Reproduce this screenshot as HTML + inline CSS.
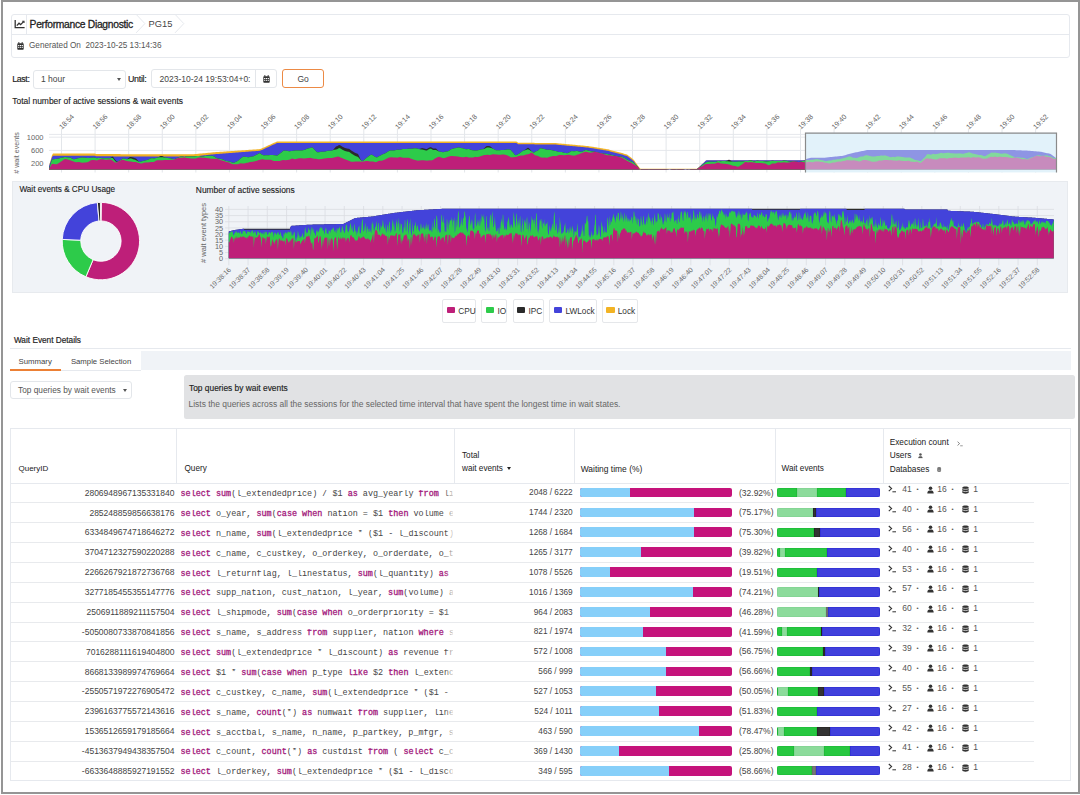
<!DOCTYPE html>
<html><head><meta charset="utf-8"><style>
*{box-sizing:border-box;margin:0;padding:0}
html,body{width:1080px;height:795px;overflow:hidden;background:#fff;font-family:"Liberation Sans", sans-serif;color:#222}
.abs{position:absolute}
.frame{position:absolute;left:1px;top:0;width:1079px;height:794px;border:2px solid #959595;pointer-events:none;z-index:50}
.t{position:absolute;white-space:pre;line-height:1}
.hdr{position:absolute;left:11px;top:14px;width:1059px;height:43.8px;border:1px solid #E6E9EE;border-radius:3px}
.sel{position:absolute;border:1px solid #E3E6EA;border-radius:3px;background:#fff}
.caret{position:absolute;width:0;height:0;border-left:2.5px solid transparent;border-right:2.5px solid transparent;border-top:3px solid #555}
.panel{position:absolute;left:12px;top:181px;width:1055.5px;height:112.2px;background:#F0F3F7;border:1px solid #E7EAEE}
.leg{position:absolute;top:298.5px;height:24px;border:1px solid #E5E7EA;border-radius:2px;background:#fff}
.leg i{position:absolute;left:3.4px;top:7.6px;width:8.5px;height:6px;border-radius:1px}
.leg span{position:absolute;left:15px;top:7px;font-size:8.3px;color:#333;white-space:pre;line-height:1}
.tbl{position:absolute;left:10px;top:428px;width:1060.8px;height:352.5px;border:1px solid #E6E9EE}
.row{position:absolute;left:0;height:19.87px;width:1058px}
.rb{position:absolute;height:1px;background:#E8EAED}
.q{position:absolute;left:169.5px;font-family:"Liberation Mono", monospace;font-size:8.45px;color:#444;white-space:pre;line-height:1;width:272px;overflow:hidden}
.q b{color:#A3197C;font-weight:normal;-webkit-text-stroke:0.3px #A3197C}
.fade{position:absolute;left:434px;width:10px;height:14px;background:linear-gradient(to right,rgba(255,255,255,0),#fff)}
.wt{position:absolute;left:569px;top:4.2px;width:151.5px;height:9.8px;border-radius:2px;overflow:hidden;background:#C5137B}
.wt i{position:absolute;left:0;top:0;bottom:0;background:#86CFF9}
.we{position:absolute;left:765.5px;top:4.6px;width:103.6px;height:9.2px;border-radius:2px;overflow:hidden;display:flex}
.we i{display:block;height:100%;box-sizing:border-box}
.num{position:absolute;font-size:8.5px;color:#444;white-space:pre;line-height:1}
</style></head><body>
<div class="frame"></div>

<div class="hdr"></div>
<div class="abs" style="left:12px;top:33.5px;width:1057px;height:1px;background:#E6E9EE"></div>
<div class="abs" style="left:26px;top:15px;width:1px;height:18.5px;background:#E6E9EE"></div>
<svg class="abs" style="left:14px;top:19px" width="12" height="10" viewBox="0 0 12 10"><path d="M1.2,1 V8.6 H10.6" stroke="#333" stroke-width="1.3" fill="none"/><path d="M2.8,6.6 L5,4.2 L6.6,5.6 L9.6,2.6" stroke="#333" stroke-width="1.3" fill="none"/><path d="M8.2,2.2 H10 V4" stroke="#333" stroke-width="1.1" fill="none"/></svg>
<div class="t" style="left:29.6px;top:20.1px;font-size:10.3px;letter-spacing:-0.3px;color:#222;-webkit-text-stroke:0.28px #222">Performance Diagnostic</div>
<svg class="abs" style="left:135px;top:14px" width="52" height="20"><path d="M1.1,0.3 L9.9,9.6 L1.1,18.9" stroke="#E6E9EE" stroke-width="1" fill="none"/><path d="M40,0.3 L48.8,9.6 L40,18.9" stroke="#E6E9EE" stroke-width="1" fill="none"/></svg>
<div class="t" style="left:148.6px;top:19.8px;font-size:9.3px;color:#444">PG15</div>
<svg class="abs" style="left:17px;top:41.5px" width="7.0" height="8.0" viewBox="0 0 7 8"><rect x="0.3" y="1.2" width="6.4" height="6.5" rx="0.8" fill="#333"/><rect x="1.4" y="0" width="0.9" height="1.8" fill="#333"/><rect x="4.7" y="0" width="0.9" height="1.8" fill="#333"/><g fill="#fff"><rect x="1.1" y="3" width="1.2" height="1"/><rect x="2.9" y="3" width="1.2" height="1"/><rect x="4.7" y="3" width="1.2" height="1"/><rect x="1.1" y="4.8" width="1.2" height="1"/><rect x="2.9" y="4.8" width="1.2" height="1"/><rect x="4.7" y="4.8" width="1.2" height="1"/></g></svg>
<div class="t" style="left:29px;top:42px;font-size:8.2px;color:#555">Generated On  2023-10-25 13:14:36</div>
<div class="t" style="left:12.2px;top:74.6px;font-size:8.9px;letter-spacing:-0.38px;color:#222;-webkit-text-stroke:0.16px #222">Last:</div>
<div class="sel" style="left:33px;top:70px;width:92.5px;height:18.5px"></div>
<div class="t" style="left:41px;top:75px;font-size:8.5px;color:#444">1 hour</div>
<div class="caret" style="left:116.5px;top:78px"></div>
<div class="t" style="left:128px;top:74.6px;font-size:8.9px;letter-spacing:-0.3px;color:#222;-webkit-text-stroke:0.16px #222">Until:</div>
<div class="sel" style="left:151px;top:69px;width:126px;height:18.5px"></div>
<div class="abs" style="left:254.5px;top:69.5px;width:1px;height:17.5px;background:#E3E6EA"></div>
<div class="t" style="left:159.5px;top:74.5px;font-size:8.5px;color:#444">2023-10-24 19:53:04+0:</div>
<svg class="abs" style="left:262.5px;top:74.5px" width="7.0" height="8.0" viewBox="0 0 7 8"><rect x="0.3" y="1.2" width="6.4" height="6.5" rx="0.8" fill="#333"/><rect x="1.4" y="0" width="0.9" height="1.8" fill="#333"/><rect x="4.7" y="0" width="0.9" height="1.8" fill="#333"/><g fill="#fff"><rect x="1.1" y="3" width="1.2" height="1"/><rect x="2.9" y="3" width="1.2" height="1"/><rect x="4.7" y="3" width="1.2" height="1"/><rect x="1.1" y="4.8" width="1.2" height="1"/><rect x="2.9" y="4.8" width="1.2" height="1"/><rect x="4.7" y="4.8" width="1.2" height="1"/></g></svg>
<div class="abs" style="left:282px;top:69px;width:42px;height:18.5px;border:1.3px solid #EC8A45;border-radius:3px;background:#fff"></div>
<div class="t" style="left:297.5px;top:74.5px;font-size:8.5px;color:#444">Go</div>
<div class="t" style="left:12.2px;top:96.6px;font-size:8.47px;color:#222;-webkit-text-stroke:0.12px #222">Total number of active sessions &amp; wait events</div>
<svg class="abs" style="left:0;top:0;font-family:"Liberation Sans", sans-serif" width="1080" height="180">
<line x1="49" y1="134.4" x2="1057" y2="134.4" stroke="#E6E8EC" stroke-width="1"/>
<line x1="49" y1="137.2" x2="1057" y2="137.2" stroke="#E6E8EC" stroke-width="1"/>
<line x1="49" y1="150.4" x2="1057" y2="150.4" stroke="#E6E8EC" stroke-width="1"/>
<line x1="49" y1="163.6" x2="1057" y2="163.6" stroke="#E6E8EC" stroke-width="1"/>
<line x1="61.50" y1="128.5" x2="61.50" y2="172.5" stroke="#E3E6EA" stroke-width="1"/>
<text x="62.00" y="129.8" transform="rotate(-45 62.00 129.8)" font-size="7.1" fill="#5f5f5f">18:54</text>
<line x1="95.09" y1="128.5" x2="95.09" y2="172.5" stroke="#E3E6EA" stroke-width="1"/>
<text x="95.59" y="129.8" transform="rotate(-45 95.59 129.8)" font-size="7.1" fill="#5f5f5f">18:56</text>
<line x1="128.68" y1="128.5" x2="128.68" y2="172.5" stroke="#E3E6EA" stroke-width="1"/>
<text x="129.18" y="129.8" transform="rotate(-45 129.18 129.8)" font-size="7.1" fill="#5f5f5f">18:58</text>
<line x1="162.27" y1="128.5" x2="162.27" y2="172.5" stroke="#E3E6EA" stroke-width="1"/>
<text x="162.77" y="129.8" transform="rotate(-45 162.77 129.8)" font-size="7.1" fill="#5f5f5f">19:00</text>
<line x1="195.86" y1="128.5" x2="195.86" y2="172.5" stroke="#E3E6EA" stroke-width="1"/>
<text x="196.36" y="129.8" transform="rotate(-45 196.36 129.8)" font-size="7.1" fill="#5f5f5f">19:02</text>
<line x1="229.45" y1="128.5" x2="229.45" y2="172.5" stroke="#E3E6EA" stroke-width="1"/>
<text x="229.95" y="129.8" transform="rotate(-45 229.95 129.8)" font-size="7.1" fill="#5f5f5f">19:04</text>
<line x1="263.04" y1="128.5" x2="263.04" y2="172.5" stroke="#E3E6EA" stroke-width="1"/>
<text x="263.54" y="129.8" transform="rotate(-45 263.54 129.8)" font-size="7.1" fill="#5f5f5f">19:06</text>
<line x1="296.63" y1="128.5" x2="296.63" y2="172.5" stroke="#E3E6EA" stroke-width="1"/>
<text x="297.13" y="129.8" transform="rotate(-45 297.13 129.8)" font-size="7.1" fill="#5f5f5f">19:08</text>
<line x1="330.22" y1="128.5" x2="330.22" y2="172.5" stroke="#E3E6EA" stroke-width="1"/>
<text x="330.72" y="129.8" transform="rotate(-45 330.72 129.8)" font-size="7.1" fill="#5f5f5f">19:10</text>
<line x1="363.81" y1="128.5" x2="363.81" y2="172.5" stroke="#E3E6EA" stroke-width="1"/>
<text x="364.31" y="129.8" transform="rotate(-45 364.31 129.8)" font-size="7.1" fill="#5f5f5f">19:12</text>
<line x1="397.40" y1="128.5" x2="397.40" y2="172.5" stroke="#E3E6EA" stroke-width="1"/>
<text x="397.90" y="129.8" transform="rotate(-45 397.90 129.8)" font-size="7.1" fill="#5f5f5f">19:14</text>
<line x1="430.99" y1="128.5" x2="430.99" y2="172.5" stroke="#E3E6EA" stroke-width="1"/>
<text x="431.49" y="129.8" transform="rotate(-45 431.49 129.8)" font-size="7.1" fill="#5f5f5f">19:16</text>
<line x1="464.58" y1="128.5" x2="464.58" y2="172.5" stroke="#E3E6EA" stroke-width="1"/>
<text x="465.08" y="129.8" transform="rotate(-45 465.08 129.8)" font-size="7.1" fill="#5f5f5f">19:18</text>
<line x1="498.17" y1="128.5" x2="498.17" y2="172.5" stroke="#E3E6EA" stroke-width="1"/>
<text x="498.67" y="129.8" transform="rotate(-45 498.67 129.8)" font-size="7.1" fill="#5f5f5f">19:20</text>
<line x1="531.76" y1="128.5" x2="531.76" y2="172.5" stroke="#E3E6EA" stroke-width="1"/>
<text x="532.26" y="129.8" transform="rotate(-45 532.26 129.8)" font-size="7.1" fill="#5f5f5f">19:22</text>
<line x1="565.35" y1="128.5" x2="565.35" y2="172.5" stroke="#E3E6EA" stroke-width="1"/>
<text x="565.85" y="129.8" transform="rotate(-45 565.85 129.8)" font-size="7.1" fill="#5f5f5f">19:24</text>
<line x1="598.94" y1="128.5" x2="598.94" y2="172.5" stroke="#E3E6EA" stroke-width="1"/>
<text x="599.44" y="129.8" transform="rotate(-45 599.44 129.8)" font-size="7.1" fill="#5f5f5f">19:26</text>
<line x1="632.53" y1="128.5" x2="632.53" y2="172.5" stroke="#E3E6EA" stroke-width="1"/>
<text x="633.03" y="129.8" transform="rotate(-45 633.03 129.8)" font-size="7.1" fill="#5f5f5f">19:28</text>
<line x1="666.12" y1="128.5" x2="666.12" y2="172.5" stroke="#E3E6EA" stroke-width="1"/>
<text x="666.62" y="129.8" transform="rotate(-45 666.62 129.8)" font-size="7.1" fill="#5f5f5f">19:30</text>
<line x1="699.71" y1="128.5" x2="699.71" y2="172.5" stroke="#E3E6EA" stroke-width="1"/>
<text x="700.21" y="129.8" transform="rotate(-45 700.21 129.8)" font-size="7.1" fill="#5f5f5f">19:32</text>
<line x1="733.30" y1="128.5" x2="733.30" y2="172.5" stroke="#E3E6EA" stroke-width="1"/>
<text x="733.80" y="129.8" transform="rotate(-45 733.80 129.8)" font-size="7.1" fill="#5f5f5f">19:34</text>
<line x1="766.89" y1="128.5" x2="766.89" y2="172.5" stroke="#E3E6EA" stroke-width="1"/>
<text x="767.39" y="129.8" transform="rotate(-45 767.39 129.8)" font-size="7.1" fill="#5f5f5f">19:36</text>
<line x1="800.48" y1="128.5" x2="800.48" y2="172.5" stroke="#E3E6EA" stroke-width="1"/>
<text x="800.98" y="129.8" transform="rotate(-45 800.98 129.8)" font-size="7.1" fill="#5f5f5f">19:38</text>
<line x1="834.07" y1="128.5" x2="834.07" y2="172.5" stroke="#E3E6EA" stroke-width="1"/>
<text x="834.57" y="129.8" transform="rotate(-45 834.57 129.8)" font-size="7.1" fill="#5f5f5f">19:40</text>
<line x1="867.66" y1="128.5" x2="867.66" y2="172.5" stroke="#E3E6EA" stroke-width="1"/>
<text x="868.16" y="129.8" transform="rotate(-45 868.16 129.8)" font-size="7.1" fill="#5f5f5f">19:42</text>
<line x1="901.25" y1="128.5" x2="901.25" y2="172.5" stroke="#E3E6EA" stroke-width="1"/>
<text x="901.75" y="129.8" transform="rotate(-45 901.75 129.8)" font-size="7.1" fill="#5f5f5f">19:44</text>
<line x1="934.84" y1="128.5" x2="934.84" y2="172.5" stroke="#E3E6EA" stroke-width="1"/>
<text x="935.34" y="129.8" transform="rotate(-45 935.34 129.8)" font-size="7.1" fill="#5f5f5f">19:46</text>
<line x1="968.43" y1="128.5" x2="968.43" y2="172.5" stroke="#E3E6EA" stroke-width="1"/>
<text x="968.93" y="129.8" transform="rotate(-45 968.93 129.8)" font-size="7.1" fill="#5f5f5f">19:48</text>
<line x1="1002.02" y1="128.5" x2="1002.02" y2="172.5" stroke="#E3E6EA" stroke-width="1"/>
<text x="1002.52" y="129.8" transform="rotate(-45 1002.52 129.8)" font-size="7.1" fill="#5f5f5f">19:50</text>
<line x1="1035.61" y1="128.5" x2="1035.61" y2="172.5" stroke="#E3E6EA" stroke-width="1"/>
<text x="1036.11" y="129.8" transform="rotate(-45 1036.11 129.8)" font-size="7.1" fill="#5f5f5f">19:52</text>
<text x="43.5" y="139.89999999999998" text-anchor="end" font-size="7.5" fill="#666">1000</text>
<text x="43.5" y="153.1" text-anchor="end" font-size="7.5" fill="#666">600</text>
<text x="43.5" y="166.29999999999998" text-anchor="end" font-size="7.5" fill="#666">200</text>
<text x="19" y="153" transform="rotate(-90 19 153)" text-anchor="middle" font-size="7.1" fill="#666"># wait events</text>
<rect x="805" y="132.7" width="252" height="39.7" fill="#E2F2FA"/>
<polygon points="49.0,169.4 49.0,166.20 50.0,162.54 51.0,158.89 52.0,155.23 53.0,153.40 54.0,153.40 55.0,153.40 56.0,153.40 57.0,153.40 58.0,153.40 59.0,153.40 60.0,153.40 61.0,153.40 62.0,153.40 63.0,153.40 64.0,153.40 65.0,153.40 66.0,153.40 67.0,153.40 68.0,153.40 69.0,153.40 70.0,153.40 71.0,153.40 72.0,153.40 73.0,153.40 74.0,153.40 75.0,153.40 76.0,153.40 77.0,153.40 78.0,153.40 79.0,153.40 80.0,153.40 81.0,153.40 82.0,153.40 83.0,153.40 84.0,153.40 85.0,153.40 86.0,153.40 87.0,153.40 88.0,153.40 89.0,153.40 90.0,153.40 91.0,153.40 92.0,153.40 93.0,153.40 94.0,153.40 95.0,153.56 96.0,154.10 97.0,154.10 98.0,154.10 99.0,154.10 100.0,154.10 101.0,154.11 102.0,154.11 103.0,154.11 104.0,154.11 105.0,154.11 106.0,154.11 107.0,154.11 108.0,154.11 109.0,154.11 110.0,154.11 111.0,154.12 112.0,154.12 113.0,154.12 114.0,154.12 115.0,154.12 116.0,154.12 117.0,154.12 118.0,154.12 119.0,154.12 120.0,154.12 121.0,154.13 122.0,154.13 123.0,154.13 124.0,154.13 125.0,154.13 126.0,154.13 127.0,154.13 128.0,154.13 129.0,154.13 130.0,154.13 131.0,154.14 132.0,154.14 133.0,154.14 134.0,154.14 135.0,154.14 136.0,154.14 137.0,154.14 138.0,154.14 139.0,154.14 140.0,154.14 141.0,154.15 142.0,154.15 143.0,154.15 144.0,154.15 145.0,154.15 146.0,154.15 147.0,154.15 148.0,154.15 149.0,154.15 150.0,154.16 151.0,154.16 152.0,154.16 153.0,154.16 154.0,154.16 155.0,154.16 156.0,154.16 157.0,154.16 158.0,154.16 159.0,154.16 160.0,154.17 161.0,154.17 162.0,154.17 163.0,154.17 164.0,154.17 165.0,154.17 166.0,154.17 167.0,154.17 168.0,154.17 169.0,154.17 170.0,154.18 171.0,154.18 172.0,154.18 173.0,154.18 174.0,154.18 175.0,154.18 176.0,154.18 177.0,154.18 178.0,154.18 179.0,154.18 180.0,154.19 181.0,154.19 182.0,154.19 183.0,154.19 184.0,154.19 185.0,154.19 186.0,154.19 187.0,154.19 188.0,154.19 189.0,154.19 190.0,154.20 191.0,154.20 192.0,154.20 193.0,154.20 194.0,154.20 195.0,154.10 196.0,154.01 197.0,153.91 198.0,153.82 199.0,153.72 200.0,153.62 201.0,153.53 202.0,153.43 203.0,153.33 204.0,153.24 205.0,153.14 206.0,153.05 207.0,152.95 208.0,152.85 209.0,152.76 210.0,152.66 211.0,152.57 212.0,152.47 213.0,152.37 214.0,152.28 215.0,152.19 216.0,152.12 217.0,152.05 218.0,151.98 219.0,151.91 220.0,151.84 221.0,151.78 222.0,151.71 223.0,151.64 224.0,151.57 225.0,151.50 226.0,151.44 227.0,151.37 228.0,151.30 229.0,151.23 230.0,151.16 231.0,151.09 232.0,151.03 233.0,150.96 234.0,150.89 235.0,150.82 236.0,150.75 237.0,150.68 238.0,150.62 239.0,150.55 240.0,150.48 241.0,150.41 242.0,150.34 243.0,150.27 244.0,150.21 245.0,150.14 246.0,150.07 247.0,150.00 248.0,149.93 249.0,149.86 250.0,149.80 251.0,149.73 252.0,149.66 253.0,149.59 254.0,149.52 255.0,149.46 256.0,149.39 257.0,149.32 258.0,149.25 259.0,149.18 260.0,149.11 261.0,148.74 262.0,148.29 263.0,147.83 264.0,147.38 265.0,146.93 266.0,146.48 267.0,146.02 268.0,145.57 269.0,145.12 270.0,144.67 271.0,144.21 272.0,143.76 273.0,143.31 274.0,142.86 275.0,142.40 276.0,141.95 277.0,141.50 278.0,141.50 279.0,141.50 280.0,141.50 281.0,141.50 282.0,141.50 283.0,141.50 284.0,141.50 285.0,141.50 286.0,141.50 287.0,141.50 288.0,141.50 289.0,141.50 290.0,141.50 291.0,141.50 292.0,141.50 293.0,141.50 294.0,141.50 295.0,141.50 296.0,141.50 297.0,141.50 298.0,141.50 299.0,141.50 300.0,141.50 301.0,141.50 302.0,141.50 303.0,141.50 304.0,141.50 305.0,141.50 306.0,141.50 307.0,141.50 308.0,141.50 309.0,141.50 310.0,141.50 311.0,141.50 312.0,141.50 313.0,141.50 314.0,141.50 315.0,141.50 316.0,141.50 317.0,141.50 318.0,141.50 319.0,141.50 320.0,141.50 321.0,141.50 322.0,141.50 323.0,141.50 324.0,141.50 325.0,141.50 326.0,141.50 327.0,141.50 328.0,141.50 329.0,141.50 330.0,141.50 331.0,141.50 332.0,141.50 333.0,141.50 334.0,141.50 335.0,141.50 336.0,141.50 337.0,141.50 338.0,141.50 339.0,141.50 340.0,141.50 341.0,141.50 342.0,141.50 343.0,141.50 344.0,141.50 345.0,141.50 346.0,141.50 347.0,141.50 348.0,141.50 349.0,141.50 350.0,141.50 351.0,141.50 352.0,141.50 353.0,141.50 354.0,141.50 355.0,141.50 356.0,141.50 357.0,141.50 358.0,141.50 359.0,141.50 360.0,141.50 361.0,141.50 362.0,141.50 363.0,141.50 364.0,141.50 365.0,141.50 366.0,141.50 367.0,141.50 368.0,141.50 369.0,141.50 370.0,141.50 371.0,141.50 372.0,141.50 373.0,141.50 374.0,141.50 375.0,141.50 376.0,141.50 377.0,141.50 378.0,141.50 379.0,141.50 380.0,141.50 381.0,141.50 382.0,141.50 383.0,141.50 384.0,141.50 385.0,141.50 386.0,141.50 387.0,141.50 388.0,141.50 389.0,141.50 390.0,141.50 391.0,141.50 392.0,141.50 393.0,141.50 394.0,141.50 395.0,141.50 396.0,141.50 397.0,141.50 398.0,141.50 399.0,141.50 400.0,141.50 401.0,141.50 402.0,141.50 403.0,141.50 404.0,141.50 405.0,141.50 406.0,141.50 407.0,141.50 408.0,141.50 409.0,141.50 410.0,141.50 411.0,141.50 412.0,141.50 413.0,141.50 414.0,141.50 415.0,141.50 416.0,141.50 417.0,141.50 418.0,141.50 419.0,141.50 420.0,141.50 421.0,141.50 422.0,141.50 423.0,141.50 424.0,141.50 425.0,141.50 426.0,141.50 427.0,141.50 428.0,141.50 429.0,141.50 430.0,141.50 431.0,141.50 432.0,141.50 433.0,141.50 434.0,141.50 435.0,141.50 436.0,141.50 437.0,141.50 438.0,141.50 439.0,141.50 440.0,141.50 441.0,141.50 442.0,141.50 443.0,141.50 444.0,141.50 445.0,141.50 446.0,141.50 447.0,141.50 448.0,141.50 449.0,141.50 450.0,141.50 451.0,141.50 452.0,141.50 453.0,141.50 454.0,141.50 455.0,141.50 456.0,141.50 457.0,141.50 458.0,141.50 459.0,141.50 460.0,141.50 461.0,141.50 462.0,141.50 463.0,141.50 464.0,141.50 465.0,141.50 466.0,141.50 467.0,141.50 468.0,141.50 469.0,141.50 470.0,141.50 471.0,141.50 472.0,141.50 473.0,141.50 474.0,141.50 475.0,141.50 476.0,141.50 477.0,141.50 478.0,141.50 479.0,141.50 480.0,141.50 481.0,141.50 482.0,141.50 483.0,141.50 484.0,141.50 485.0,141.50 486.0,141.50 487.0,141.50 488.0,141.50 489.0,141.50 490.0,141.50 491.0,141.50 492.0,141.50 493.0,141.50 494.0,141.50 495.0,141.50 496.0,141.50 497.0,141.50 498.0,141.50 499.0,141.50 500.0,141.50 501.0,141.50 502.0,141.50 503.0,141.50 504.0,141.50 505.0,141.50 506.0,141.50 507.0,141.50 508.0,141.50 509.0,141.50 510.0,141.50 511.0,141.50 512.0,141.50 513.0,141.50 514.0,141.50 515.0,141.50 516.0,141.50 517.0,141.78 518.0,142.70 519.0,142.71 520.0,142.72 521.0,142.73 522.0,142.74 523.0,142.75 524.0,142.76 525.0,142.77 526.0,142.78 527.0,142.79 528.0,142.81 529.0,142.82 530.0,142.83 531.0,142.84 532.0,142.85 533.0,142.86 534.0,142.87 535.0,142.88 536.0,142.89 537.0,142.90 538.0,142.91 539.0,142.92 540.0,142.93 541.0,142.94 542.0,142.95 543.0,142.96 544.0,142.97 545.0,142.98 546.0,143.00 547.0,143.01 548.0,143.02 549.0,143.03 550.0,143.04 551.0,143.05 552.0,143.06 553.0,143.07 554.0,143.08 555.0,143.09 556.0,143.11 557.0,143.20 558.0,143.29 559.0,143.39 560.0,143.48 561.0,143.57 562.0,143.66 563.0,143.76 564.0,143.85 565.0,143.94 566.0,144.04 567.0,144.13 568.0,144.22 569.0,144.31 570.0,144.41 571.0,144.50 572.0,144.59 573.0,144.68 574.0,144.78 575.0,144.87 576.0,144.96 577.0,145.05 578.0,145.15 579.0,145.24 580.0,145.33 581.0,145.42 582.0,145.52 583.0,145.61 584.0,145.70 585.0,145.79 586.0,145.89 587.0,145.98 588.0,146.07 589.0,146.21 590.0,146.38 591.0,146.54 592.0,146.71 593.0,146.87 594.0,147.04 595.0,147.20 596.0,147.36 597.0,147.53 598.0,147.69 599.0,147.86 600.0,148.02 601.0,148.18 602.0,148.35 603.0,148.51 604.0,148.68 605.0,148.84 606.0,149.00 607.0,149.17 608.0,149.35 609.0,149.62 610.0,149.89 611.0,150.16 612.0,150.43 613.0,150.69 614.0,150.96 615.0,151.23 616.0,151.50 617.0,151.77 618.0,152.03 619.0,152.30 620.0,152.57 621.0,152.84 622.0,153.11 623.0,153.37 624.0,153.64 625.0,153.91 626.0,154.18 627.0,154.45 628.0,155.14 629.0,155.94 630.0,156.74 631.0,157.54 632.0,158.34 633.0,159.14 634.0,160.12 635.0,161.52 636.0,162.92 637.0,164.32 638.0,165.72 639.0,167.12 640.0,168.52 641.0,168.80 642.0,168.80 643.0,168.80 644.0,168.80 645.0,168.80 646.0,168.80 647.0,168.80 648.0,168.80 649.0,168.80 650.0,168.80 651.0,168.80 652.0,168.80 653.0,168.80 654.0,168.80 655.0,168.80 656.0,168.80 657.0,168.80 658.0,168.80 659.0,168.80 660.0,168.80 661.0,168.80 662.0,168.80 663.0,168.80 664.0,168.80 665.0,168.80 666.0,168.80 667.0,168.80 668.0,168.80 669.0,168.80 670.0,168.80 671.0,168.80 672.0,168.80 673.0,168.80 674.0,168.80 675.0,168.80 676.0,168.80 677.0,168.80 678.0,168.80 679.0,168.80 680.0,168.80 681.0,168.80 682.0,168.80 683.0,168.80 684.0,168.80 685.0,168.80 686.0,168.80 687.0,168.80 688.0,168.80 689.0,168.80 690.0,168.80 691.0,168.80 692.0,168.80 693.0,168.80 694.0,168.80 695.0,168.80 696.0,168.80 697.0,168.80 698.0,168.05 699.0,167.12 700.0,166.18 701.0,165.25 702.0,164.32 703.0,163.38 704.0,162.45 705.0,161.51 706.0,160.58 707.0,160.30 708.0,160.30 709.0,160.30 710.0,160.30 711.0,160.30 712.0,160.30 713.0,160.30 714.0,160.30 715.0,160.30 716.0,160.30 717.0,160.30 718.0,160.30 719.0,160.30 720.0,160.30 721.0,160.30 722.0,160.30 723.0,160.30 724.0,160.30 725.0,160.30 726.0,160.30 727.0,160.30 728.0,160.14 729.0,159.78 730.0,160.23 731.0,160.30 732.0,160.30 733.0,160.30 734.0,160.30 735.0,160.30 736.0,160.30 737.0,160.30 738.0,160.30 739.0,160.30 740.0,160.30 741.0,160.30 742.0,160.30 743.0,160.30 744.0,160.30 745.0,160.30 746.0,160.30 747.0,160.30 748.0,160.30 749.0,160.30 750.0,160.30 751.0,160.30 752.0,160.30 753.0,160.30 754.0,160.30 755.0,160.30 756.0,160.30 757.0,160.30 758.0,160.30 759.0,160.30 760.0,160.30 761.0,160.30 762.0,160.30 763.0,160.30 764.0,160.30 765.0,160.30 766.0,160.30 767.0,160.30 768.0,160.30 769.0,160.30 770.0,160.30 771.0,160.30 772.0,160.30 773.0,160.30 774.0,160.30 775.0,160.30 776.0,160.30 777.0,160.30 778.0,160.30 779.0,160.30 780.0,160.30 781.0,160.30 782.0,160.30 783.0,160.30 784.0,160.30 785.0,160.30 786.0,160.30 787.0,160.30 788.0,160.30 789.0,160.30 790.0,160.30 791.0,160.30 792.0,160.30 793.0,160.30 794.0,160.30 795.0,160.30 796.0,160.30 797.0,160.30 798.0,160.30 799.0,160.30 800.0,160.30 801.0,160.30 802.0,160.30 803.0,160.30 804.0,160.30 805.0,160.30 805.0,169.4" fill="#F2B324" />
<polygon points="49.0,169.4 49.0,166.20 50.0,163.20 51.0,160.20 52.0,157.20 53.0,155.70 54.0,155.70 55.0,155.70 56.0,155.70 57.0,155.70 58.0,155.70 59.0,155.70 60.0,155.69 61.0,155.69 62.0,155.69 63.0,155.69 64.0,155.69 65.0,155.69 66.0,155.69 67.0,155.69 68.0,155.69 69.0,155.69 70.0,155.69 71.0,155.69 72.0,155.69 73.0,155.69 74.0,155.68 75.0,155.68 76.0,155.68 77.0,155.68 78.0,155.68 79.0,155.68 80.0,155.68 81.0,155.68 82.0,155.68 83.0,155.68 84.0,155.68 85.0,155.68 86.0,155.68 87.0,155.68 88.0,155.68 89.0,155.67 90.0,155.67 91.0,155.67 92.0,155.67 93.0,155.67 94.0,155.67 95.0,155.83 96.0,156.37 97.0,156.37 98.0,156.37 99.0,156.37 100.0,156.37 101.0,156.37 102.0,156.37 103.0,156.37 104.0,156.37 105.0,156.37 106.0,156.37 107.0,156.37 108.0,156.37 109.0,156.37 110.0,156.37 111.0,156.37 112.0,156.37 113.0,156.37 114.0,156.38 115.0,156.38 116.0,156.38 117.0,156.38 118.0,156.38 119.0,156.38 120.0,156.38 121.0,156.38 122.0,156.38 123.0,156.38 124.0,156.38 125.0,156.38 126.0,156.38 127.0,156.38 128.0,156.38 129.0,156.38 130.0,156.38 131.0,156.38 132.0,156.38 133.0,156.38 134.0,156.38 135.0,156.38 136.0,156.38 137.0,156.38 138.0,156.38 139.0,156.38 140.0,156.38 141.0,156.38 142.0,156.38 143.0,156.38 144.0,156.38 145.0,156.39 146.0,156.39 147.0,156.39 148.0,156.39 149.0,156.39 150.0,156.39 151.0,156.39 152.0,156.39 153.0,156.39 154.0,156.39 155.0,156.39 156.0,156.39 157.0,156.39 158.0,156.39 159.0,156.39 160.0,156.34 161.0,155.99 162.0,156.05 163.0,156.39 164.0,156.39 165.0,156.39 166.0,156.39 167.0,156.39 168.0,156.39 169.0,156.39 170.0,156.39 171.0,156.39 172.0,156.39 173.0,156.39 174.0,156.39 175.0,156.39 176.0,156.39 177.0,156.40 178.0,156.40 179.0,156.40 180.0,156.40 181.0,156.40 182.0,156.40 183.0,156.40 184.0,156.40 185.0,156.40 186.0,156.40 187.0,156.40 188.0,156.40 189.0,156.40 190.0,156.40 191.0,156.40 192.0,156.40 193.0,156.40 194.0,156.40 195.0,156.30 196.0,156.20 197.0,156.09 198.0,155.99 199.0,155.88 200.0,155.77 201.0,155.67 202.0,155.56 203.0,155.45 204.0,155.35 205.0,155.24 206.0,155.14 207.0,155.03 208.0,154.92 209.0,154.82 210.0,154.71 211.0,154.61 212.0,154.50 213.0,154.39 214.0,154.29 215.0,154.19 216.0,154.11 217.0,154.03 218.0,153.96 219.0,153.88 220.0,153.80 221.0,153.73 222.0,153.65 223.0,153.58 224.0,153.50 225.0,153.42 226.0,153.35 227.0,153.27 228.0,153.19 229.0,153.12 230.0,153.04 231.0,152.96 232.0,152.89 233.0,152.81 234.0,152.74 235.0,152.66 236.0,152.58 237.0,152.51 238.0,152.43 239.0,152.35 240.0,152.28 241.0,152.20 242.0,152.12 243.0,152.05 244.0,151.97 245.0,151.90 246.0,151.82 247.0,151.74 248.0,151.67 249.0,151.59 250.0,151.51 251.0,151.44 252.0,151.36 253.0,151.29 254.0,151.21 255.0,151.13 256.0,151.06 257.0,150.98 258.0,150.90 259.0,150.83 260.0,150.75 261.0,150.37 262.0,149.91 263.0,149.45 264.0,148.99 265.0,148.53 266.0,148.06 267.0,147.60 268.0,147.14 269.0,146.68 270.0,146.22 271.0,145.76 272.0,145.30 273.0,144.84 274.0,144.38 275.0,143.92 276.0,143.46 277.0,143.00 278.0,143.00 279.0,143.00 280.0,143.00 281.0,143.00 282.0,143.00 283.0,143.00 284.0,143.00 285.0,143.00 286.0,143.00 287.0,143.00 288.0,143.00 289.0,143.00 290.0,143.00 291.0,143.00 292.0,143.00 293.0,143.00 294.0,143.00 295.0,143.00 296.0,143.00 297.0,143.00 298.0,143.00 299.0,143.00 300.0,143.00 301.0,143.00 302.0,143.00 303.0,143.00 304.0,143.00 305.0,143.00 306.0,143.00 307.0,143.00 308.0,143.00 309.0,143.00 310.0,143.00 311.0,143.00 312.0,143.00 313.0,143.00 314.0,143.00 315.0,143.00 316.0,143.00 317.0,143.00 318.0,143.00 319.0,143.00 320.0,143.00 321.0,143.00 322.0,143.00 323.0,143.00 324.0,143.00 325.0,143.00 326.0,143.00 327.0,143.00 328.0,143.00 329.0,143.00 330.0,143.00 331.0,143.00 332.0,143.00 333.0,143.00 334.0,143.00 335.0,143.00 336.0,143.00 337.0,143.00 338.0,143.00 339.0,143.00 340.0,143.00 341.0,143.00 342.0,143.00 343.0,143.00 344.0,143.00 345.0,143.00 346.0,143.00 347.0,143.00 348.0,143.00 349.0,143.00 350.0,143.00 351.0,143.00 352.0,143.00 353.0,143.00 354.0,143.00 355.0,143.00 356.0,143.00 357.0,143.00 358.0,143.00 359.0,143.00 360.0,143.00 361.0,143.00 362.0,143.00 363.0,143.00 364.0,143.00 365.0,143.00 366.0,143.00 367.0,143.00 368.0,143.00 369.0,143.00 370.0,143.00 371.0,143.00 372.0,143.00 373.0,143.00 374.0,143.00 375.0,143.00 376.0,143.00 377.0,143.00 378.0,143.00 379.0,143.00 380.0,143.00 381.0,143.00 382.0,143.00 383.0,143.00 384.0,143.00 385.0,143.00 386.0,143.00 387.0,143.00 388.0,143.00 389.0,143.00 390.0,143.00 391.0,143.00 392.0,143.00 393.0,143.00 394.0,143.00 395.0,143.00 396.0,143.00 397.0,143.00 398.0,143.00 399.0,143.00 400.0,143.00 401.0,143.00 402.0,143.00 403.0,143.00 404.0,143.00 405.0,143.00 406.0,143.00 407.0,143.00 408.0,143.00 409.0,143.00 410.0,143.00 411.0,143.00 412.0,143.00 413.0,143.00 414.0,143.00 415.0,143.00 416.0,143.00 417.0,143.00 418.0,143.00 419.0,143.00 420.0,143.00 421.0,143.00 422.0,143.00 423.0,143.00 424.0,143.00 425.0,143.00 426.0,143.00 427.0,143.00 428.0,143.00 429.0,143.00 430.0,143.00 431.0,143.00 432.0,143.00 433.0,143.00 434.0,143.00 435.0,143.00 436.0,143.00 437.0,143.00 438.0,143.00 439.0,143.00 440.0,143.00 441.0,143.00 442.0,143.00 443.0,143.00 444.0,143.00 445.0,143.00 446.0,143.00 447.0,143.00 448.0,143.00 449.0,143.00 450.0,143.00 451.0,143.00 452.0,143.00 453.0,143.00 454.0,143.00 455.0,143.00 456.0,143.00 457.0,143.00 458.0,143.00 459.0,143.00 460.0,143.00 461.0,143.00 462.0,143.00 463.0,143.00 464.0,143.00 465.0,143.00 466.0,143.00 467.0,143.00 468.0,143.00 469.0,143.00 470.0,143.00 471.0,143.00 472.0,143.00 473.0,143.00 474.0,143.00 475.0,143.00 476.0,143.00 477.0,143.00 478.0,143.00 479.0,143.00 480.0,143.00 481.0,143.00 482.0,143.00 483.0,143.00 484.0,143.00 485.0,143.00 486.0,143.00 487.0,143.00 488.0,143.00 489.0,143.00 490.0,143.00 491.0,143.00 492.0,143.00 493.0,143.00 494.0,143.00 495.0,143.00 496.0,143.00 497.0,143.00 498.0,143.00 499.0,143.00 500.0,143.00 501.0,143.00 502.0,143.00 503.0,143.00 504.0,143.00 505.0,143.00 506.0,143.00 507.0,143.00 508.0,143.00 509.0,143.00 510.0,143.00 511.0,143.00 512.0,143.00 513.0,143.00 514.0,143.00 515.0,143.00 516.0,143.00 517.0,143.28 518.0,144.20 519.0,144.21 520.0,144.22 521.0,144.23 522.0,144.24 523.0,144.25 524.0,144.26 525.0,144.27 526.0,144.28 527.0,144.29 528.0,144.31 529.0,144.32 530.0,144.33 531.0,144.34 532.0,144.35 533.0,144.36 534.0,144.37 535.0,144.38 536.0,144.39 537.0,144.40 538.0,144.41 539.0,144.42 540.0,144.43 541.0,144.44 542.0,144.45 543.0,144.46 544.0,144.47 545.0,144.48 546.0,144.50 547.0,144.51 548.0,144.52 549.0,144.53 550.0,144.54 551.0,144.55 552.0,144.56 553.0,144.57 554.0,144.58 555.0,144.59 556.0,144.61 557.0,144.70 558.0,144.79 559.0,144.89 560.0,144.98 561.0,145.07 562.0,145.16 563.0,145.26 564.0,145.35 565.0,145.44 566.0,145.54 567.0,145.63 568.0,145.72 569.0,145.81 570.0,145.91 571.0,146.00 572.0,146.09 573.0,146.18 574.0,146.28 575.0,146.37 576.0,146.46 577.0,146.55 578.0,146.65 579.0,146.74 580.0,146.83 581.0,146.92 582.0,147.02 583.0,147.11 584.0,147.20 585.0,147.29 586.0,147.39 587.0,147.48 588.0,147.57 589.0,147.71 590.0,147.88 591.0,148.04 592.0,148.21 593.0,148.37 594.0,148.54 595.0,148.70 596.0,148.86 597.0,149.03 598.0,149.19 599.0,149.36 600.0,149.52 601.0,149.68 602.0,149.85 603.0,150.01 604.0,150.18 605.0,150.34 606.0,150.50 607.0,150.67 608.0,150.85 609.0,151.12 610.0,151.39 611.0,151.66 612.0,151.93 613.0,152.19 614.0,152.46 615.0,152.73 616.0,153.00 617.0,153.27 618.0,153.53 619.0,153.80 620.0,154.07 621.0,154.34 622.0,154.61 623.0,154.87 624.0,155.14 625.0,155.41 626.0,155.68 627.0,155.95 628.0,156.64 629.0,157.44 630.0,158.24 631.0,159.04 632.0,159.84 633.0,160.64 634.0,161.62 635.0,163.02 636.0,164.42 637.0,165.82 638.0,167.22 639.0,168.62 640.0,170.02 641.0,169.10 642.0,169.10 643.0,169.10 644.0,169.10 645.0,169.10 646.0,169.10 647.0,169.10 648.0,169.10 649.0,169.10 650.0,169.10 651.0,169.10 652.0,169.10 653.0,169.10 654.0,169.10 655.0,169.10 656.0,169.10 657.0,169.10 658.0,169.10 659.0,169.10 660.0,169.10 661.0,169.10 662.0,169.10 663.0,169.10 664.0,169.10 665.0,169.10 666.0,169.10 667.0,169.10 668.0,169.10 669.0,169.10 670.0,169.10 671.0,169.10 672.0,169.10 673.0,169.10 674.0,169.10 675.0,169.10 676.0,169.10 677.0,169.10 678.0,169.10 679.0,169.10 680.0,169.10 681.0,169.10 682.0,169.10 683.0,169.10 684.0,169.10 685.0,169.10 686.0,169.10 687.0,169.10 688.0,169.10 689.0,169.10 690.0,169.10 691.0,169.10 692.0,169.10 693.0,169.10 694.0,169.10 695.0,169.10 696.0,169.10 697.0,169.10 698.0,168.25 699.0,167.22 700.0,166.18 701.0,165.25 702.0,164.32 703.0,163.38 704.0,162.45 705.0,161.51 706.0,160.58 707.0,160.30 708.0,160.30 709.0,160.30 710.0,160.30 711.0,160.30 712.0,160.30 713.0,160.30 714.0,160.30 715.0,160.30 716.0,160.30 717.0,160.30 718.0,160.30 719.0,160.30 720.0,160.30 721.0,160.30 722.0,160.30 723.0,160.30 724.0,160.30 725.0,160.30 726.0,160.30 727.0,160.30 728.0,160.14 729.0,159.78 730.0,160.23 731.0,160.30 732.0,160.30 733.0,160.30 734.0,160.30 735.0,160.30 736.0,160.30 737.0,160.30 738.0,160.30 739.0,160.30 740.0,160.30 741.0,160.30 742.0,160.30 743.0,160.30 744.0,160.30 745.0,160.30 746.0,160.30 747.0,160.30 748.0,160.30 749.0,160.30 750.0,160.30 751.0,160.30 752.0,160.30 753.0,160.30 754.0,160.30 755.0,160.30 756.0,160.30 757.0,160.30 758.0,160.30 759.0,160.30 760.0,160.30 761.0,160.30 762.0,160.30 763.0,160.30 764.0,160.30 765.0,160.30 766.0,160.30 767.0,160.30 768.0,160.30 769.0,160.30 770.0,160.30 771.0,160.30 772.0,160.30 773.0,160.30 774.0,160.30 775.0,160.30 776.0,160.30 777.0,160.30 778.0,160.30 779.0,160.30 780.0,160.30 781.0,160.30 782.0,160.30 783.0,160.30 784.0,160.30 785.0,160.30 786.0,160.30 787.0,160.30 788.0,160.30 789.0,160.30 790.0,160.30 791.0,160.30 792.0,160.30 793.0,160.30 794.0,160.30 795.0,160.30 796.0,160.30 797.0,160.30 798.0,160.30 799.0,160.30 800.0,160.30 801.0,160.30 802.0,160.30 803.0,160.30 804.0,160.30 805.0,160.30 805.0,169.4" fill="#4343DA" />
<polygon points="49.0,169.4 49.0,168.90 50.0,165.69 51.0,162.49 52.0,159.57 53.0,159.42 54.0,159.26 55.0,159.10 56.0,158.95 57.0,158.80 58.0,158.65 59.0,158.38 60.0,158.10 61.0,157.83 62.0,157.67 63.0,157.51 64.0,157.35 65.0,157.05 66.0,157.17 67.0,157.29 68.0,157.39 69.0,157.48 70.0,157.58 71.0,158.04 72.0,158.49 73.0,158.95 74.0,159.17 75.0,159.02 76.0,158.87 77.0,158.57 78.0,158.27 79.0,157.98 80.0,157.83 81.0,157.68 82.0,157.58 83.0,157.60 84.0,157.63 85.0,157.66 86.0,157.78 87.0,157.90 88.0,158.03 89.0,157.92 90.0,157.82 91.0,157.71 92.0,157.63 93.0,157.54 94.0,157.46 95.0,157.69 96.0,157.93 97.0,158.17 98.0,158.07 99.0,157.96 100.0,157.86 101.0,158.03 102.0,158.20 103.0,158.37 104.0,158.29 105.0,158.22 106.0,158.15 107.0,158.22 108.0,158.28 109.0,158.34 110.0,158.16 111.0,157.54 112.0,156.92 113.0,156.84 114.0,158.14 115.0,159.44 116.0,160.87 117.0,161.77 118.0,161.43 119.0,160.84 120.0,160.25 121.0,159.67 122.0,159.11 123.0,158.55 124.0,158.47 125.0,158.74 126.0,159.01 127.0,159.28 128.0,158.52 129.0,157.75 130.0,156.99 131.0,156.93 132.0,157.23 133.0,157.53 134.0,157.86 135.0,158.20 136.0,158.54 137.0,159.62 138.0,160.70 139.0,161.78 140.0,162.01 141.0,161.62 142.0,161.22 143.0,161.01 144.0,160.79 145.0,160.57 146.0,160.28 147.0,159.99 148.0,159.70 149.0,159.20 150.0,158.71 151.0,158.22 152.0,158.21 153.0,158.32 154.0,158.42 155.0,158.21 156.0,158.01 157.0,157.80 158.0,157.58 159.0,156.96 160.0,156.34 161.0,155.99 162.0,156.05 163.0,156.50 164.0,157.03 165.0,157.56 166.0,157.69 167.0,157.85 168.0,158.01 169.0,158.17 170.0,158.36 171.0,158.55 172.0,158.74 173.0,159.07 174.0,159.08 175.0,158.94 176.0,158.51 177.0,158.07 178.0,157.63 179.0,157.20 180.0,156.76 181.0,156.40 182.0,156.40 183.0,156.60 184.0,156.94 185.0,156.66 186.0,156.40 187.0,156.40 188.0,156.40 189.0,156.40 190.0,156.40 191.0,156.45 192.0,156.54 193.0,156.62 194.0,156.40 195.0,156.30 196.0,156.20 197.0,156.09 198.0,155.99 199.0,156.00 200.0,156.20 201.0,156.39 202.0,156.58 203.0,156.40 204.0,156.22 205.0,156.03 206.0,155.94 207.0,155.84 208.0,155.75 209.0,155.80 210.0,155.86 211.0,155.91 212.0,155.77 213.0,156.06 214.0,156.46 215.0,157.05 216.0,157.64 217.0,158.22 218.0,158.50 219.0,158.68 220.0,158.86 221.0,159.04 222.0,159.21 223.0,159.39 224.0,159.90 225.0,160.41 226.0,160.93 227.0,161.09 228.0,161.25 229.0,161.42 230.0,161.76 231.0,162.11 232.0,162.45 233.0,162.65 234.0,162.84 235.0,162.35 236.0,161.78 237.0,161.21 238.0,160.64 239.0,159.85 240.0,159.06 241.0,158.26 242.0,157.50 243.0,156.73 244.0,156.64 245.0,156.77 246.0,156.89 247.0,157.01 248.0,157.23 249.0,157.14 250.0,156.72 251.0,156.63 252.0,156.53 253.0,156.43 254.0,155.99 255.0,155.54 256.0,155.09 257.0,154.54 258.0,153.96 259.0,153.33 260.0,153.18 261.0,153.99 262.0,154.80 263.0,155.12 264.0,155.44 265.0,155.30 266.0,155.29 267.0,155.28 268.0,155.27 269.0,155.15 270.0,155.02 271.0,154.90 272.0,155.00 273.0,155.10 274.0,155.20 275.0,155.35 276.0,155.54 277.0,155.81 278.0,155.03 279.0,154.25 280.0,153.48 281.0,152.68 282.0,151.88 283.0,151.08 284.0,150.60 285.0,150.63 286.0,150.67 287.0,150.84 288.0,151.02 289.0,151.19 290.0,151.13 291.0,151.06 292.0,151.00 293.0,150.87 294.0,150.74 295.0,150.61 296.0,150.62 297.0,150.62 298.0,150.62 299.0,150.58 300.0,150.54 301.0,150.49 302.0,150.43 303.0,150.25 304.0,150.07 305.0,149.65 306.0,149.23 307.0,148.82 308.0,148.58 309.0,148.34 310.0,148.10 311.0,147.63 312.0,147.28 313.0,148.09 314.0,149.15 315.0,150.21 316.0,151.27 317.0,152.35 318.0,152.31 319.0,152.26 320.0,152.06 321.0,151.86 322.0,151.66 323.0,151.65 324.0,151.65 325.0,151.64 326.0,151.36 327.0,151.08 328.0,150.79 329.0,150.79 330.0,150.80 331.0,150.80 332.0,150.61 333.0,150.30 334.0,148.83 335.0,147.64 336.0,146.45 337.0,146.26 338.0,145.67 339.0,145.07 340.0,145.25 341.0,145.87 342.0,146.48 343.0,147.09 344.0,147.51 345.0,147.92 346.0,148.34 347.0,148.51 348.0,148.68 349.0,148.86 350.0,149.49 351.0,150.25 352.0,151.01 353.0,151.58 354.0,152.15 355.0,152.72 356.0,153.17 357.0,153.62 358.0,154.07 359.0,156.12 360.0,158.17 361.0,160.22 362.0,160.89 363.0,160.71 364.0,159.98 365.0,159.16 366.0,158.35 367.0,157.54 368.0,156.79 369.0,156.05 370.0,155.30 371.0,154.66 372.0,154.70 373.0,155.41 374.0,156.05 375.0,156.69 376.0,157.33 377.0,157.50 378.0,156.84 379.0,156.19 380.0,155.66 381.0,155.13 382.0,154.60 383.0,154.23 384.0,153.86 385.0,153.49 386.0,152.83 387.0,152.17 388.0,151.51 389.0,150.94 390.0,150.56 391.0,150.45 392.0,150.48 393.0,150.52 394.0,150.55 395.0,150.30 396.0,150.05 397.0,149.80 398.0,149.83 399.0,149.87 400.0,149.90 401.0,149.60 402.0,149.30 403.0,148.99 404.0,149.00 405.0,149.00 406.0,149.00 407.0,148.93 408.0,148.85 409.0,148.77 410.0,148.76 411.0,148.76 412.0,148.75 413.0,148.60 414.0,148.46 415.0,148.32 416.0,148.45 417.0,148.58 418.0,148.71 419.0,148.92 420.0,148.67 421.0,148.42 422.0,148.10 423.0,148.28 424.0,148.46 425.0,148.87 426.0,148.91 427.0,148.95 428.0,148.36 429.0,147.77 430.0,147.17 431.0,147.23 432.0,147.80 433.0,148.43 434.0,148.46 435.0,148.49 436.0,148.53 437.0,149.54 438.0,150.55 439.0,151.56 440.0,151.70 441.0,151.83 442.0,151.97 443.0,152.24 444.0,151.98 445.0,151.73 446.0,151.60 447.0,151.46 448.0,151.33 449.0,150.67 450.0,150.02 451.0,149.36 452.0,149.01 453.0,148.66 454.0,148.31 455.0,148.16 456.0,148.00 457.0,147.85 458.0,147.55 459.0,147.60 460.0,147.82 461.0,147.99 462.0,148.17 463.0,148.35 464.0,148.63 465.0,148.91 466.0,149.20 467.0,149.15 468.0,149.09 469.0,149.04 470.0,149.42 471.0,149.80 472.0,150.18 473.0,150.32 474.0,150.45 475.0,150.58 476.0,150.52 477.0,150.39 478.0,150.25 479.0,150.00 480.0,149.76 481.0,149.51 482.0,149.36 483.0,149.21 484.0,148.56 485.0,147.54 486.0,146.52 487.0,146.00 488.0,145.94 489.0,145.88 490.0,146.22 491.0,147.04 492.0,147.85 493.0,148.67 494.0,149.23 495.0,149.78 496.0,150.29 497.0,150.30 498.0,150.31 499.0,150.33 500.0,150.21 501.0,150.10 502.0,149.99 503.0,149.95 504.0,149.90 505.0,149.86 506.0,149.72 507.0,149.59 508.0,149.45 509.0,149.43 510.0,149.40 511.0,150.32 512.0,151.43 513.0,152.54 514.0,153.64 515.0,154.88 516.0,155.16 517.0,154.79 518.0,154.23 519.0,153.66 520.0,153.10 521.0,152.32 522.0,151.53 523.0,150.75 524.0,150.53 525.0,149.87 526.0,149.21 527.0,148.32 528.0,147.87 529.0,148.33 530.0,149.41 531.0,150.48 532.0,151.56 533.0,152.23 534.0,152.75 535.0,151.83 536.0,151.36 537.0,150.90 538.0,150.43 539.0,149.48 540.0,148.54 541.0,148.19 542.0,148.44 543.0,148.69 544.0,148.94 545.0,149.28 546.0,149.61 547.0,149.94 548.0,149.85 549.0,149.76 550.0,149.67 551.0,149.96 552.0,150.25 553.0,150.54 554.0,150.73 555.0,150.92 556.0,151.11 557.0,151.41 558.0,151.71 559.0,152.00 560.0,152.06 561.0,152.08 562.0,152.11 563.0,152.39 564.0,152.67 565.0,152.96 566.0,153.08 567.0,153.20 568.0,152.98 569.0,152.43 570.0,151.88 571.0,151.32 572.0,151.06 573.0,151.20 574.0,151.34 575.0,151.17 576.0,150.99 577.0,150.82 578.0,151.16 579.0,151.50 580.0,151.84 581.0,151.87 582.0,151.84 583.0,151.25 584.0,150.79 585.0,150.32 586.0,150.07 587.0,150.32 588.0,150.58 589.0,150.83 590.0,151.04 591.0,151.25 592.0,151.46 593.0,151.53 594.0,151.60 595.0,151.67 596.0,151.99 597.0,152.30 598.0,152.61 599.0,152.80 600.0,152.98 601.0,153.17 602.0,153.35 603.0,153.54 604.0,153.72 605.0,153.79 606.0,153.86 607.0,153.93 608.0,154.18 609.0,154.38 610.0,154.59 611.0,154.77 612.0,154.95 613.0,155.13 614.0,155.39 615.0,155.65 616.0,155.91 617.0,156.15 618.0,156.39 619.0,156.63 620.0,156.51 621.0,156.49 622.0,156.72 623.0,157.22 624.0,157.71 625.0,158.21 626.0,158.84 627.0,159.47 628.0,160.10 629.0,160.52 630.0,160.94 631.0,161.36 632.0,161.83 633.0,162.30 634.0,162.91 635.0,163.84 636.0,164.77 637.0,165.82 638.0,167.22 639.0,168.62 640.0,170.02 641.0,169.10 642.0,169.10 643.0,169.10 644.0,169.10 645.0,169.10 646.0,169.10 647.0,169.10 648.0,169.10 649.0,169.27 650.0,169.10 651.0,169.10 652.0,169.10 653.0,169.10 654.0,169.10 655.0,169.10 656.0,169.10 657.0,169.10 658.0,169.10 659.0,169.10 660.0,169.10 661.0,169.10 662.0,169.10 663.0,169.10 664.0,169.10 665.0,169.10 666.0,169.10 667.0,169.30 668.0,169.36 669.0,169.43 670.0,169.50 671.0,169.21 672.0,169.10 673.0,169.10 674.0,169.10 675.0,169.10 676.0,169.28 677.0,169.17 678.0,169.10 679.0,169.10 680.0,169.10 681.0,169.10 682.0,169.10 683.0,169.10 684.0,169.24 685.0,169.53 686.0,169.59 687.0,169.65 688.0,169.71 689.0,169.43 690.0,169.16 691.0,169.10 692.0,169.10 693.0,169.10 694.0,169.10 695.0,169.10 696.0,169.10 697.0,169.10 698.0,168.40 699.0,167.56 700.0,166.71 701.0,166.00 702.0,165.29 703.0,164.58 704.0,163.85 705.0,163.11 706.0,162.37 707.0,161.95 708.0,161.77 709.0,161.58 710.0,161.65 711.0,161.71 712.0,161.77 713.0,161.82 714.0,161.87 715.0,161.92 716.0,161.64 717.0,161.36 718.0,161.08 719.0,161.12 720.0,161.16 721.0,161.20 722.0,161.11 723.0,161.03 724.0,160.94 725.0,161.08 726.0,161.05 727.0,160.65 728.0,160.14 729.0,159.78 730.0,160.23 731.0,160.86 732.0,161.49 733.0,161.70 734.0,161.74 735.0,161.78 736.0,161.83 737.0,161.76 738.0,161.62 739.0,161.44 740.0,161.50 741.0,161.55 742.0,161.61 743.0,161.42 744.0,161.23 745.0,161.04 746.0,160.98 747.0,160.93 748.0,160.88 749.0,160.68 750.0,160.49 751.0,160.30 752.0,160.69 753.0,161.09 754.0,161.49 755.0,161.22 756.0,160.96 757.0,160.69 758.0,160.80 759.0,160.92 760.0,161.03 761.0,161.02 762.0,161.01 763.0,161.00 764.0,161.17 765.0,161.34 766.0,161.51 767.0,161.39 768.0,161.28 769.0,161.16 770.0,161.02 771.0,160.88 772.0,160.74 773.0,160.84 774.0,160.93 775.0,161.03 776.0,161.01 777.0,160.99 778.0,160.97 779.0,161.02 780.0,161.06 781.0,161.10 782.0,160.93 783.0,160.76 784.0,160.60 785.0,160.73 786.0,160.87 787.0,161.01 788.0,161.26 789.0,161.52 790.0,161.77 791.0,161.59 792.0,161.42 793.0,161.24 794.0,161.39 795.0,161.54 796.0,161.69 797.0,161.84 798.0,161.99 799.0,162.14 800.0,161.82 801.0,161.50 802.0,161.19 803.0,160.97 804.0,160.75 805.0,160.53 805.0,169.4" fill="#2A2A2A" />
<polygon points="49.0,169.4 49.0,168.90 50.0,165.69 51.0,162.49 52.0,159.57 53.0,159.42 54.0,159.26 55.0,159.10 56.0,158.95 57.0,158.80 58.0,158.65 59.0,158.38 60.0,158.10 61.0,157.83 62.0,157.67 63.0,157.51 64.0,157.35 65.0,157.05 66.0,157.17 67.0,157.29 68.0,157.39 69.0,157.48 70.0,157.58 71.0,158.04 72.0,158.49 73.0,158.95 74.0,159.17 75.0,159.02 76.0,158.87 77.0,158.57 78.0,158.27 79.0,157.98 80.0,157.83 81.0,157.68 82.0,157.58 83.0,157.60 84.0,157.63 85.0,157.66 86.0,157.78 87.0,157.90 88.0,158.03 89.0,157.92 90.0,157.82 91.0,157.71 92.0,157.63 93.0,157.54 94.0,157.46 95.0,157.69 96.0,157.93 97.0,158.17 98.0,158.07 99.0,157.96 100.0,157.86 101.0,158.03 102.0,158.20 103.0,158.37 104.0,158.29 105.0,158.22 106.0,158.15 107.0,158.22 108.0,158.28 109.0,158.34 110.0,158.16 111.0,157.97 112.0,157.78 113.0,158.14 114.0,159.44 115.0,160.74 116.0,161.74 117.0,162.20 118.0,161.43 119.0,160.84 120.0,160.25 121.0,159.67 122.0,159.11 123.0,158.55 124.0,158.47 125.0,158.74 126.0,159.01 127.0,159.28 128.0,159.05 129.0,158.82 130.0,158.59 131.0,158.53 132.0,158.83 133.0,159.13 134.0,159.46 135.0,159.80 136.0,160.14 137.0,160.69 138.0,161.23 139.0,161.78 140.0,162.01 141.0,161.62 142.0,161.22 143.0,161.01 144.0,160.79 145.0,160.57 146.0,160.28 147.0,159.99 148.0,159.70 149.0,159.20 150.0,158.71 151.0,158.22 152.0,158.21 153.0,158.32 154.0,158.42 155.0,158.21 156.0,158.01 157.0,157.80 158.0,157.58 159.0,157.36 160.0,157.14 161.0,157.19 162.0,157.25 163.0,157.30 164.0,157.43 165.0,157.56 166.0,157.69 167.0,157.85 168.0,158.01 169.0,158.17 170.0,158.36 171.0,158.55 172.0,158.74 173.0,159.07 174.0,159.08 175.0,158.94 176.0,158.51 177.0,158.07 178.0,157.63 179.0,157.20 180.0,156.76 181.0,156.40 182.0,156.40 183.0,156.60 184.0,156.94 185.0,156.66 186.0,156.40 187.0,156.40 188.0,156.40 189.0,156.40 190.0,156.40 191.0,156.45 192.0,156.54 193.0,156.62 194.0,156.40 195.0,156.30 196.0,156.20 197.0,156.09 198.0,155.99 199.0,156.00 200.0,156.20 201.0,156.39 202.0,156.58 203.0,156.40 204.0,156.22 205.0,156.03 206.0,155.94 207.0,155.84 208.0,155.75 209.0,155.80 210.0,155.86 211.0,155.91 212.0,155.77 213.0,156.06 214.0,156.46 215.0,157.05 216.0,157.64 217.0,158.22 218.0,158.50 219.0,158.68 220.0,158.86 221.0,159.04 222.0,159.21 223.0,159.39 224.0,159.90 225.0,160.41 226.0,160.93 227.0,161.09 228.0,161.25 229.0,161.42 230.0,161.76 231.0,162.11 232.0,162.45 233.0,162.65 234.0,162.84 235.0,162.35 236.0,161.78 237.0,161.21 238.0,160.64 239.0,159.85 240.0,159.06 241.0,158.26 242.0,157.50 243.0,156.73 244.0,156.64 245.0,156.77 246.0,156.89 247.0,157.01 248.0,157.23 249.0,157.14 250.0,156.72 251.0,156.63 252.0,156.53 253.0,156.43 254.0,155.99 255.0,155.54 256.0,155.09 257.0,154.54 258.0,153.96 259.0,153.33 260.0,153.18 261.0,153.99 262.0,154.80 263.0,155.12 264.0,155.44 265.0,155.30 266.0,155.29 267.0,155.28 268.0,155.27 269.0,155.15 270.0,155.02 271.0,154.90 272.0,155.00 273.0,155.10 274.0,155.20 275.0,155.35 276.0,155.54 277.0,155.81 278.0,155.03 279.0,154.25 280.0,153.48 281.0,152.68 282.0,151.88 283.0,151.08 284.0,150.60 285.0,150.63 286.0,150.67 287.0,150.84 288.0,151.02 289.0,151.19 290.0,151.13 291.0,151.06 292.0,151.00 293.0,150.87 294.0,150.74 295.0,150.61 296.0,150.62 297.0,150.62 298.0,150.62 299.0,150.58 300.0,150.54 301.0,150.49 302.0,150.43 303.0,150.25 304.0,150.07 305.0,149.65 306.0,149.23 307.0,148.82 308.0,148.58 309.0,148.34 310.0,148.10 311.0,147.63 312.0,147.28 313.0,148.09 314.0,149.15 315.0,150.21 316.0,151.27 317.0,152.35 318.0,152.31 319.0,152.26 320.0,152.06 321.0,151.86 322.0,151.66 323.0,151.65 324.0,151.65 325.0,151.64 326.0,151.36 327.0,151.08 328.0,150.79 329.0,150.79 330.0,150.80 331.0,150.80 332.0,150.61 333.0,150.30 334.0,149.83 335.0,149.64 336.0,149.45 337.0,149.26 338.0,148.67 339.0,148.07 340.0,148.25 341.0,148.87 342.0,149.48 343.0,150.09 344.0,150.51 345.0,150.92 346.0,151.34 347.0,151.51 348.0,151.68 349.0,151.86 350.0,152.49 351.0,153.25 352.0,154.01 353.0,154.58 354.0,155.15 355.0,155.72 356.0,156.17 357.0,156.62 358.0,157.07 359.0,158.12 360.0,159.17 361.0,160.22 362.0,160.89 363.0,160.71 364.0,159.98 365.0,159.16 366.0,158.35 367.0,157.54 368.0,156.79 369.0,156.05 370.0,155.30 371.0,154.66 372.0,154.70 373.0,155.41 374.0,156.05 375.0,156.69 376.0,157.33 377.0,157.50 378.0,156.84 379.0,156.19 380.0,155.66 381.0,155.13 382.0,154.60 383.0,154.23 384.0,153.86 385.0,153.49 386.0,152.83 387.0,152.17 388.0,151.51 389.0,150.94 390.0,150.56 391.0,150.45 392.0,150.48 393.0,150.52 394.0,150.55 395.0,150.30 396.0,150.05 397.0,149.80 398.0,149.83 399.0,149.87 400.0,149.90 401.0,149.60 402.0,149.30 403.0,148.99 404.0,149.00 405.0,149.00 406.0,149.00 407.0,148.93 408.0,148.85 409.0,148.77 410.0,148.76 411.0,148.76 412.0,148.75 413.0,148.60 414.0,148.46 415.0,148.32 416.0,148.45 417.0,148.58 418.0,148.71 419.0,148.92 420.0,149.17 421.0,149.42 422.0,149.60 423.0,149.78 424.0,149.96 425.0,150.37 426.0,150.41 427.0,150.45 428.0,149.86 429.0,149.27 430.0,148.67 431.0,148.73 432.0,149.30 433.0,149.93 434.0,149.96 435.0,149.99 436.0,150.03 437.0,150.54 438.0,151.05 439.0,151.56 440.0,151.70 441.0,151.83 442.0,151.97 443.0,152.24 444.0,151.98 445.0,151.73 446.0,151.60 447.0,151.46 448.0,151.33 449.0,150.67 450.0,150.02 451.0,149.36 452.0,149.01 453.0,148.66 454.0,148.31 455.0,148.16 456.0,148.00 457.0,147.85 458.0,147.55 459.0,147.60 460.0,147.82 461.0,147.99 462.0,148.17 463.0,148.35 464.0,148.63 465.0,148.91 466.0,149.20 467.0,149.15 468.0,149.09 469.0,149.04 470.0,149.42 471.0,149.80 472.0,150.18 473.0,150.32 474.0,150.45 475.0,150.58 476.0,150.52 477.0,150.39 478.0,150.25 479.0,150.00 480.0,149.76 481.0,149.51 482.0,149.36 483.0,149.21 484.0,149.06 485.0,148.54 486.0,148.02 487.0,147.50 488.0,147.44 489.0,147.38 490.0,147.72 491.0,148.04 492.0,148.35 493.0,148.67 494.0,149.23 495.0,149.78 496.0,150.29 497.0,150.30 498.0,150.31 499.0,150.33 500.0,150.21 501.0,150.10 502.0,149.99 503.0,149.95 504.0,149.90 505.0,149.86 506.0,149.72 507.0,149.59 508.0,149.45 509.0,149.43 510.0,149.40 511.0,150.32 512.0,151.43 513.0,152.54 514.0,153.64 515.0,154.88 516.0,155.16 517.0,154.79 518.0,154.23 519.0,153.66 520.0,153.10 521.0,152.32 522.0,151.53 523.0,150.75 524.0,150.53 525.0,150.30 526.0,150.08 527.0,149.62 528.0,149.17 529.0,149.63 530.0,150.27 531.0,150.91 532.0,151.56 533.0,152.23 534.0,152.75 535.0,151.83 536.0,151.36 537.0,150.90 538.0,150.43 539.0,149.48 540.0,148.54 541.0,148.19 542.0,148.44 543.0,148.69 544.0,148.94 545.0,149.28 546.0,149.61 547.0,149.94 548.0,149.85 549.0,149.76 550.0,149.67 551.0,149.96 552.0,150.25 553.0,150.54 554.0,150.73 555.0,150.92 556.0,151.11 557.0,151.41 558.0,151.71 559.0,152.00 560.0,152.06 561.0,152.08 562.0,152.11 563.0,152.39 564.0,152.67 565.0,152.96 566.0,153.08 567.0,153.20 568.0,152.98 569.0,152.43 570.0,151.88 571.0,151.32 572.0,151.06 573.0,151.20 574.0,151.34 575.0,151.17 576.0,150.99 577.0,150.82 578.0,151.16 579.0,151.50 580.0,151.84 581.0,151.87 582.0,151.84 583.0,151.25 584.0,150.79 585.0,150.32 586.0,150.07 587.0,150.32 588.0,150.58 589.0,150.83 590.0,151.04 591.0,151.25 592.0,151.46 593.0,151.53 594.0,151.60 595.0,151.67 596.0,151.99 597.0,152.30 598.0,152.61 599.0,152.80 600.0,152.98 601.0,153.17 602.0,153.35 603.0,153.54 604.0,153.72 605.0,153.79 606.0,153.86 607.0,153.93 608.0,154.18 609.0,154.38 610.0,154.59 611.0,154.77 612.0,154.95 613.0,155.13 614.0,155.39 615.0,155.65 616.0,155.91 617.0,156.15 618.0,156.39 619.0,156.63 620.0,156.51 621.0,156.49 622.0,156.72 623.0,157.22 624.0,157.71 625.0,158.21 626.0,158.84 627.0,159.47 628.0,160.10 629.0,160.52 630.0,160.94 631.0,161.36 632.0,161.83 633.0,162.30 634.0,162.91 635.0,163.84 636.0,164.77 637.0,165.82 638.0,167.22 639.0,168.62 640.0,170.02 641.0,169.10 642.0,169.10 643.0,169.10 644.0,169.10 645.0,169.10 646.0,169.10 647.0,169.10 648.0,169.10 649.0,169.27 650.0,169.10 651.0,169.10 652.0,169.10 653.0,169.10 654.0,169.10 655.0,169.10 656.0,169.10 657.0,169.10 658.0,169.10 659.0,169.10 660.0,169.10 661.0,169.10 662.0,169.10 663.0,169.10 664.0,169.10 665.0,169.10 666.0,169.10 667.0,169.30 668.0,169.36 669.0,169.43 670.0,169.50 671.0,169.21 672.0,169.10 673.0,169.10 674.0,169.10 675.0,169.10 676.0,169.28 677.0,169.17 678.0,169.10 679.0,169.10 680.0,169.10 681.0,169.10 682.0,169.10 683.0,169.10 684.0,169.24 685.0,169.53 686.0,169.59 687.0,169.65 688.0,169.71 689.0,169.43 690.0,169.16 691.0,169.10 692.0,169.10 693.0,169.10 694.0,169.10 695.0,169.10 696.0,169.10 697.0,169.10 698.0,168.40 699.0,167.56 700.0,166.71 701.0,166.00 702.0,165.29 703.0,164.58 704.0,163.85 705.0,163.11 706.0,162.37 707.0,161.95 708.0,161.77 709.0,161.58 710.0,161.65 711.0,161.71 712.0,161.77 713.0,161.82 714.0,161.87 715.0,161.92 716.0,161.64 717.0,161.36 718.0,161.08 719.0,161.12 720.0,161.16 721.0,161.20 722.0,161.11 723.0,161.03 724.0,160.94 725.0,161.08 726.0,161.21 727.0,161.35 728.0,161.37 729.0,161.38 730.0,161.40 731.0,161.50 732.0,161.60 733.0,161.70 734.0,161.74 735.0,161.78 736.0,161.83 737.0,161.76 738.0,161.62 739.0,161.44 740.0,161.50 741.0,161.55 742.0,161.61 743.0,161.42 744.0,161.23 745.0,161.04 746.0,160.98 747.0,160.93 748.0,160.88 749.0,160.68 750.0,160.49 751.0,160.30 752.0,160.69 753.0,161.09 754.0,161.49 755.0,161.22 756.0,160.96 757.0,160.69 758.0,160.80 759.0,160.92 760.0,161.03 761.0,161.02 762.0,161.01 763.0,161.00 764.0,161.17 765.0,161.34 766.0,161.51 767.0,161.39 768.0,161.28 769.0,161.16 770.0,161.02 771.0,160.88 772.0,160.74 773.0,160.84 774.0,160.93 775.0,161.03 776.0,161.01 777.0,160.99 778.0,160.97 779.0,161.02 780.0,161.06 781.0,161.10 782.0,160.93 783.0,160.76 784.0,160.60 785.0,160.73 786.0,160.87 787.0,161.01 788.0,161.26 789.0,161.52 790.0,161.77 791.0,161.59 792.0,161.42 793.0,161.24 794.0,161.39 795.0,161.54 796.0,161.69 797.0,161.84 798.0,161.99 799.0,162.14 800.0,161.82 801.0,161.50 802.0,161.19 803.0,160.97 804.0,160.75 805.0,160.53 805.0,169.4" fill="#2DCB4A" />
<polygon points="49.0,169.4 49.0,169.10 50.0,167.30 51.0,165.47 52.0,163.80 53.0,163.92 54.0,164.03 55.0,164.14 56.0,164.16 57.0,164.17 58.0,163.52 59.0,162.88 60.0,162.23 61.0,161.59 62.0,160.92 63.0,160.25 64.0,159.58 65.0,158.93 66.0,159.13 67.0,159.32 68.0,159.64 69.0,159.96 70.0,160.28 71.0,160.61 72.0,160.94 73.0,161.26 74.0,161.68 75.0,161.94 76.0,162.20 77.0,162.13 78.0,162.06 79.0,161.99 80.0,162.24 81.0,162.49 82.0,162.74 83.0,162.64 84.0,162.55 85.0,162.45 86.0,162.58 87.0,162.32 88.0,162.05 89.0,161.38 90.0,160.71 91.0,160.14 92.0,160.11 93.0,160.07 94.0,160.04 95.0,160.17 96.0,160.30 97.0,160.44 98.0,160.06 99.0,159.68 100.0,159.31 101.0,159.32 102.0,159.33 103.0,159.34 104.0,159.54 105.0,159.75 106.0,159.95 107.0,159.78 108.0,159.62 109.0,159.45 110.0,159.48 111.0,159.84 112.0,160.29 113.0,161.04 114.0,161.79 115.0,162.53 116.0,162.60 117.0,162.40 118.0,161.56 119.0,161.10 120.0,160.64 121.0,160.17 122.0,159.72 123.0,159.91 124.0,160.09 125.0,160.43 126.0,160.77 127.0,161.10 128.0,161.21 129.0,161.32 130.0,161.42 131.0,161.61 132.0,161.80 133.0,161.99 134.0,162.04 135.0,162.08 136.0,162.12 137.0,162.42 138.0,162.72 139.0,163.02 140.0,163.26 141.0,163.50 142.0,163.47 143.0,163.11 144.0,162.75 145.0,162.39 146.0,162.45 147.0,162.51 148.0,162.58 149.0,162.37 150.0,162.17 151.0,161.97 152.0,161.96 153.0,161.94 154.0,161.93 155.0,161.35 156.0,160.82 157.0,160.35 158.0,160.35 159.0,160.35 160.0,160.35 161.0,160.28 162.0,160.21 163.0,160.15 164.0,160.10 165.0,160.06 166.0,160.02 167.0,160.01 168.0,160.01 169.0,160.00 170.0,159.91 171.0,159.83 172.0,159.75 173.0,159.73 174.0,159.61 175.0,159.25 176.0,158.82 177.0,158.40 178.0,157.98 179.0,157.77 180.0,157.78 181.0,157.80 182.0,157.68 183.0,157.56 184.0,157.44 185.0,157.60 186.0,157.76 187.0,157.92 188.0,158.04 189.0,158.16 190.0,158.28 191.0,158.39 192.0,158.50 193.0,158.59 194.0,158.54 195.0,158.48 196.0,158.43 197.0,158.11 198.0,157.79 199.0,157.46 200.0,157.53 201.0,157.60 202.0,157.67 203.0,157.66 204.0,157.65 205.0,157.74 206.0,157.88 207.0,158.03 208.0,158.18 209.0,158.37 210.0,158.56 211.0,158.75 212.0,158.73 213.0,158.70 214.0,158.68 215.0,158.67 216.0,158.66 217.0,158.65 218.0,159.03 219.0,159.48 220.0,159.94 221.0,160.23 222.0,160.51 223.0,160.80 224.0,161.11 225.0,161.42 226.0,161.72 227.0,161.99 228.0,162.26 229.0,162.53 230.0,163.04 231.0,163.54 232.0,164.05 233.0,164.20 234.0,164.35 235.0,164.22 236.0,164.20 237.0,164.18 238.0,164.16 239.0,163.87 240.0,163.57 241.0,163.28 242.0,163.38 243.0,163.48 244.0,163.58 245.0,163.33 246.0,163.08 247.0,162.84 248.0,162.63 249.0,162.34 250.0,161.96 251.0,161.90 252.0,161.84 253.0,161.78 254.0,161.54 255.0,161.30 256.0,161.07 257.0,160.70 258.0,160.33 259.0,159.97 260.0,159.72 261.0,159.47 262.0,159.22 263.0,159.15 264.0,159.46 265.0,159.77 266.0,159.79 267.0,159.82 268.0,159.84 269.0,159.85 270.0,159.86 271.0,159.87 272.0,160.33 273.0,160.79 274.0,161.07 275.0,161.04 276.0,161.00 277.0,160.97 278.0,160.95 279.0,160.92 280.0,160.90 281.0,160.61 282.0,160.33 283.0,160.05 284.0,160.11 285.0,160.17 286.0,160.23 287.0,160.09 288.0,159.95 289.0,159.81 290.0,159.41 291.0,159.00 292.0,158.60 293.0,158.79 294.0,159.00 295.0,159.22 296.0,158.95 297.0,158.69 298.0,158.42 299.0,158.33 300.0,158.24 301.0,158.16 302.0,158.27 303.0,158.38 304.0,158.49 305.0,158.42 306.0,158.35 307.0,158.28 308.0,158.08 309.0,157.88 310.0,157.75 311.0,158.04 312.0,158.33 313.0,158.62 314.0,158.70 315.0,158.79 316.0,158.87 317.0,159.00 318.0,159.13 319.0,159.25 320.0,159.13 321.0,159.00 322.0,158.88 323.0,158.75 324.0,158.62 325.0,158.44 326.0,158.30 327.0,158.16 328.0,158.02 329.0,158.05 330.0,158.07 331.0,158.09 332.0,157.88 333.0,157.67 334.0,157.46 335.0,157.22 336.0,156.98 337.0,156.74 338.0,156.56 339.0,156.87 340.0,157.18 341.0,157.65 342.0,158.11 343.0,158.57 344.0,158.92 345.0,159.28 346.0,159.63 347.0,160.02 348.0,160.42 349.0,160.81 350.0,161.28 351.0,161.64 352.0,161.70 353.0,161.67 354.0,161.64 355.0,161.61 356.0,161.59 357.0,161.56 358.0,161.53 359.0,161.56 360.0,161.60 361.0,161.63 362.0,161.56 363.0,161.49 364.0,161.42 365.0,161.26 366.0,161.10 367.0,160.95 368.0,161.09 369.0,161.24 370.0,161.39 371.0,161.46 372.0,161.52 373.0,161.58 374.0,161.78 375.0,161.99 376.0,162.19 377.0,161.86 378.0,161.31 379.0,160.77 380.0,160.74 381.0,160.71 382.0,160.68 383.0,160.31 384.0,159.95 385.0,159.58 386.0,159.02 387.0,158.45 388.0,157.88 389.0,157.60 390.0,157.40 391.0,157.35 392.0,157.37 393.0,157.39 394.0,157.41 395.0,157.52 396.0,157.62 397.0,157.73 398.0,157.50 399.0,157.26 400.0,157.03 401.0,157.25 402.0,157.48 403.0,157.70 404.0,157.74 405.0,157.78 406.0,157.81 407.0,157.81 408.0,157.81 409.0,157.81 410.0,158.24 411.0,158.66 412.0,159.09 413.0,159.40 414.0,159.70 415.0,160.01 416.0,160.24 417.0,160.48 418.0,160.71 419.0,160.58 420.0,160.45 421.0,160.32 422.0,160.33 423.0,160.35 424.0,160.36 425.0,160.48 426.0,160.59 427.0,160.70 428.0,160.56 429.0,160.41 430.0,160.26 431.0,160.41 432.0,160.15 433.0,159.89 434.0,159.22 435.0,158.55 436.0,157.89 437.0,157.49 438.0,157.09 439.0,156.76 440.0,157.09 441.0,157.42 442.0,157.75 443.0,158.15 444.0,158.04 445.0,157.94 446.0,157.54 447.0,157.14 448.0,156.73 449.0,156.52 450.0,156.31 451.0,156.10 452.0,155.89 453.0,156.01 454.0,156.13 455.0,156.21 456.0,156.30 457.0,156.39 458.0,156.59 459.0,156.79 460.0,157.00 461.0,157.11 462.0,157.22 463.0,157.32 464.0,157.15 465.0,156.99 466.0,156.82 467.0,157.02 468.0,157.23 469.0,157.44 470.0,157.48 471.0,157.52 472.0,157.57 473.0,157.44 474.0,157.13 475.0,156.82 476.0,156.91 477.0,157.01 478.0,157.11 479.0,156.77 480.0,156.44 481.0,156.11 482.0,155.77 483.0,155.44 484.0,155.11 485.0,154.98 486.0,154.90 487.0,154.83 488.0,154.87 489.0,154.91 490.0,154.95 491.0,154.73 492.0,154.52 493.0,154.31 494.0,154.35 495.0,154.40 496.0,154.44 497.0,154.56 498.0,154.68 499.0,154.79 500.0,154.71 501.0,154.63 502.0,154.55 503.0,154.50 504.0,154.60 505.0,154.70 506.0,155.03 507.0,155.37 508.0,155.71 509.0,156.29 510.0,156.86 511.0,157.44 512.0,157.36 513.0,157.28 514.0,157.20 515.0,157.07 516.0,156.89 517.0,156.71 518.0,156.36 519.0,156.00 520.0,155.65 521.0,155.58 522.0,155.52 523.0,155.45 524.0,155.17 525.0,154.89 526.0,154.62 527.0,154.45 528.0,154.27 529.0,154.10 530.0,153.41 531.0,152.79 532.0,152.82 533.0,153.60 534.0,154.38 535.0,155.16 536.0,155.42 537.0,155.68 538.0,155.89 539.0,156.41 540.0,156.92 541.0,157.43 542.0,157.58 543.0,157.74 544.0,157.50 545.0,157.56 546.0,157.63 547.0,157.70 548.0,157.40 549.0,157.10 550.0,156.80 551.0,156.50 552.0,156.19 553.0,155.88 554.0,156.00 555.0,156.11 556.0,156.23 557.0,155.86 558.0,155.49 559.0,155.11 560.0,155.10 561.0,155.09 562.0,155.07 563.0,155.13 564.0,155.19 565.0,155.26 566.0,155.09 567.0,154.93 568.0,154.77 569.0,154.70 570.0,154.95 571.0,155.20 572.0,155.40 573.0,155.61 574.0,155.82 575.0,155.49 576.0,155.16 577.0,154.83 578.0,154.48 579.0,154.13 580.0,153.78 581.0,153.34 582.0,152.89 583.0,152.45 584.0,152.14 585.0,151.84 586.0,151.73 587.0,151.99 588.0,152.25 589.0,152.51 590.0,152.60 591.0,152.65 592.0,152.42 593.0,152.21 594.0,152.01 595.0,151.81 596.0,152.00 597.0,152.30 598.0,152.62 599.0,152.80 600.0,152.98 601.0,153.17 602.0,153.39 603.0,153.77 604.0,154.16 605.0,154.50 606.0,154.85 607.0,155.20 608.0,155.26 609.0,155.20 610.0,155.14 611.0,155.46 612.0,155.77 613.0,156.09 614.0,156.01 615.0,155.93 616.0,155.91 617.0,156.27 618.0,156.69 619.0,157.11 620.0,157.13 621.0,157.26 622.0,157.67 623.0,158.29 624.0,158.91 625.0,159.53 626.0,160.14 627.0,160.74 628.0,161.35 629.0,161.74 630.0,162.13 631.0,162.52 632.0,163.15 633.0,163.79 634.0,164.47 635.0,165.09 636.0,165.71 637.0,166.32 638.0,167.22 639.0,168.62 640.0,170.02 641.0,169.10 642.0,169.10 643.0,169.10 644.0,169.10 645.0,169.10 646.0,169.10 647.0,169.10 648.0,169.10 649.0,169.27 650.0,169.10 651.0,169.10 652.0,169.10 653.0,169.10 654.0,169.10 655.0,169.10 656.0,169.10 657.0,169.10 658.0,169.10 659.0,169.10 660.0,169.10 661.0,169.10 662.0,169.10 663.0,169.10 664.0,169.10 665.0,169.10 666.0,169.10 667.0,169.30 668.0,169.36 669.0,169.43 670.0,169.50 671.0,169.21 672.0,169.10 673.0,169.10 674.0,169.10 675.0,169.10 676.0,169.28 677.0,169.17 678.0,169.10 679.0,169.10 680.0,169.10 681.0,169.10 682.0,169.10 683.0,169.10 684.0,169.24 685.0,169.53 686.0,169.59 687.0,169.65 688.0,169.71 689.0,169.43 690.0,169.16 691.0,169.10 692.0,169.10 693.0,169.10 694.0,169.10 695.0,169.10 696.0,169.10 697.0,169.10 698.0,168.61 699.0,167.84 700.0,167.07 701.0,166.61 702.0,166.15 703.0,165.70 704.0,164.94 705.0,164.19 706.0,163.92 707.0,163.96 708.0,164.00 709.0,164.04 710.0,163.94 711.0,163.85 712.0,163.75 713.0,163.70 714.0,163.64 715.0,163.59 716.0,163.17 717.0,162.84 718.0,162.51 719.0,162.87 720.0,163.22 721.0,163.58 722.0,163.61 723.0,163.65 724.0,163.68 725.0,163.81 726.0,163.95 727.0,164.08 728.0,164.16 729.0,164.40 730.0,164.70 731.0,165.05 732.0,165.39 733.0,165.73 734.0,165.84 735.0,165.96 736.0,166.07 737.0,166.74 738.0,166.79 739.0,166.41 740.0,165.76 741.0,165.10 742.0,164.44 743.0,163.66 744.0,162.88 745.0,162.10 746.0,162.11 747.0,162.29 748.0,162.47 749.0,162.37 750.0,162.27 751.0,162.17 752.0,162.30 753.0,162.44 754.0,162.57 755.0,162.78 756.0,162.92 757.0,163.07 758.0,163.06 759.0,163.04 760.0,163.03 761.0,162.96 762.0,163.17 763.0,163.37 764.0,163.49 765.0,163.61 766.0,163.73 767.0,164.54 768.0,164.95 769.0,165.27 770.0,164.70 771.0,164.13 772.0,163.57 773.0,163.58 774.0,163.59 775.0,163.60 776.0,163.17 777.0,162.75 778.0,162.33 779.0,162.40 780.0,162.47 781.0,162.65 782.0,162.53 783.0,162.41 784.0,162.29 785.0,162.41 786.0,162.52 787.0,162.64 788.0,162.55 789.0,162.46 790.0,162.37 791.0,162.06 792.0,161.76 793.0,161.45 794.0,161.49 795.0,161.54 796.0,161.69 797.0,161.84 798.0,161.99 799.0,162.14 800.0,161.94 801.0,161.96 802.0,161.99 803.0,162.08 804.0,162.17 805.0,162.26 805.0,169.4" fill="#BE1F79" />
<polygon points="805.0,169.4 805.0,159.50 806.0,159.19 807.0,158.87 808.0,158.56 809.0,158.24 810.0,157.93 811.0,157.80 812.0,157.80 813.0,157.80 814.0,157.80 815.0,157.80 816.0,157.80 817.0,157.80 818.0,157.80 819.0,157.80 820.0,157.80 821.0,157.80 822.0,157.80 823.0,157.80 824.0,157.73 825.0,157.63 826.0,157.52 827.0,157.42 828.0,157.32 829.0,157.22 830.0,157.11 831.0,157.01 832.0,156.91 833.0,156.81 834.0,156.70 835.0,156.60 836.0,156.50 837.0,156.39 838.0,156.29 839.0,156.19 840.0,156.09 841.0,155.98 842.0,155.88 843.0,155.74 844.0,155.46 845.0,155.17 846.0,154.89 847.0,154.60 848.0,154.31 849.0,154.03 850.0,153.74 851.0,153.46 852.0,153.18 853.0,152.97 854.0,152.77 855.0,152.56 856.0,152.35 857.0,152.15 858.0,151.94 859.0,151.73 860.0,151.53 861.0,151.32 862.0,151.11 863.0,150.91 864.0,150.70 865.0,150.50 866.0,150.29 867.0,150.08 868.0,150.00 869.0,150.00 870.0,150.00 871.0,150.00 872.0,150.00 873.0,150.00 874.0,150.00 875.0,150.00 876.0,150.00 877.0,150.00 878.0,150.00 879.0,150.00 880.0,150.00 881.0,150.00 882.0,150.00 883.0,150.00 884.0,150.00 885.0,150.00 886.0,150.00 887.0,150.00 888.0,150.00 889.0,150.00 890.0,150.00 891.0,150.00 892.0,150.00 893.0,150.00 894.0,150.00 895.0,150.00 896.0,150.00 897.0,150.00 898.0,150.00 899.0,150.00 900.0,150.00 901.0,150.00 902.0,150.00 903.0,150.00 904.0,150.00 905.0,150.00 906.0,150.00 907.0,150.00 908.0,150.00 909.0,150.00 910.0,150.00 911.0,150.00 912.0,150.00 913.0,150.00 914.0,150.00 915.0,150.00 916.0,150.00 917.0,150.00 918.0,150.00 919.0,150.00 920.0,150.00 921.0,150.00 922.0,150.00 923.0,150.00 924.0,150.00 925.0,150.00 926.0,150.00 927.0,150.00 928.0,150.00 929.0,150.00 930.0,150.00 931.0,150.00 932.0,150.00 933.0,150.00 934.0,150.00 935.0,150.00 936.0,150.00 937.0,150.00 938.0,150.00 939.0,150.00 940.0,150.00 941.0,150.00 942.0,150.00 943.0,150.00 944.0,150.00 945.0,150.00 946.0,150.00 947.0,150.00 948.0,150.00 949.0,150.00 950.0,150.00 951.0,150.00 952.0,150.00 953.0,150.00 954.0,150.00 955.0,150.00 956.0,150.00 957.0,150.00 958.0,150.00 959.0,150.00 960.0,150.00 961.0,150.00 962.0,150.00 963.0,150.00 964.0,150.00 965.0,150.00 966.0,150.00 967.0,150.00 968.0,150.00 969.0,150.00 970.0,150.00 971.0,150.00 972.0,150.00 973.0,150.00 974.0,150.00 975.0,150.00 976.0,150.00 977.0,150.00 978.0,150.00 979.0,150.00 980.0,150.00 981.0,150.00 982.0,150.00 983.0,150.00 984.0,150.00 985.0,150.00 986.0,150.00 987.0,150.00 988.0,150.00 989.0,150.00 990.0,150.00 991.0,150.00 992.0,150.00 993.0,150.00 994.0,150.00 995.0,150.00 996.0,150.00 997.0,150.00 998.0,150.00 999.0,150.00 1000.0,150.00 1001.0,150.00 1002.0,150.00 1003.0,150.00 1004.0,150.00 1005.0,150.00 1006.0,150.00 1007.0,150.00 1008.0,150.00 1009.0,150.00 1010.0,150.00 1011.0,150.00 1012.0,150.00 1013.0,150.00 1014.0,150.04 1015.0,150.08 1016.0,150.13 1017.0,150.17 1018.0,150.21 1019.0,150.25 1020.0,150.30 1021.0,150.34 1022.0,150.38 1023.0,150.42 1024.0,150.46 1025.0,150.51 1026.0,150.55 1027.0,150.59 1028.0,150.67 1029.0,150.75 1030.0,150.84 1031.0,150.92 1032.0,151.01 1033.0,151.09 1034.0,151.18 1035.0,151.26 1036.0,151.34 1037.0,151.43 1038.0,151.51 1039.0,151.60 1040.0,151.68 1041.0,151.87 1042.0,152.08 1043.0,152.29 1044.0,152.50 1045.0,152.72 1046.0,152.93 1047.0,153.14 1048.0,153.35 1049.0,153.56 1050.0,153.77 1051.0,154.21 1052.0,154.97 1053.0,155.74 1054.0,156.50 1055.0,157.26 1056.0,157.94 1057.0,158.40 1057.0,169.4" fill="#8E95E4" />
<polygon points="805.0,169.4 805.0,160.03 806.0,159.99 807.0,159.96 808.0,160.08 809.0,160.20 810.0,160.00 811.0,159.81 812.0,159.77 813.0,159.73 814.0,159.50 815.0,159.27 816.0,159.14 817.0,159.02 818.0,159.29 819.0,159.55 820.0,159.77 821.0,160.09 822.0,160.22 823.0,160.34 824.0,160.65 825.0,160.96 826.0,161.20 827.0,161.08 828.0,160.83 829.0,160.58 830.0,160.58 831.0,160.58 832.0,160.18 833.0,159.79 834.0,159.75 835.0,159.71 836.0,159.51 837.0,159.30 838.0,159.22 839.0,159.13 840.0,158.96 841.0,158.79 842.0,158.58 843.0,158.36 844.0,158.00 845.0,157.65 846.0,157.44 847.0,157.24 848.0,156.87 849.0,156.50 850.0,156.61 851.0,156.85 852.0,157.25 853.0,157.66 854.0,157.65 855.0,157.64 856.0,157.92 857.0,157.88 858.0,157.52 859.0,157.16 860.0,156.86 861.0,156.56 862.0,156.58 863.0,156.60 864.0,156.02 865.0,155.45 866.0,155.19 867.0,155.33 868.0,155.58 869.0,155.83 870.0,156.07 871.0,156.31 872.0,156.50 873.0,156.57 874.0,156.55 875.0,156.53 876.0,156.31 877.0,156.09 878.0,156.02 879.0,155.95 880.0,155.75 881.0,155.54 882.0,155.62 883.0,155.71 884.0,155.38 885.0,155.34 886.0,155.65 887.0,155.96 888.0,156.30 889.0,156.64 890.0,156.98 891.0,157.20 892.0,156.96 893.0,156.72 894.0,156.96 895.0,157.20 896.0,156.79 897.0,156.38 898.0,156.47 899.0,156.61 900.0,156.70 901.0,156.79 902.0,156.88 903.0,156.97 904.0,157.22 905.0,157.48 906.0,157.52 907.0,157.56 908.0,157.52 909.0,157.49 910.0,157.62 911.0,157.97 912.0,158.38 913.0,158.79 914.0,159.42 915.0,160.05 916.0,160.12 917.0,160.19 918.0,160.47 919.0,160.75 920.0,161.15 921.0,160.95 922.0,159.94 923.0,158.93 924.0,158.07 925.0,157.22 926.0,155.72 927.0,154.22 928.0,154.28 929.0,154.35 930.0,154.61 931.0,154.87 932.0,154.34 933.0,153.80 934.0,153.99 935.0,154.17 936.0,154.05 937.0,153.92 938.0,153.72 939.0,153.53 940.0,153.14 941.0,152.82 942.0,153.06 943.0,153.31 944.0,153.21 945.0,153.12 946.0,152.90 947.0,152.68 948.0,152.70 949.0,152.72 950.0,152.98 951.0,153.23 952.0,153.25 953.0,153.27 954.0,153.43 955.0,153.58 956.0,153.50 957.0,153.51 958.0,153.43 959.0,153.35 960.0,153.44 961.0,153.54 962.0,153.67 963.0,153.80 964.0,153.64 965.0,153.18 966.0,153.11 967.0,153.05 968.0,152.62 969.0,152.26 970.0,152.58 971.0,152.90 972.0,153.35 973.0,153.75 974.0,153.83 975.0,153.90 976.0,154.15 977.0,154.40 978.0,154.65 979.0,154.91 980.0,154.95 981.0,155.00 982.0,155.35 983.0,155.70 984.0,155.95 985.0,156.19 986.0,155.79 987.0,154.91 988.0,154.45 989.0,153.99 990.0,153.38 991.0,152.77 992.0,152.52 993.0,152.80 994.0,152.71 995.0,152.61 996.0,152.76 997.0,152.90 998.0,153.05 999.0,153.20 1000.0,153.52 1001.0,153.84 1002.0,153.66 1003.0,153.48 1004.0,153.40 1005.0,153.33 1006.0,153.51 1007.0,153.70 1008.0,154.03 1009.0,154.68 1010.0,155.09 1011.0,155.50 1012.0,155.89 1013.0,156.27 1014.0,156.98 1015.0,157.69 1016.0,157.48 1017.0,157.27 1018.0,157.35 1019.0,157.44 1020.0,157.60 1021.0,157.76 1022.0,157.79 1023.0,157.82 1024.0,158.09 1025.0,158.36 1026.0,158.66 1027.0,158.97 1028.0,158.72 1029.0,158.36 1030.0,157.92 1031.0,157.49 1032.0,157.32 1033.0,157.16 1034.0,156.72 1035.0,156.28 1036.0,155.78 1037.0,155.51 1038.0,155.34 1039.0,155.16 1040.0,155.46 1041.0,155.76 1042.0,155.72 1043.0,155.69 1044.0,155.63 1045.0,155.57 1046.0,155.38 1047.0,155.28 1048.0,155.78 1049.0,156.27 1050.0,156.34 1051.0,156.40 1052.0,157.06 1053.0,157.71 1054.0,157.88 1055.0,158.05 1056.0,158.30 1057.0,158.46 1057.0,169.4" fill="#82D99B" />
<polygon points="805.0,169.4 805.0,162.45 806.0,162.34 807.0,162.23 808.0,162.02 809.0,161.82 810.0,161.94 811.0,162.07 812.0,162.18 813.0,162.29 814.0,161.89 815.0,161.48 816.0,161.54 817.0,161.60 818.0,161.58 819.0,161.56 820.0,161.80 821.0,162.12 822.0,162.07 823.0,162.02 824.0,162.39 825.0,162.76 826.0,162.73 827.0,162.71 828.0,163.18 829.0,163.50 830.0,163.33 831.0,163.17 832.0,162.86 833.0,162.55 834.0,162.53 835.0,162.51 836.0,162.15 837.0,161.79 838.0,161.70 839.0,161.61 840.0,161.62 841.0,161.63 842.0,161.32 843.0,161.01 844.0,160.91 845.0,160.81 846.0,160.45 847.0,160.10 848.0,160.17 849.0,160.24 850.0,160.29 851.0,160.45 852.0,160.39 853.0,160.34 854.0,160.37 855.0,160.41 856.0,160.63 857.0,160.85 858.0,161.33 859.0,161.50 860.0,161.22 861.0,160.94 862.0,160.49 863.0,160.03 864.0,160.03 865.0,160.02 866.0,159.89 867.0,160.34 868.0,160.56 869.0,160.78 870.0,161.11 871.0,161.45 872.0,161.67 873.0,161.73 874.0,161.72 875.0,161.71 876.0,161.55 877.0,161.39 878.0,160.94 879.0,160.49 880.0,160.58 881.0,160.66 882.0,160.44 883.0,160.21 884.0,160.03 885.0,159.96 886.0,159.94 887.0,159.92 888.0,160.10 889.0,160.28 890.0,160.20 891.0,160.11 892.0,160.36 893.0,160.60 894.0,160.56 895.0,160.52 896.0,160.66 897.0,160.80 898.0,160.51 899.0,160.23 900.0,160.44 901.0,160.65 902.0,160.80 903.0,160.94 904.0,160.92 905.0,160.90 906.0,160.92 907.0,160.94 908.0,160.84 909.0,160.74 910.0,161.13 911.0,161.63 912.0,161.74 913.0,161.85 914.0,161.94 915.0,162.04 916.0,161.79 917.0,161.55 918.0,161.98 919.0,162.41 920.0,162.76 921.0,162.73 922.0,161.86 923.0,160.99 924.0,160.03 925.0,159.08 926.0,158.68 927.0,158.27 928.0,158.48 929.0,158.69 930.0,158.65 931.0,158.61 932.0,158.91 933.0,159.21 934.0,159.37 935.0,159.47 936.0,159.49 937.0,159.50 938.0,158.98 939.0,158.46 940.0,158.33 941.0,158.20 942.0,158.22 943.0,158.23 944.0,158.16 945.0,158.09 946.0,158.45 947.0,158.81 948.0,158.36 949.0,157.91 950.0,157.98 951.0,158.06 952.0,157.91 953.0,157.77 954.0,157.68 955.0,157.59 956.0,157.70 957.0,157.80 958.0,157.95 959.0,158.10 960.0,157.75 961.0,157.39 962.0,157.50 963.0,157.62 964.0,157.51 965.0,157.39 966.0,157.39 967.0,157.38 968.0,157.29 969.0,157.21 970.0,157.58 971.0,157.96 972.0,157.50 973.0,157.05 974.0,157.27 975.0,157.50 976.0,157.44 977.0,157.39 978.0,157.34 979.0,157.29 980.0,157.66 981.0,158.03 982.0,158.38 983.0,158.73 984.0,158.67 985.0,158.61 986.0,158.63 987.0,158.38 988.0,157.98 989.0,157.59 990.0,157.21 991.0,156.83 992.0,156.85 993.0,157.13 994.0,156.82 995.0,156.50 996.0,156.82 997.0,157.14 998.0,156.91 999.0,156.67 1000.0,156.77 1001.0,156.87 1002.0,156.94 1003.0,157.01 1004.0,157.01 1005.0,157.01 1006.0,157.12 1007.0,157.23 1008.0,157.30 1009.0,157.44 1010.0,157.74 1011.0,158.03 1012.0,157.92 1013.0,157.81 1014.0,157.66 1015.0,157.69 1016.0,157.63 1017.0,157.74 1018.0,157.97 1019.0,158.20 1020.0,158.43 1021.0,158.66 1022.0,159.00 1023.0,159.34 1024.0,159.16 1025.0,158.97 1026.0,159.33 1027.0,159.69 1028.0,159.38 1029.0,158.95 1030.0,158.55 1031.0,158.16 1032.0,157.67 1033.0,157.19 1034.0,156.84 1035.0,156.49 1036.0,156.01 1037.0,155.87 1038.0,156.09 1039.0,156.31 1040.0,156.27 1041.0,156.23 1042.0,155.90 1043.0,155.69 1044.0,155.99 1045.0,156.41 1046.0,156.50 1047.0,156.66 1048.0,156.83 1049.0,157.00 1050.0,157.27 1051.0,157.53 1052.0,158.09 1053.0,158.65 1054.0,158.81 1055.0,158.96 1056.0,159.06 1057.0,159.12 1057.0,169.4" fill="#C78BBD" />
<path d="M805.5,172.4 V133.2 H1056.5 V172.4" stroke="#8A8A8A" stroke-width="1.2" fill="none"/>
</svg>
<div class="panel"></div>
<div class="t" style="left:19.4px;top:185.8px;font-size:8.2px;color:#222;-webkit-text-stroke:0.12px #222">Wait events &amp; CPU Usage</div>
<div class="t" style="left:195.8px;top:185.8px;font-size:8.45px;color:#222;-webkit-text-stroke:0.12px #222">Number of active sessions</div>
<svg class="abs" style="left:0;top:0;font-family:"Liberation Sans", sans-serif" width="1080" height="295">
<path d="M101.44,202.40 A38.7,38.7 0 1 1 85.90,276.78 L93.07,259.72 A20.2,20.2 0 1 0 101.18,220.90 Z" fill="#BE1F79" stroke="#fff" stroke-width="0.9"/>
<path d="M85.90,276.78 A38.7,38.7 0 0 1 62.24,239.41 L80.72,240.22 A20.2,20.2 0 0 0 93.07,259.72 Z" fill="#2DCB4A" stroke="#fff" stroke-width="0.9"/>
<path d="M62.24,239.41 A38.7,38.7 0 0 1 97.26,202.57 L99.00,220.99 A20.2,20.2 0 0 0 80.72,240.22 Z" fill="#4343DA" stroke="#fff" stroke-width="0.9"/>
<path d="M97.39,202.56 A38.7,38.7 0 0 1 100.36,202.40 L100.62,220.90 A20.2,20.2 0 0 0 99.07,220.98 Z" fill="#222" stroke="#fff" stroke-width="0.9"/>
<line x1="225" y1="258.70" x2="1054" y2="258.70" stroke="#DADDE2" stroke-width="0.8"/>
<text x="223" y="261.30" text-anchor="end" font-size="7.3" fill="#666">0</text>
<line x1="225" y1="252.54" x2="1054" y2="252.54" stroke="#DADDE2" stroke-width="0.8"/>
<text x="223" y="255.14" text-anchor="end" font-size="7.3" fill="#666">5</text>
<line x1="225" y1="246.38" x2="1054" y2="246.38" stroke="#DADDE2" stroke-width="0.8"/>
<text x="223" y="248.98" text-anchor="end" font-size="7.3" fill="#666">10</text>
<line x1="225" y1="240.22" x2="1054" y2="240.22" stroke="#DADDE2" stroke-width="0.8"/>
<text x="223" y="242.82" text-anchor="end" font-size="7.3" fill="#666">15</text>
<line x1="225" y1="234.06" x2="1054" y2="234.06" stroke="#DADDE2" stroke-width="0.8"/>
<text x="223" y="236.66" text-anchor="end" font-size="7.3" fill="#666">20</text>
<line x1="225" y1="227.90" x2="1054" y2="227.90" stroke="#DADDE2" stroke-width="0.8"/>
<text x="223" y="230.50" text-anchor="end" font-size="7.3" fill="#666">25</text>
<line x1="225" y1="221.74" x2="1054" y2="221.74" stroke="#DADDE2" stroke-width="0.8"/>
<text x="223" y="224.34" text-anchor="end" font-size="7.3" fill="#666">30</text>
<line x1="225" y1="215.58" x2="1054" y2="215.58" stroke="#DADDE2" stroke-width="0.8"/>
<text x="223" y="218.18" text-anchor="end" font-size="7.3" fill="#666">35</text>
<line x1="225" y1="209.42" x2="1054" y2="209.42" stroke="#DADDE2" stroke-width="0.8"/>
<text x="223" y="212.02" text-anchor="end" font-size="7.3" fill="#666">40</text>
<line x1="228.80" y1="206" x2="228.80" y2="265.3" stroke="#DADDE2" stroke-width="0.8"/>
<text x="231.40" y="270.2" transform="rotate(-45 231.40 270.2)" text-anchor="end" font-size="6.9" fill="#666">19:38:16</text>
<line x1="248.05" y1="206" x2="248.05" y2="265.3" stroke="#DADDE2" stroke-width="0.8"/>
<text x="250.65" y="270.2" transform="rotate(-45 250.65 270.2)" text-anchor="end" font-size="6.9" fill="#666">19:38:37</text>
<line x1="267.30" y1="206" x2="267.30" y2="265.3" stroke="#DADDE2" stroke-width="0.8"/>
<text x="269.90" y="270.2" transform="rotate(-45 269.90 270.2)" text-anchor="end" font-size="6.9" fill="#666">19:38:58</text>
<line x1="286.55" y1="206" x2="286.55" y2="265.3" stroke="#DADDE2" stroke-width="0.8"/>
<text x="289.15" y="270.2" transform="rotate(-45 289.15 270.2)" text-anchor="end" font-size="6.9" fill="#666">19:39:19</text>
<line x1="305.80" y1="206" x2="305.80" y2="265.3" stroke="#DADDE2" stroke-width="0.8"/>
<text x="308.40" y="270.2" transform="rotate(-45 308.40 270.2)" text-anchor="end" font-size="6.9" fill="#666">19:39:40</text>
<line x1="325.05" y1="206" x2="325.05" y2="265.3" stroke="#DADDE2" stroke-width="0.8"/>
<text x="327.65" y="270.2" transform="rotate(-45 327.65 270.2)" text-anchor="end" font-size="6.9" fill="#666">19:40:01</text>
<line x1="344.30" y1="206" x2="344.30" y2="265.3" stroke="#DADDE2" stroke-width="0.8"/>
<text x="346.90" y="270.2" transform="rotate(-45 346.90 270.2)" text-anchor="end" font-size="6.9" fill="#666">19:40:22</text>
<line x1="363.55" y1="206" x2="363.55" y2="265.3" stroke="#DADDE2" stroke-width="0.8"/>
<text x="366.15" y="270.2" transform="rotate(-45 366.15 270.2)" text-anchor="end" font-size="6.9" fill="#666">19:40:43</text>
<line x1="382.80" y1="206" x2="382.80" y2="265.3" stroke="#DADDE2" stroke-width="0.8"/>
<text x="385.40" y="270.2" transform="rotate(-45 385.40 270.2)" text-anchor="end" font-size="6.9" fill="#666">19:41:04</text>
<line x1="402.05" y1="206" x2="402.05" y2="265.3" stroke="#DADDE2" stroke-width="0.8"/>
<text x="404.65" y="270.2" transform="rotate(-45 404.65 270.2)" text-anchor="end" font-size="6.9" fill="#666">19:41:25</text>
<line x1="421.30" y1="206" x2="421.30" y2="265.3" stroke="#DADDE2" stroke-width="0.8"/>
<text x="423.90" y="270.2" transform="rotate(-45 423.90 270.2)" text-anchor="end" font-size="6.9" fill="#666">19:41:46</text>
<line x1="440.55" y1="206" x2="440.55" y2="265.3" stroke="#DADDE2" stroke-width="0.8"/>
<text x="443.15" y="270.2" transform="rotate(-45 443.15 270.2)" text-anchor="end" font-size="6.9" fill="#666">19:42:07</text>
<line x1="459.80" y1="206" x2="459.80" y2="265.3" stroke="#DADDE2" stroke-width="0.8"/>
<text x="462.40" y="270.2" transform="rotate(-45 462.40 270.2)" text-anchor="end" font-size="6.9" fill="#666">19:42:28</text>
<line x1="479.05" y1="206" x2="479.05" y2="265.3" stroke="#DADDE2" stroke-width="0.8"/>
<text x="481.65" y="270.2" transform="rotate(-45 481.65 270.2)" text-anchor="end" font-size="6.9" fill="#666">19:42:49</text>
<line x1="498.30" y1="206" x2="498.30" y2="265.3" stroke="#DADDE2" stroke-width="0.8"/>
<text x="500.90" y="270.2" transform="rotate(-45 500.90 270.2)" text-anchor="end" font-size="6.9" fill="#666">19:43:10</text>
<line x1="517.55" y1="206" x2="517.55" y2="265.3" stroke="#DADDE2" stroke-width="0.8"/>
<text x="520.15" y="270.2" transform="rotate(-45 520.15 270.2)" text-anchor="end" font-size="6.9" fill="#666">19:43:31</text>
<line x1="536.80" y1="206" x2="536.80" y2="265.3" stroke="#DADDE2" stroke-width="0.8"/>
<text x="539.40" y="270.2" transform="rotate(-45 539.40 270.2)" text-anchor="end" font-size="6.9" fill="#666">19:43:52</text>
<line x1="556.05" y1="206" x2="556.05" y2="265.3" stroke="#DADDE2" stroke-width="0.8"/>
<text x="558.65" y="270.2" transform="rotate(-45 558.65 270.2)" text-anchor="end" font-size="6.9" fill="#666">19:44:13</text>
<line x1="575.30" y1="206" x2="575.30" y2="265.3" stroke="#DADDE2" stroke-width="0.8"/>
<text x="577.90" y="270.2" transform="rotate(-45 577.90 270.2)" text-anchor="end" font-size="6.9" fill="#666">19:44:34</text>
<line x1="594.55" y1="206" x2="594.55" y2="265.3" stroke="#DADDE2" stroke-width="0.8"/>
<text x="597.15" y="270.2" transform="rotate(-45 597.15 270.2)" text-anchor="end" font-size="6.9" fill="#666">19:44:55</text>
<line x1="613.80" y1="206" x2="613.80" y2="265.3" stroke="#DADDE2" stroke-width="0.8"/>
<text x="616.40" y="270.2" transform="rotate(-45 616.40 270.2)" text-anchor="end" font-size="6.9" fill="#666">19:45:16</text>
<line x1="633.05" y1="206" x2="633.05" y2="265.3" stroke="#DADDE2" stroke-width="0.8"/>
<text x="635.65" y="270.2" transform="rotate(-45 635.65 270.2)" text-anchor="end" font-size="6.9" fill="#666">19:45:37</text>
<line x1="652.30" y1="206" x2="652.30" y2="265.3" stroke="#DADDE2" stroke-width="0.8"/>
<text x="654.90" y="270.2" transform="rotate(-45 654.90 270.2)" text-anchor="end" font-size="6.9" fill="#666">19:45:58</text>
<line x1="671.55" y1="206" x2="671.55" y2="265.3" stroke="#DADDE2" stroke-width="0.8"/>
<text x="674.15" y="270.2" transform="rotate(-45 674.15 270.2)" text-anchor="end" font-size="6.9" fill="#666">19:46:19</text>
<line x1="690.80" y1="206" x2="690.80" y2="265.3" stroke="#DADDE2" stroke-width="0.8"/>
<text x="693.40" y="270.2" transform="rotate(-45 693.40 270.2)" text-anchor="end" font-size="6.9" fill="#666">19:46:40</text>
<line x1="710.05" y1="206" x2="710.05" y2="265.3" stroke="#DADDE2" stroke-width="0.8"/>
<text x="712.65" y="270.2" transform="rotate(-45 712.65 270.2)" text-anchor="end" font-size="6.9" fill="#666">19:47:01</text>
<line x1="729.30" y1="206" x2="729.30" y2="265.3" stroke="#DADDE2" stroke-width="0.8"/>
<text x="731.90" y="270.2" transform="rotate(-45 731.90 270.2)" text-anchor="end" font-size="6.9" fill="#666">19:47:22</text>
<line x1="748.55" y1="206" x2="748.55" y2="265.3" stroke="#DADDE2" stroke-width="0.8"/>
<text x="751.15" y="270.2" transform="rotate(-45 751.15 270.2)" text-anchor="end" font-size="6.9" fill="#666">19:47:43</text>
<line x1="767.80" y1="206" x2="767.80" y2="265.3" stroke="#DADDE2" stroke-width="0.8"/>
<text x="770.40" y="270.2" transform="rotate(-45 770.40 270.2)" text-anchor="end" font-size="6.9" fill="#666">19:48:04</text>
<line x1="787.05" y1="206" x2="787.05" y2="265.3" stroke="#DADDE2" stroke-width="0.8"/>
<text x="789.65" y="270.2" transform="rotate(-45 789.65 270.2)" text-anchor="end" font-size="6.9" fill="#666">19:48:25</text>
<line x1="806.30" y1="206" x2="806.30" y2="265.3" stroke="#DADDE2" stroke-width="0.8"/>
<text x="808.90" y="270.2" transform="rotate(-45 808.90 270.2)" text-anchor="end" font-size="6.9" fill="#666">19:48:46</text>
<line x1="825.55" y1="206" x2="825.55" y2="265.3" stroke="#DADDE2" stroke-width="0.8"/>
<text x="828.15" y="270.2" transform="rotate(-45 828.15 270.2)" text-anchor="end" font-size="6.9" fill="#666">19:49:07</text>
<line x1="844.80" y1="206" x2="844.80" y2="265.3" stroke="#DADDE2" stroke-width="0.8"/>
<text x="847.40" y="270.2" transform="rotate(-45 847.40 270.2)" text-anchor="end" font-size="6.9" fill="#666">19:49:28</text>
<line x1="864.05" y1="206" x2="864.05" y2="265.3" stroke="#DADDE2" stroke-width="0.8"/>
<text x="866.65" y="270.2" transform="rotate(-45 866.65 270.2)" text-anchor="end" font-size="6.9" fill="#666">19:49:49</text>
<line x1="883.30" y1="206" x2="883.30" y2="265.3" stroke="#DADDE2" stroke-width="0.8"/>
<text x="885.90" y="270.2" transform="rotate(-45 885.90 270.2)" text-anchor="end" font-size="6.9" fill="#666">19:50:10</text>
<line x1="902.55" y1="206" x2="902.55" y2="265.3" stroke="#DADDE2" stroke-width="0.8"/>
<text x="905.15" y="270.2" transform="rotate(-45 905.15 270.2)" text-anchor="end" font-size="6.9" fill="#666">19:50:31</text>
<line x1="921.80" y1="206" x2="921.80" y2="265.3" stroke="#DADDE2" stroke-width="0.8"/>
<text x="924.40" y="270.2" transform="rotate(-45 924.40 270.2)" text-anchor="end" font-size="6.9" fill="#666">19:50:52</text>
<line x1="941.05" y1="206" x2="941.05" y2="265.3" stroke="#DADDE2" stroke-width="0.8"/>
<text x="943.65" y="270.2" transform="rotate(-45 943.65 270.2)" text-anchor="end" font-size="6.9" fill="#666">19:51:13</text>
<line x1="960.30" y1="206" x2="960.30" y2="265.3" stroke="#DADDE2" stroke-width="0.8"/>
<text x="962.90" y="270.2" transform="rotate(-45 962.90 270.2)" text-anchor="end" font-size="6.9" fill="#666">19:51:34</text>
<line x1="979.55" y1="206" x2="979.55" y2="265.3" stroke="#DADDE2" stroke-width="0.8"/>
<text x="982.15" y="270.2" transform="rotate(-45 982.15 270.2)" text-anchor="end" font-size="6.9" fill="#666">19:51:55</text>
<line x1="998.80" y1="206" x2="998.80" y2="265.3" stroke="#DADDE2" stroke-width="0.8"/>
<text x="1001.40" y="270.2" transform="rotate(-45 1001.40 270.2)" text-anchor="end" font-size="6.9" fill="#666">19:52:16</text>
<line x1="1018.05" y1="206" x2="1018.05" y2="265.3" stroke="#DADDE2" stroke-width="0.8"/>
<text x="1020.65" y="270.2" transform="rotate(-45 1020.65 270.2)" text-anchor="end" font-size="6.9" fill="#666">19:52:37</text>
<line x1="1037.30" y1="206" x2="1037.30" y2="265.3" stroke="#DADDE2" stroke-width="0.8"/>
<text x="1039.90" y="270.2" transform="rotate(-45 1039.90 270.2)" text-anchor="end" font-size="6.9" fill="#666">19:52:58</text>
<text x="206" y="233" transform="rotate(-90 206 233)" text-anchor="middle" font-size="7.5" fill="#666"># wait event types</text>
<polygon points="228.8,258.2 228.8,231.47 229.3,231.33 229.8,231.20 230.3,231.07 230.8,230.93 231.3,230.80 231.8,230.67 232.3,230.54 232.8,230.40 233.3,230.27 233.8,230.14 234.3,230.05 234.8,229.98 235.3,229.91 235.8,229.84 236.3,229.77 236.8,229.70 237.3,229.63 237.8,229.56 238.3,229.48 238.8,229.41 239.3,229.34 239.8,229.27 240.3,229.20 240.8,229.13 241.3,229.06 241.8,228.99 242.3,228.92 242.8,228.85 243.3,228.77 243.8,228.70 244.3,228.63 244.8,228.63 245.3,228.63 245.8,228.63 246.3,228.63 246.8,228.63 247.3,228.63 247.8,228.63 248.3,228.63 248.8,228.63 249.3,228.63 249.8,228.63 250.3,228.63 250.8,228.63 251.3,228.63 251.8,228.63 252.3,228.63 252.8,228.63 253.3,228.63 253.8,228.63 254.3,228.63 254.8,228.63 255.3,228.63 255.8,228.63 256.3,228.63 256.8,228.63 257.3,228.63 257.8,228.63 258.3,228.63 258.8,228.63 259.3,228.63 259.8,228.63 260.3,228.63 260.8,228.63 261.3,228.63 261.8,228.63 262.3,228.63 262.8,228.63 263.3,228.63 263.8,228.63 264.3,228.63 264.8,228.63 265.3,228.63 265.8,228.63 266.3,228.63 266.8,228.63 267.3,228.63 267.8,228.63 268.3,228.63 268.8,228.63 269.3,228.63 269.8,228.63 270.3,228.63 270.8,228.63 271.3,228.63 271.8,228.63 272.3,228.63 272.8,228.63 273.3,228.63 273.8,228.63 274.3,228.63 274.8,228.63 275.3,228.63 275.8,228.63 276.3,228.63 276.8,228.63 277.3,228.63 277.8,228.63 278.3,228.63 278.8,228.63 279.3,228.63 279.8,228.63 280.3,228.63 280.8,228.63 281.3,228.63 281.8,228.63 282.3,228.63 282.8,228.63 283.3,228.63 283.8,228.63 284.3,228.63 284.8,228.63 285.3,228.63 285.8,228.63 286.3,228.63 286.8,228.63 287.3,228.63 287.8,228.63 288.3,228.63 288.8,228.63 289.3,228.63 289.8,228.63 290.3,227.82 290.8,226.46 291.3,225.90 291.8,225.87 292.3,225.83 292.8,225.80 293.3,225.77 293.8,225.73 294.3,225.70 294.8,225.67 295.3,225.63 295.8,225.60 296.3,225.57 296.8,225.53 297.3,225.50 297.8,225.47 298.3,225.43 298.8,225.40 299.3,225.37 299.8,225.33 300.3,225.30 300.8,225.27 301.3,225.23 301.8,225.20 302.3,225.16 302.8,225.13 303.3,225.10 303.8,225.06 304.3,225.03 304.8,225.00 305.3,224.96 305.8,224.93 306.3,224.90 306.8,224.86 307.3,224.83 307.8,224.80 308.3,224.76 308.8,224.73 309.3,224.70 309.8,224.68 310.3,224.67 310.8,224.66 311.3,224.65 311.8,224.64 312.3,224.63 312.8,224.62 313.3,224.61 313.8,224.59 314.3,224.58 314.8,224.57 315.3,224.56 315.8,224.55 316.3,224.54 316.8,224.53 317.3,224.52 317.8,224.51 318.3,224.50 318.8,224.49 319.3,224.47 319.8,224.46 320.3,224.45 320.8,224.44 321.3,224.43 321.8,224.42 322.3,224.41 322.8,224.40 323.3,224.39 323.8,224.38 324.3,224.37 324.8,224.36 325.3,224.34 325.8,224.33 326.3,224.32 326.8,224.31 327.3,224.30 327.8,224.29 328.3,224.28 328.8,224.27 329.3,224.26 329.8,224.25 330.3,224.24 330.8,224.23 331.3,224.21 331.8,224.20 332.3,224.19 332.8,224.18 333.3,224.17 333.8,224.16 334.3,224.15 334.8,224.14 335.3,224.13 335.8,224.12 336.3,224.11 336.8,224.10 337.3,224.08 337.8,224.07 338.3,224.06 338.8,224.05 339.3,224.04 339.8,224.03 340.3,224.02 340.8,224.01 341.3,224.00 341.8,223.99 342.3,223.98 342.8,223.97 343.3,223.95 343.8,223.79 344.3,223.53 344.8,223.27 345.3,223.01 345.8,222.75 346.3,222.49 346.8,222.23 347.3,221.97 347.8,221.71 348.3,221.46 348.8,221.22 349.3,220.98 349.8,220.74 350.3,220.50 350.8,220.26 351.3,220.02 351.8,219.77 352.3,219.53 352.8,219.29 353.3,219.05 353.8,218.81 354.3,218.57 354.8,218.33 355.3,218.09 355.8,218.00 356.3,217.95 356.8,217.91 357.3,217.86 357.8,217.82 358.3,217.77 358.8,217.73 359.3,217.68 359.8,217.64 360.3,217.59 360.8,217.55 361.3,217.50 361.8,217.45 362.3,217.41 362.8,217.36 363.3,217.32 363.8,217.27 364.3,217.23 364.8,217.18 365.3,217.14 365.8,217.09 366.3,217.04 366.8,217.00 367.3,216.95 367.8,216.91 368.3,216.86 368.8,216.82 369.3,216.77 369.8,216.73 370.3,216.68 370.8,216.64 371.3,216.59 371.8,216.54 372.3,216.50 372.8,216.45 373.3,216.38 373.8,216.30 374.3,216.21 374.8,216.12 375.3,216.04 375.8,215.95 376.3,215.86 376.8,215.78 377.3,215.69 377.8,215.61 378.3,215.52 378.8,215.43 379.3,215.35 379.8,215.26 380.3,215.17 380.8,215.09 381.3,215.00 381.8,214.91 382.3,214.83 382.8,214.74 383.3,214.65 383.8,214.57 384.3,214.48 384.8,214.40 385.3,214.33 385.8,214.25 386.3,214.17 386.8,214.09 387.3,214.02 387.8,213.94 388.3,213.86 388.8,213.79 389.3,213.71 389.8,213.63 390.3,213.56 390.8,213.48 391.3,213.40 391.8,213.32 392.3,213.25 392.8,213.17 393.3,213.09 393.8,213.02 394.3,212.94 394.8,212.86 395.3,212.80 395.8,212.75 396.3,212.69 396.8,212.63 397.3,212.57 397.8,212.51 398.3,212.45 398.8,212.40 399.3,212.34 399.8,212.28 400.3,212.22 400.8,212.16 401.3,212.10 401.8,212.05 402.3,211.99 402.8,211.93 403.3,211.87 403.8,211.81 404.3,211.76 404.8,211.70 405.3,211.64 405.8,211.58 406.3,211.52 406.8,211.46 407.3,211.41 407.8,211.35 408.3,211.29 408.8,211.23 409.3,211.17 409.8,211.11 410.3,211.06 410.8,211.00 411.3,210.94 411.8,210.88 412.3,210.82 412.8,210.76 413.3,210.71 413.8,210.65 414.3,210.59 414.8,210.53 415.3,210.47 415.8,210.42 416.3,210.36 416.8,210.30 417.3,210.26 417.8,210.23 418.3,210.20 418.8,210.17 419.3,210.14 419.8,210.12 420.3,210.09 420.8,210.06 421.3,210.03 421.8,210.00 422.3,209.97 422.8,209.95 423.3,209.92 423.8,209.89 424.3,209.86 424.8,209.83 425.3,209.80 425.8,209.78 426.3,209.75 426.8,209.72 427.3,209.69 427.8,209.66 428.3,209.63 428.8,209.61 429.3,209.58 429.8,209.55 430.3,209.52 430.8,209.49 431.3,209.46 431.8,209.43 432.3,209.41 432.8,209.38 433.3,209.35 433.8,209.32 434.3,209.29 434.8,209.26 435.3,209.24 435.8,209.21 436.3,209.18 436.8,209.15 437.3,209.12 437.8,209.09 438.3,209.07 438.8,209.04 439.3,209.01 439.8,208.98 440.3,208.95 440.8,208.92 441.3,208.90 441.8,208.87 442.3,208.84 442.8,208.81 443.3,208.78 443.8,208.75 444.3,208.72 444.8,208.70 445.3,208.67 445.8,208.67 446.3,208.67 446.8,208.67 447.3,208.67 447.8,208.67 448.3,208.67 448.8,208.67 449.3,208.67 449.8,208.67 450.3,208.67 450.8,208.67 451.3,208.67 451.8,208.67 452.3,208.67 452.8,208.67 453.3,208.67 453.8,208.67 454.3,208.67 454.8,208.67 455.3,208.67 455.8,208.67 456.3,208.67 456.8,208.67 457.3,208.67 457.8,208.67 458.3,208.67 458.8,208.67 459.3,208.67 459.8,208.67 460.3,208.67 460.8,208.67 461.3,208.67 461.8,208.67 462.3,208.67 462.8,208.67 463.3,208.67 463.8,208.67 464.3,208.67 464.8,208.67 465.3,208.67 465.8,208.67 466.3,208.67 466.8,208.67 467.3,208.67 467.8,208.67 468.3,208.67 468.8,208.67 469.3,208.67 469.8,208.67 470.3,208.67 470.8,208.67 471.3,208.67 471.8,208.67 472.3,208.67 472.8,208.67 473.3,208.67 473.8,208.67 474.3,208.67 474.8,208.67 475.3,208.67 475.8,208.67 476.3,208.67 476.8,208.67 477.3,208.67 477.8,208.67 478.3,208.67 478.8,208.67 479.3,208.67 479.8,208.67 480.3,208.67 480.8,208.67 481.3,208.67 481.8,208.67 482.3,208.67 482.8,208.67 483.3,208.67 483.8,208.67 484.3,208.67 484.8,208.67 485.3,208.67 485.8,208.67 486.3,208.67 486.8,208.67 487.3,208.67 487.8,208.67 488.3,208.67 488.8,208.67 489.3,208.67 489.8,208.67 490.3,208.67 490.8,208.67 491.3,208.67 491.8,208.67 492.3,208.67 492.8,208.67 493.3,208.67 493.8,208.67 494.3,208.67 494.8,208.67 495.3,208.67 495.8,208.67 496.3,208.67 496.8,208.67 497.3,208.67 497.8,208.67 498.3,208.67 498.8,208.67 499.3,208.67 499.8,208.67 500.3,208.67 500.8,208.67 501.3,208.67 501.8,208.67 502.3,208.67 502.8,208.67 503.3,208.67 503.8,208.67 504.3,208.67 504.8,208.67 505.3,208.67 505.8,208.67 506.3,208.67 506.8,208.67 507.3,208.67 507.8,208.67 508.3,208.67 508.8,208.67 509.3,208.67 509.8,208.67 510.3,208.67 510.8,208.67 511.3,208.67 511.8,208.67 512.3,208.67 512.8,208.67 513.3,208.67 513.8,208.67 514.3,208.67 514.8,208.67 515.3,208.67 515.8,208.67 516.3,208.67 516.8,208.67 517.3,208.67 517.8,208.67 518.3,208.67 518.8,208.67 519.3,208.67 519.8,208.67 520.3,208.67 520.8,208.67 521.3,208.67 521.8,208.67 522.3,208.67 522.8,208.67 523.3,208.67 523.8,208.67 524.3,208.67 524.8,208.67 525.3,208.67 525.8,208.67 526.3,208.67 526.8,208.67 527.3,208.67 527.8,208.67 528.3,208.67 528.8,208.67 529.3,208.67 529.8,208.67 530.3,208.67 530.8,208.67 531.3,208.67 531.8,208.67 532.3,208.67 532.8,208.67 533.3,208.67 533.8,208.67 534.3,208.67 534.8,208.67 535.3,208.67 535.8,208.67 536.3,208.67 536.8,208.67 537.3,208.67 537.8,208.67 538.3,208.67 538.8,208.67 539.3,208.67 539.8,208.67 540.3,208.67 540.8,208.67 541.3,208.67 541.8,208.67 542.3,208.67 542.8,208.67 543.3,208.67 543.8,208.67 544.3,208.67 544.8,208.67 545.3,208.67 545.8,208.67 546.3,208.67 546.8,208.67 547.3,208.67 547.8,208.67 548.3,208.67 548.8,208.67 549.3,208.67 549.8,208.67 550.3,208.67 550.8,208.67 551.3,208.67 551.8,208.67 552.3,208.67 552.8,208.67 553.3,208.67 553.8,208.67 554.3,208.67 554.8,208.67 555.3,208.67 555.8,208.67 556.3,208.67 556.8,208.67 557.3,208.67 557.8,208.67 558.3,208.67 558.8,208.67 559.3,208.67 559.8,208.67 560.3,208.67 560.8,208.67 561.3,208.67 561.8,208.67 562.3,208.67 562.8,208.67 563.3,208.67 563.8,208.67 564.3,208.67 564.8,208.67 565.3,208.67 565.8,208.67 566.3,208.67 566.8,208.67 567.3,208.67 567.8,208.67 568.3,208.67 568.8,208.67 569.3,208.67 569.8,208.67 570.3,208.67 570.8,208.67 571.3,208.67 571.8,208.67 572.3,208.67 572.8,208.67 573.3,208.67 573.8,208.67 574.3,208.67 574.8,208.67 575.3,208.67 575.8,208.67 576.3,208.67 576.8,208.67 577.3,208.67 577.8,208.67 578.3,208.67 578.8,208.67 579.3,208.67 579.8,208.67 580.3,208.67 580.8,208.67 581.3,208.67 581.8,208.67 582.3,208.67 582.8,208.67 583.3,208.67 583.8,208.67 584.3,208.67 584.8,208.67 585.3,208.67 585.8,208.67 586.3,208.67 586.8,208.67 587.3,208.67 587.8,208.67 588.3,208.67 588.8,208.67 589.3,208.67 589.8,208.67 590.3,208.67 590.8,208.67 591.3,208.67 591.8,208.67 592.3,208.67 592.8,208.67 593.3,208.67 593.8,208.67 594.3,208.67 594.8,208.67 595.3,208.67 595.8,208.67 596.3,208.67 596.8,208.67 597.3,208.67 597.8,208.67 598.3,208.67 598.8,208.67 599.3,208.67 599.8,208.67 600.3,208.67 600.8,208.67 601.3,208.67 601.8,208.67 602.3,208.67 602.8,208.67 603.3,208.67 603.8,208.67 604.3,208.67 604.8,208.67 605.3,208.67 605.8,208.67 606.3,208.67 606.8,208.67 607.3,208.67 607.8,208.67 608.3,208.67 608.8,208.67 609.3,208.67 609.8,208.67 610.3,208.67 610.8,208.67 611.3,208.67 611.8,208.67 612.3,208.67 612.8,208.67 613.3,208.67 613.8,208.67 614.3,208.67 614.8,208.67 615.3,208.67 615.8,208.67 616.3,208.67 616.8,208.67 617.3,208.67 617.8,208.67 618.3,208.67 618.8,208.67 619.3,208.67 619.8,208.67 620.3,208.67 620.8,208.67 621.3,208.67 621.8,208.67 622.3,208.67 622.8,208.67 623.3,208.67 623.8,208.67 624.3,208.67 624.8,208.67 625.3,208.67 625.8,208.67 626.3,208.67 626.8,208.67 627.3,208.67 627.8,208.67 628.3,208.67 628.8,208.67 629.3,208.67 629.8,208.67 630.3,208.67 630.8,208.67 631.3,208.67 631.8,208.67 632.3,208.67 632.8,208.67 633.3,208.67 633.8,208.67 634.3,208.67 634.8,208.67 635.3,208.67 635.8,208.67 636.3,208.67 636.8,208.67 637.3,208.67 637.8,208.67 638.3,208.67 638.8,208.67 639.3,208.67 639.8,208.67 640.3,208.67 640.8,208.67 641.3,208.67 641.8,208.67 642.3,208.67 642.8,208.67 643.3,208.67 643.8,208.67 644.3,208.67 644.8,208.67 645.3,208.67 645.8,208.67 646.3,208.67 646.8,208.67 647.3,208.67 647.8,208.67 648.3,208.67 648.8,208.67 649.3,208.67 649.8,208.67 650.3,208.67 650.8,208.67 651.3,208.67 651.8,208.67 652.3,208.67 652.8,208.67 653.3,208.67 653.8,208.67 654.3,208.67 654.8,208.67 655.3,208.67 655.8,208.67 656.3,208.67 656.8,208.67 657.3,208.67 657.8,208.67 658.3,208.67 658.8,208.67 659.3,208.67 659.8,208.67 660.3,208.67 660.8,208.67 661.3,208.67 661.8,208.67 662.3,208.67 662.8,208.67 663.3,208.67 663.8,208.67 664.3,208.67 664.8,208.67 665.3,208.67 665.8,208.67 666.3,208.67 666.8,208.67 667.3,208.67 667.8,208.67 668.3,208.67 668.8,208.67 669.3,208.67 669.8,208.67 670.3,208.67 670.8,208.67 671.3,208.67 671.8,208.67 672.3,208.67 672.8,208.67 673.3,208.67 673.8,208.67 674.3,208.67 674.8,208.67 675.3,208.67 675.8,208.67 676.3,208.67 676.8,208.67 677.3,208.67 677.8,208.67 678.3,208.67 678.8,208.67 679.3,208.67 679.8,208.67 680.3,208.67 680.8,208.67 681.3,208.67 681.8,208.67 682.3,208.67 682.8,208.67 683.3,208.67 683.8,208.67 684.3,208.67 684.8,208.67 685.3,208.67 685.8,208.67 686.3,208.67 686.8,208.67 687.3,208.67 687.8,208.67 688.3,208.67 688.8,208.67 689.3,208.67 689.8,208.67 690.3,208.67 690.8,208.67 691.3,208.67 691.8,208.67 692.3,208.67 692.8,208.67 693.3,208.67 693.8,208.67 694.3,208.67 694.8,208.67 695.3,208.67 695.8,208.67 696.3,208.67 696.8,208.67 697.3,208.67 697.8,208.67 698.3,208.67 698.8,208.67 699.3,208.67 699.8,208.67 700.3,208.67 700.8,208.67 701.3,208.67 701.8,208.67 702.3,208.67 702.8,208.67 703.3,208.67 703.8,208.67 704.3,208.67 704.8,208.67 705.3,208.67 705.8,208.67 706.3,208.67 706.8,208.67 707.3,208.67 707.8,208.67 708.3,208.67 708.8,208.67 709.3,208.67 709.8,208.67 710.3,208.67 710.8,208.67 711.3,208.67 711.8,208.67 712.3,208.67 712.8,208.67 713.3,208.67 713.8,208.67 714.3,208.67 714.8,208.67 715.3,208.67 715.8,208.67 716.3,208.67 716.8,208.67 717.3,208.67 717.8,208.67 718.3,208.67 718.8,208.67 719.3,208.67 719.8,208.67 720.3,208.67 720.8,208.67 721.3,208.67 721.8,208.67 722.3,208.67 722.8,208.67 723.3,208.67 723.8,208.67 724.3,208.67 724.8,208.67 725.3,208.67 725.8,208.67 726.3,208.67 726.8,208.67 727.3,208.67 727.8,208.67 728.3,208.67 728.8,208.67 729.3,208.67 729.8,208.67 730.3,208.67 730.8,208.67 731.3,208.67 731.8,208.67 732.3,208.67 732.8,208.67 733.3,208.67 733.8,208.67 734.3,208.67 734.8,208.67 735.3,208.67 735.8,208.67 736.3,208.67 736.8,208.67 737.3,208.67 737.8,208.67 738.3,208.67 738.8,208.67 739.3,208.67 739.8,208.67 740.3,208.67 740.8,208.67 741.3,208.67 741.8,208.67 742.3,208.67 742.8,208.67 743.3,208.67 743.8,208.67 744.3,208.67 744.8,208.67 745.3,208.67 745.8,208.67 746.3,208.67 746.8,208.67 747.3,208.67 747.8,208.67 748.3,208.67 748.8,208.67 749.3,208.67 749.8,208.67 750.3,208.67 750.8,208.67 751.3,208.67 751.8,208.67 752.3,208.67 752.8,208.67 753.3,208.67 753.8,208.67 754.3,208.67 754.8,208.67 755.3,208.67 755.8,208.67 756.3,208.67 756.8,208.67 757.3,208.67 757.8,208.67 758.3,208.67 758.8,208.67 759.3,208.67 759.8,208.67 760.3,208.67 760.8,208.67 761.3,208.67 761.8,208.67 762.3,208.67 762.8,208.67 763.3,208.67 763.8,208.67 764.3,208.67 764.8,208.67 765.3,208.67 765.8,208.67 766.3,208.67 766.8,208.67 767.3,208.67 767.8,208.67 768.3,208.67 768.8,208.67 769.3,208.67 769.8,208.67 770.3,208.67 770.8,208.67 771.3,208.67 771.8,208.67 772.3,208.67 772.8,208.67 773.3,208.67 773.8,208.67 774.3,208.67 774.8,208.67 775.3,208.67 775.8,208.67 776.3,208.67 776.8,208.67 777.3,208.67 777.8,208.67 778.3,208.67 778.8,208.67 779.3,208.67 779.8,208.67 780.3,208.67 780.8,208.67 781.3,208.67 781.8,208.67 782.3,208.67 782.8,208.67 783.3,208.67 783.8,208.67 784.3,208.67 784.8,208.67 785.3,208.67 785.8,208.67 786.3,208.67 786.8,208.67 787.3,208.67 787.8,208.67 788.3,208.67 788.8,208.67 789.3,208.67 789.8,208.67 790.3,208.67 790.8,208.67 791.3,208.67 791.8,208.67 792.3,208.67 792.8,208.67 793.3,208.67 793.8,208.67 794.3,208.67 794.8,208.67 795.3,208.67 795.8,208.67 796.3,208.67 796.8,208.67 797.3,208.67 797.8,208.67 798.3,208.67 798.8,208.67 799.3,208.67 799.8,208.67 800.3,208.67 800.8,208.67 801.3,208.67 801.8,208.67 802.3,208.67 802.8,208.67 803.3,208.67 803.8,208.67 804.3,208.67 804.8,208.67 805.3,208.67 805.8,208.67 806.3,208.67 806.8,208.67 807.3,208.67 807.8,208.67 808.3,208.67 808.8,208.67 809.3,208.67 809.8,208.67 810.3,208.67 810.8,208.67 811.3,208.67 811.8,208.67 812.3,208.67 812.8,208.67 813.3,208.67 813.8,208.67 814.3,208.67 814.8,208.67 815.3,208.67 815.8,208.67 816.3,208.67 816.8,208.67 817.3,208.67 817.8,208.67 818.3,208.67 818.8,208.67 819.3,208.67 819.8,208.67 820.3,208.67 820.8,208.67 821.3,208.67 821.8,208.67 822.3,208.67 822.8,208.67 823.3,208.67 823.8,208.67 824.3,208.67 824.8,208.67 825.3,208.67 825.8,208.67 826.3,208.67 826.8,208.67 827.3,208.67 827.8,208.67 828.3,208.67 828.8,208.67 829.3,208.67 829.8,208.67 830.3,208.67 830.8,208.67 831.3,208.67 831.8,208.67 832.3,208.67 832.8,208.67 833.3,208.67 833.8,208.67 834.3,208.67 834.8,208.67 835.3,208.67 835.8,208.67 836.3,208.67 836.8,208.67 837.3,208.67 837.8,208.67 838.3,208.67 838.8,208.67 839.3,208.67 839.8,208.67 840.3,208.67 840.8,208.67 841.3,208.67 841.8,208.67 842.3,208.67 842.8,208.67 843.3,208.67 843.8,208.67 844.3,208.67 844.8,208.67 845.3,208.67 845.8,208.67 846.3,208.67 846.8,208.67 847.3,208.67 847.8,208.67 848.3,208.67 848.8,208.67 849.3,208.67 849.8,208.67 850.3,208.67 850.8,208.67 851.3,208.67 851.8,208.67 852.3,208.67 852.8,208.67 853.3,208.67 853.8,208.67 854.3,208.67 854.8,208.67 855.3,208.67 855.8,208.67 856.3,208.67 856.8,208.67 857.3,208.67 857.8,208.67 858.3,208.67 858.8,208.67 859.3,208.67 859.8,208.67 860.3,208.67 860.8,208.67 861.3,208.67 861.8,208.67 862.3,208.67 862.8,208.67 863.3,208.67 863.8,208.67 864.3,208.67 864.8,208.67 865.3,208.67 865.8,208.67 866.3,208.67 866.8,208.67 867.3,208.67 867.8,208.67 868.3,208.67 868.8,208.67 869.3,208.67 869.8,208.67 870.3,208.67 870.8,208.67 871.3,208.67 871.8,208.67 872.3,208.67 872.8,208.67 873.3,208.67 873.8,208.67 874.3,208.67 874.8,208.67 875.3,208.67 875.8,208.67 876.3,208.67 876.8,208.67 877.3,208.67 877.8,208.67 878.3,208.67 878.8,208.67 879.3,208.67 879.8,208.67 880.3,208.67 880.8,208.67 881.3,208.67 881.8,208.67 882.3,208.67 882.8,208.67 883.3,208.67 883.8,208.67 884.3,208.67 884.8,208.67 885.3,208.67 885.8,208.67 886.3,208.67 886.8,208.67 887.3,208.67 887.8,208.67 888.3,208.67 888.8,208.67 889.3,208.67 889.8,208.67 890.3,208.67 890.8,208.67 891.3,208.67 891.8,208.67 892.3,208.67 892.8,208.67 893.3,208.67 893.8,208.67 894.3,208.67 894.8,208.67 895.3,208.67 895.8,208.67 896.3,208.67 896.8,208.67 897.3,208.67 897.8,208.67 898.3,208.67 898.8,208.67 899.3,208.67 899.8,208.67 900.3,208.67 900.8,208.67 901.3,208.67 901.8,208.67 902.3,208.67 902.8,208.67 903.3,208.67 903.8,208.67 904.3,208.67 904.8,209.25 905.3,209.54 905.8,209.54 906.3,209.54 906.8,209.54 907.3,209.54 907.8,209.54 908.3,209.54 908.8,209.54 909.3,209.54 909.8,209.54 910.3,209.54 910.8,209.54 911.3,209.54 911.8,209.54 912.3,209.54 912.8,209.54 913.3,209.54 913.8,209.54 914.3,209.54 914.8,209.54 915.3,209.54 915.8,209.54 916.3,209.54 916.8,209.54 917.3,209.54 917.8,209.54 918.3,209.54 918.8,209.54 919.3,209.54 919.8,209.54 920.3,209.54 920.8,209.54 921.3,209.54 921.8,209.54 922.3,209.54 922.8,209.54 923.3,209.54 923.8,209.54 924.3,209.54 924.8,209.54 925.3,209.54 925.8,209.54 926.3,209.54 926.8,209.54 927.3,209.54 927.8,209.54 928.3,209.54 928.8,209.54 929.3,209.54 929.8,209.54 930.3,209.54 930.8,209.54 931.3,209.54 931.8,209.54 932.3,209.54 932.8,209.54 933.3,209.54 933.8,209.54 934.3,209.54 934.8,209.54 935.3,209.54 935.8,209.54 936.3,209.54 936.8,209.54 937.3,209.54 937.8,209.54 938.3,209.54 938.8,209.54 939.3,209.54 939.8,209.54 940.3,209.54 940.8,209.54 941.3,209.54 941.8,209.54 942.3,209.54 942.8,209.54 943.3,209.54 943.8,209.54 944.3,209.54 944.8,209.54 945.3,209.54 945.8,209.54 946.3,209.54 946.8,209.54 947.3,209.54 947.8,210.36 948.3,210.78 948.8,210.80 949.3,210.82 949.8,210.84 950.3,210.86 950.8,210.88 951.3,210.90 951.8,210.92 952.3,210.94 952.8,210.96 953.3,210.98 953.8,210.99 954.3,211.01 954.8,211.03 955.3,211.05 955.8,211.07 956.3,211.09 956.8,211.11 957.3,211.13 957.8,211.15 958.3,211.17 958.8,211.19 959.3,211.21 959.8,211.23 960.3,211.25 960.8,211.27 961.3,211.29 961.8,211.31 962.3,211.33 962.8,211.35 963.3,211.37 963.8,211.39 964.3,211.41 964.8,211.43 965.3,211.44 965.8,211.46 966.3,211.48 966.8,211.50 967.3,211.52 967.8,211.54 968.3,211.56 968.8,211.58 969.3,211.60 969.8,211.62 970.3,211.64 970.8,211.66 971.3,211.68 971.8,211.70 972.3,211.72 972.8,211.74 973.3,211.76 973.8,211.82 974.3,211.88 974.8,211.93 975.3,211.99 975.8,212.04 976.3,212.10 976.8,212.15 977.3,212.21 977.8,212.26 978.3,212.32 978.8,212.37 979.3,212.43 979.8,212.48 980.3,212.54 980.8,212.59 981.3,212.65 981.8,212.70 982.3,212.76 982.8,212.81 983.3,212.87 983.8,212.92 984.3,212.98 984.8,213.03 985.3,213.09 985.8,213.14 986.3,213.20 986.8,213.26 987.3,213.31 987.8,213.37 988.3,213.42 988.8,213.48 989.3,213.53 989.8,213.59 990.3,213.64 990.8,213.70 991.3,213.75 991.8,213.81 992.3,213.86 992.8,213.92 993.3,213.97 993.8,214.03 994.3,214.08 994.8,214.15 995.3,214.21 995.8,214.27 996.3,214.34 996.8,214.40 997.3,214.46 997.8,214.53 998.3,214.59 998.8,214.66 999.3,214.72 999.8,214.78 1000.3,214.85 1000.8,214.91 1001.3,214.98 1001.8,215.04 1002.3,215.10 1002.8,215.17 1003.3,215.23 1003.8,215.29 1004.3,215.36 1004.8,215.42 1005.3,215.49 1005.8,215.55 1006.3,215.61 1006.8,215.68 1007.3,215.74 1007.8,215.81 1008.3,215.87 1008.8,215.93 1009.3,216.00 1009.8,216.06 1010.3,216.12 1010.8,216.19 1011.3,216.25 1011.8,216.32 1012.3,216.38 1012.8,216.44 1013.3,216.51 1013.8,216.56 1014.3,216.59 1014.8,216.62 1015.3,216.65 1015.8,216.68 1016.3,216.71 1016.8,216.74 1017.3,216.77 1017.8,216.80 1018.3,216.83 1018.8,216.86 1019.3,216.89 1019.8,216.91 1020.3,216.94 1020.8,216.97 1021.3,217.00 1021.8,217.03 1022.3,217.06 1022.8,217.09 1023.3,217.12 1023.8,217.15 1024.3,217.18 1024.8,217.21 1025.3,217.24 1025.8,217.26 1026.3,217.29 1026.8,217.32 1027.3,217.35 1027.8,217.38 1028.3,217.41 1028.8,217.44 1029.3,217.47 1029.8,217.50 1030.3,217.53 1030.8,217.56 1031.3,217.59 1031.8,217.62 1032.3,217.64 1032.8,217.67 1033.3,217.70 1033.8,217.73 1034.3,217.76 1034.8,217.79 1035.3,217.84 1035.8,217.88 1036.3,217.93 1036.8,217.97 1037.3,218.01 1037.8,218.06 1038.3,218.10 1038.8,218.15 1039.3,218.19 1039.8,218.24 1040.3,218.28 1040.8,218.33 1041.3,218.37 1041.8,218.42 1042.3,218.46 1042.8,218.51 1043.3,218.55 1043.8,218.60 1044.3,218.64 1044.8,218.69 1045.3,218.73 1045.8,218.78 1046.3,218.82 1046.8,218.87 1047.3,218.91 1047.8,218.96 1048.3,219.00 1048.8,219.05 1049.3,219.09 1049.8,219.14 1050.3,219.18 1050.8,219.23 1051.3,219.27 1051.8,219.32 1052.3,219.36 1052.8,219.41 1053.3,219.45 1053.8,219.50 1053.8,258.2" fill="#2A2A2A" />
<polygon points="228.8,258.2 228.8,231.47 229.3,231.33 229.8,231.20 230.3,231.07 230.8,230.93 231.3,230.80 231.8,230.67 232.3,230.54 232.8,230.40 233.3,230.27 233.8,230.14 234.3,230.05 234.8,229.98 235.3,229.91 235.8,229.84 236.3,229.77 236.8,229.70 237.3,229.63 237.8,229.56 238.3,229.48 238.8,229.41 239.3,229.34 239.8,229.27 240.3,229.20 240.8,229.13 241.3,229.06 241.8,228.99 242.3,228.92 242.8,228.85 243.3,228.77 243.8,228.70 244.3,229.86 244.8,229.86 245.3,229.86 245.8,229.86 246.3,229.86 246.8,229.86 247.3,229.86 247.8,229.86 248.3,229.86 248.8,229.86 249.3,229.86 249.8,229.86 250.3,229.86 250.8,229.86 251.3,229.86 251.8,229.86 252.3,229.86 252.8,229.86 253.3,229.86 253.8,229.86 254.3,229.86 254.8,229.86 255.3,229.86 255.8,229.86 256.3,229.86 256.8,229.86 257.3,229.86 257.8,229.86 258.3,229.86 258.8,229.86 259.3,229.86 259.8,229.86 260.3,229.86 260.8,229.86 261.3,229.86 261.8,229.86 262.3,229.86 262.8,229.86 263.3,229.86 263.8,229.86 264.3,229.86 264.8,229.86 265.3,229.86 265.8,229.86 266.3,229.86 266.8,229.86 267.3,229.86 267.8,229.86 268.3,229.86 268.8,229.86 269.3,229.86 269.8,229.86 270.3,229.86 270.8,229.86 271.3,229.86 271.8,229.86 272.3,229.86 272.8,229.86 273.3,229.86 273.8,229.86 274.3,229.86 274.8,229.86 275.3,229.86 275.8,229.86 276.3,229.86 276.8,229.86 277.3,229.86 277.8,229.86 278.3,229.86 278.8,229.86 279.3,229.86 279.8,229.86 280.3,229.86 280.8,229.86 281.3,229.86 281.8,229.86 282.3,229.86 282.8,229.86 283.3,229.86 283.8,229.86 284.3,229.86 284.8,229.86 285.3,229.86 285.8,229.86 286.3,229.86 286.8,229.86 287.3,229.86 287.8,229.86 288.3,229.86 288.8,229.86 289.3,229.86 289.8,229.86 290.3,227.82 290.8,226.46 291.3,225.90 291.8,225.87 292.3,225.83 292.8,225.80 293.3,225.77 293.8,225.73 294.3,225.70 294.8,225.67 295.3,225.63 295.8,225.60 296.3,225.57 296.8,225.53 297.3,225.50 297.8,225.47 298.3,225.43 298.8,225.40 299.3,225.37 299.8,225.33 300.3,225.30 300.8,225.27 301.3,225.23 301.8,225.20 302.3,225.16 302.8,225.13 303.3,225.10 303.8,225.06 304.3,225.03 304.8,225.00 305.3,224.96 305.8,224.93 306.3,224.90 306.8,224.86 307.3,224.83 307.8,224.80 308.3,224.76 308.8,224.73 309.3,224.70 309.8,224.68 310.3,224.67 310.8,224.66 311.3,224.65 311.8,224.64 312.3,224.63 312.8,224.62 313.3,224.61 313.8,224.59 314.3,224.58 314.8,224.57 315.3,224.56 315.8,224.55 316.3,224.54 316.8,224.53 317.3,224.52 317.8,224.51 318.3,224.50 318.8,224.49 319.3,224.47 319.8,224.46 320.3,224.45 320.8,224.44 321.3,224.43 321.8,224.42 322.3,224.41 322.8,224.40 323.3,224.39 323.8,224.38 324.3,224.37 324.8,224.36 325.3,224.34 325.8,224.33 326.3,224.32 326.8,224.31 327.3,224.30 327.8,224.29 328.3,224.28 328.8,224.27 329.3,224.26 329.8,224.25 330.3,224.24 330.8,224.23 331.3,224.21 331.8,224.20 332.3,224.19 332.8,224.18 333.3,224.17 333.8,224.16 334.3,224.15 334.8,224.14 335.3,224.13 335.8,224.12 336.3,224.11 336.8,224.10 337.3,224.08 337.8,224.07 338.3,224.06 338.8,224.05 339.3,224.04 339.8,224.03 340.3,224.02 340.8,224.01 341.3,224.00 341.8,223.99 342.3,223.98 342.8,223.97 343.3,223.95 343.8,223.79 344.3,223.53 344.8,223.27 345.3,223.01 345.8,222.75 346.3,222.49 346.8,222.23 347.3,221.97 347.8,221.71 348.3,221.46 348.8,221.22 349.3,220.98 349.8,220.74 350.3,220.50 350.8,220.26 351.3,220.02 351.8,219.77 352.3,219.53 352.8,219.29 353.3,219.05 353.8,218.81 354.3,218.57 354.8,218.33 355.3,218.09 355.8,218.00 356.3,217.95 356.8,217.91 357.3,217.86 357.8,217.82 358.3,217.77 358.8,217.73 359.3,217.68 359.8,217.64 360.3,217.59 360.8,217.55 361.3,217.50 361.8,217.45 362.3,217.41 362.8,217.36 363.3,217.32 363.8,217.27 364.3,217.23 364.8,217.18 365.3,217.14 365.8,217.09 366.3,217.04 366.8,217.00 367.3,216.95 367.8,216.91 368.3,216.86 368.8,216.82 369.3,216.77 369.8,216.73 370.3,216.68 370.8,216.64 371.3,216.59 371.8,216.54 372.3,216.50 372.8,216.45 373.3,216.38 373.8,216.30 374.3,216.21 374.8,216.12 375.3,216.04 375.8,215.95 376.3,215.86 376.8,215.78 377.3,215.69 377.8,215.61 378.3,215.52 378.8,215.43 379.3,215.35 379.8,215.26 380.3,215.17 380.8,215.09 381.3,215.00 381.8,214.91 382.3,214.83 382.8,214.74 383.3,214.65 383.8,214.57 384.3,214.48 384.8,214.40 385.3,214.33 385.8,214.25 386.3,214.17 386.8,214.09 387.3,214.02 387.8,213.94 388.3,213.86 388.8,213.79 389.3,213.71 389.8,213.63 390.3,213.56 390.8,213.48 391.3,213.40 391.8,213.32 392.3,213.25 392.8,213.17 393.3,213.09 393.8,213.02 394.3,212.94 394.8,212.86 395.3,212.80 395.8,212.75 396.3,212.69 396.8,212.63 397.3,212.57 397.8,212.51 398.3,212.45 398.8,212.40 399.3,212.34 399.8,212.28 400.3,212.22 400.8,212.16 401.3,212.10 401.8,212.05 402.3,211.99 402.8,211.93 403.3,211.87 403.8,211.81 404.3,211.76 404.8,211.70 405.3,211.64 405.8,211.58 406.3,211.52 406.8,211.46 407.3,211.41 407.8,211.35 408.3,211.29 408.8,211.23 409.3,211.17 409.8,211.11 410.3,211.06 410.8,211.00 411.3,210.94 411.8,210.88 412.3,210.82 412.8,210.76 413.3,210.71 413.8,210.65 414.3,210.59 414.8,210.53 415.3,210.47 415.8,210.42 416.3,210.36 416.8,210.30 417.3,210.26 417.8,210.23 418.3,210.20 418.8,210.17 419.3,210.14 419.8,210.12 420.3,210.09 420.8,210.06 421.3,210.03 421.8,210.00 422.3,209.97 422.8,209.95 423.3,209.92 423.8,209.89 424.3,209.86 424.8,209.83 425.3,209.80 425.8,209.78 426.3,209.75 426.8,209.72 427.3,209.69 427.8,209.66 428.3,209.63 428.8,209.61 429.3,209.58 429.8,209.55 430.3,209.52 430.8,209.49 431.3,209.46 431.8,209.43 432.3,209.41 432.8,209.38 433.3,209.35 433.8,209.32 434.3,209.29 434.8,209.26 435.3,209.24 435.8,209.21 436.3,209.18 436.8,209.15 437.3,209.12 437.8,209.09 438.3,209.07 438.8,209.04 439.3,209.01 439.8,208.98 440.3,208.95 440.8,208.92 441.3,208.90 441.8,208.87 442.3,208.84 442.8,208.81 443.3,208.78 443.8,208.75 444.3,208.72 444.8,208.70 445.3,208.67 445.8,208.67 446.3,208.67 446.8,208.67 447.3,208.67 447.8,208.67 448.3,208.67 448.8,208.67 449.3,208.67 449.8,208.67 450.3,208.67 450.8,208.67 451.3,208.67 451.8,208.67 452.3,208.67 452.8,208.67 453.3,208.67 453.8,208.67 454.3,208.67 454.8,208.67 455.3,208.67 455.8,208.67 456.3,208.67 456.8,208.67 457.3,208.67 457.8,208.67 458.3,208.67 458.8,208.67 459.3,208.67 459.8,208.67 460.3,208.67 460.8,208.67 461.3,208.67 461.8,208.67 462.3,208.67 462.8,208.67 463.3,208.67 463.8,208.67 464.3,208.67 464.8,208.67 465.3,208.67 465.8,208.67 466.3,208.67 466.8,208.67 467.3,208.67 467.8,208.67 468.3,208.67 468.8,208.67 469.3,208.67 469.8,208.67 470.3,208.67 470.8,208.67 471.3,208.67 471.8,208.67 472.3,208.67 472.8,208.67 473.3,208.67 473.8,208.67 474.3,208.67 474.8,208.67 475.3,208.67 475.8,208.67 476.3,208.67 476.8,208.67 477.3,208.67 477.8,208.67 478.3,208.67 478.8,208.67 479.3,208.67 479.8,208.67 480.3,208.67 480.8,208.67 481.3,208.67 481.8,208.67 482.3,208.67 482.8,208.67 483.3,208.67 483.8,208.67 484.3,208.67 484.8,208.67 485.3,208.67 485.8,208.67 486.3,208.67 486.8,208.67 487.3,208.67 487.8,208.67 488.3,208.67 488.8,208.67 489.3,208.67 489.8,208.67 490.3,208.67 490.8,208.67 491.3,208.67 491.8,208.67 492.3,208.67 492.8,208.67 493.3,208.67 493.8,208.67 494.3,208.67 494.8,208.67 495.3,208.67 495.8,208.67 496.3,208.67 496.8,208.67 497.3,208.67 497.8,208.67 498.3,208.67 498.8,208.67 499.3,208.67 499.8,208.67 500.3,208.67 500.8,208.67 501.3,208.67 501.8,208.67 502.3,208.67 502.8,208.67 503.3,208.67 503.8,208.67 504.3,208.67 504.8,208.67 505.3,208.67 505.8,208.67 506.3,208.67 506.8,208.67 507.3,208.67 507.8,208.67 508.3,208.67 508.8,208.67 509.3,208.67 509.8,208.67 510.3,208.67 510.8,208.67 511.3,208.67 511.8,208.67 512.3,208.67 512.8,208.67 513.3,208.67 513.8,208.67 514.3,208.67 514.8,208.67 515.3,208.67 515.8,208.67 516.3,208.67 516.8,208.67 517.3,208.67 517.8,208.67 518.3,208.67 518.8,208.67 519.3,208.67 519.8,208.67 520.3,208.67 520.8,208.67 521.3,208.67 521.8,208.67 522.3,208.67 522.8,208.67 523.3,208.67 523.8,208.67 524.3,208.67 524.8,208.67 525.3,208.67 525.8,208.67 526.3,208.67 526.8,208.67 527.3,208.67 527.8,208.67 528.3,208.67 528.8,208.67 529.3,208.67 529.8,208.67 530.3,208.67 530.8,208.67 531.3,208.67 531.8,208.67 532.3,208.67 532.8,208.67 533.3,208.67 533.8,208.67 534.3,208.67 534.8,208.67 535.3,208.67 535.8,208.67 536.3,208.67 536.8,208.67 537.3,208.67 537.8,208.67 538.3,208.67 538.8,208.67 539.3,208.67 539.8,208.67 540.3,208.67 540.8,208.67 541.3,208.67 541.8,208.67 542.3,208.67 542.8,208.67 543.3,208.67 543.8,208.67 544.3,208.67 544.8,208.67 545.3,208.67 545.8,208.67 546.3,208.67 546.8,208.67 547.3,208.67 547.8,208.67 548.3,208.67 548.8,208.67 549.3,208.67 549.8,208.67 550.3,208.67 550.8,208.67 551.3,208.67 551.8,208.67 552.3,208.67 552.8,208.67 553.3,208.67 553.8,208.67 554.3,208.67 554.8,208.67 555.3,208.67 555.8,208.67 556.3,208.67 556.8,208.67 557.3,208.67 557.8,208.67 558.3,208.67 558.8,208.67 559.3,208.67 559.8,208.67 560.3,208.67 560.8,208.67 561.3,208.67 561.8,208.67 562.3,208.67 562.8,208.67 563.3,208.67 563.8,208.67 564.3,208.67 564.8,208.67 565.3,208.67 565.8,208.67 566.3,208.67 566.8,208.67 567.3,208.67 567.8,208.67 568.3,208.67 568.8,208.67 569.3,208.67 569.8,208.67 570.3,208.67 570.8,208.67 571.3,208.67 571.8,208.67 572.3,208.67 572.8,208.67 573.3,208.67 573.8,208.67 574.3,208.67 574.8,208.67 575.3,208.67 575.8,208.67 576.3,208.67 576.8,208.67 577.3,208.67 577.8,208.67 578.3,208.67 578.8,208.67 579.3,208.67 579.8,208.67 580.3,208.67 580.8,208.67 581.3,208.67 581.8,208.67 582.3,208.67 582.8,208.67 583.3,208.67 583.8,208.67 584.3,208.67 584.8,208.67 585.3,208.67 585.8,208.67 586.3,208.67 586.8,208.67 587.3,208.67 587.8,208.67 588.3,208.67 588.8,208.67 589.3,208.67 589.8,208.67 590.3,208.67 590.8,208.67 591.3,208.67 591.8,208.67 592.3,208.67 592.8,208.67 593.3,208.67 593.8,208.67 594.3,208.67 594.8,208.67 595.3,208.67 595.8,208.67 596.3,208.67 596.8,208.67 597.3,208.67 597.8,208.67 598.3,208.67 598.8,208.67 599.3,208.67 599.8,208.67 600.3,208.67 600.8,208.67 601.3,208.67 601.8,208.67 602.3,208.67 602.8,208.67 603.3,208.67 603.8,208.67 604.3,208.67 604.8,208.67 605.3,208.67 605.8,208.67 606.3,208.67 606.8,208.67 607.3,208.67 607.8,208.67 608.3,208.67 608.8,208.67 609.3,208.67 609.8,208.67 610.3,208.67 610.8,208.67 611.3,208.67 611.8,208.67 612.3,208.67 612.8,208.67 613.3,208.67 613.8,208.67 614.3,208.67 614.8,208.67 615.3,208.67 615.8,208.67 616.3,208.67 616.8,208.67 617.3,208.67 617.8,208.67 618.3,208.67 618.8,208.67 619.3,208.67 619.8,208.67 620.3,208.67 620.8,208.67 621.3,208.67 621.8,208.67 622.3,208.67 622.8,208.67 623.3,208.67 623.8,208.67 624.3,208.67 624.8,208.67 625.3,208.67 625.8,208.67 626.3,208.67 626.8,208.67 627.3,208.67 627.8,208.67 628.3,208.67 628.8,208.67 629.3,208.67 629.8,208.67 630.3,208.67 630.8,208.67 631.3,208.67 631.8,208.67 632.3,208.67 632.8,208.67 633.3,208.67 633.8,208.67 634.3,208.67 634.8,208.67 635.3,208.67 635.8,208.67 636.3,208.67 636.8,208.67 637.3,208.67 637.8,208.67 638.3,208.67 638.8,208.67 639.3,208.67 639.8,208.67 640.3,208.67 640.8,208.67 641.3,208.67 641.8,208.67 642.3,208.67 642.8,208.67 643.3,208.67 643.8,208.67 644.3,208.67 644.8,208.67 645.3,208.67 645.8,208.67 646.3,208.67 646.8,208.67 647.3,208.67 647.8,208.67 648.3,208.67 648.8,208.67 649.3,208.67 649.8,208.67 650.3,208.67 650.8,208.67 651.3,208.67 651.8,208.67 652.3,208.67 652.8,208.67 653.3,208.67 653.8,208.67 654.3,208.67 654.8,208.67 655.3,208.67 655.8,208.67 656.3,208.67 656.8,208.67 657.3,208.67 657.8,208.67 658.3,208.67 658.8,208.67 659.3,208.67 659.8,208.67 660.3,208.67 660.8,208.67 661.3,208.67 661.8,208.67 662.3,208.67 662.8,208.67 663.3,208.67 663.8,208.67 664.3,208.67 664.8,208.67 665.3,208.67 665.8,208.67 666.3,208.67 666.8,208.67 667.3,208.67 667.8,208.67 668.3,208.67 668.8,208.67 669.3,208.67 669.8,208.67 670.3,208.67 670.8,208.67 671.3,208.67 671.8,208.67 672.3,208.67 672.8,208.67 673.3,208.67 673.8,208.67 674.3,208.67 674.8,208.67 675.3,208.67 675.8,208.67 676.3,208.67 676.8,208.67 677.3,208.67 677.8,208.67 678.3,208.67 678.8,208.67 679.3,208.67 679.8,208.67 680.3,208.67 680.8,208.67 681.3,208.67 681.8,208.67 682.3,208.67 682.8,208.67 683.3,208.67 683.8,208.67 684.3,208.67 684.8,208.67 685.3,208.67 685.8,208.67 686.3,208.67 686.8,208.67 687.3,208.67 687.8,208.67 688.3,208.67 688.8,208.67 689.3,208.67 689.8,208.67 690.3,208.67 690.8,208.67 691.3,208.67 691.8,208.67 692.3,208.67 692.8,208.67 693.3,208.67 693.8,208.67 694.3,208.67 694.8,208.67 695.3,208.67 695.8,208.67 696.3,208.67 696.8,208.67 697.3,208.67 697.8,208.67 698.3,208.67 698.8,208.67 699.3,208.67 699.8,208.67 700.3,208.67 700.8,208.67 701.3,208.67 701.8,208.67 702.3,208.67 702.8,208.67 703.3,208.67 703.8,208.67 704.3,208.67 704.8,208.67 705.3,208.67 705.8,208.67 706.3,208.67 706.8,208.67 707.3,208.67 707.8,208.67 708.3,208.67 708.8,208.67 709.3,208.67 709.8,208.67 710.3,208.67 710.8,208.67 711.3,208.67 711.8,208.67 712.3,208.67 712.8,208.67 713.3,208.67 713.8,208.67 714.3,208.67 714.8,208.67 715.3,208.67 715.8,208.67 716.3,208.67 716.8,208.67 717.3,208.67 717.8,208.67 718.3,208.67 718.8,208.67 719.3,208.67 719.8,208.67 720.3,208.67 720.8,208.67 721.3,208.67 721.8,208.67 722.3,208.67 722.8,208.67 723.3,208.67 723.8,208.67 724.3,208.67 724.8,208.67 725.3,208.67 725.8,208.67 726.3,208.67 726.8,208.67 727.3,208.67 727.8,208.67 728.3,208.67 728.8,208.67 729.3,208.67 729.8,208.67 730.3,208.67 730.8,208.67 731.3,208.67 731.8,208.67 732.3,208.67 732.8,208.67 733.3,208.67 733.8,208.67 734.3,208.67 734.8,208.67 735.3,208.67 735.8,208.67 736.3,208.67 736.8,208.67 737.3,208.67 737.8,208.67 738.3,208.67 738.8,208.67 739.3,208.67 739.8,208.67 740.3,208.67 740.8,208.67 741.3,208.67 741.8,208.67 742.3,208.67 742.8,208.67 743.3,208.67 743.8,208.67 744.3,208.67 744.8,208.67 745.3,208.67 745.8,208.67 746.3,208.67 746.8,208.67 747.3,208.67 747.8,208.67 748.3,208.67 748.8,208.67 749.3,208.67 749.8,208.67 750.3,208.67 750.8,208.67 751.3,208.67 751.8,208.67 752.3,209.66 752.8,209.66 753.3,209.66 753.8,209.66 754.3,209.66 754.8,209.66 755.3,209.66 755.8,209.66 756.3,209.66 756.8,209.66 757.3,209.66 757.8,209.66 758.3,209.66 758.8,209.66 759.3,209.66 759.8,209.66 760.3,209.66 760.8,209.66 761.3,209.66 761.8,209.66 762.3,209.66 762.8,209.66 763.3,209.66 763.8,209.66 764.3,209.66 764.8,209.66 765.3,209.66 765.8,209.66 766.3,209.66 766.8,209.66 767.3,209.66 767.8,209.66 768.3,209.66 768.8,209.66 769.3,209.66 769.8,209.66 770.3,209.66 770.8,209.66 771.3,209.66 771.8,209.66 772.3,209.66 772.8,209.66 773.3,209.66 773.8,209.66 774.3,209.66 774.8,209.66 775.3,209.66 775.8,209.66 776.3,209.66 776.8,209.66 777.3,209.66 777.8,209.66 778.3,209.66 778.8,209.66 779.3,209.66 779.8,209.66 780.3,209.66 780.8,209.66 781.3,209.66 781.8,209.66 782.3,209.66 782.8,209.66 783.3,209.66 783.8,209.66 784.3,209.66 784.8,209.66 785.3,209.66 785.8,209.66 786.3,209.66 786.8,209.66 787.3,209.66 787.8,209.66 788.3,209.66 788.8,209.66 789.3,209.66 789.8,209.66 790.3,209.66 790.8,209.66 791.3,209.66 791.8,209.66 792.3,209.66 792.8,209.66 793.3,209.66 793.8,209.66 794.3,209.66 794.8,209.66 795.3,209.66 795.8,209.66 796.3,209.66 796.8,209.66 797.3,209.66 797.8,209.66 798.3,209.66 798.8,209.66 799.3,209.66 799.8,209.66 800.3,208.67 800.8,208.67 801.3,208.67 801.8,208.67 802.3,208.67 802.8,208.67 803.3,208.67 803.8,208.67 804.3,208.67 804.8,208.67 805.3,208.67 805.8,208.67 806.3,208.67 806.8,208.67 807.3,208.67 807.8,208.67 808.3,208.67 808.8,208.67 809.3,208.67 809.8,208.67 810.3,208.67 810.8,208.67 811.3,208.67 811.8,208.67 812.3,208.67 812.8,208.67 813.3,208.67 813.8,208.67 814.3,208.67 814.8,208.67 815.3,208.67 815.8,208.67 816.3,208.67 816.8,208.67 817.3,208.67 817.8,208.67 818.3,208.67 818.8,208.67 819.3,208.67 819.8,208.67 820.3,208.67 820.8,208.67 821.3,208.67 821.8,208.67 822.3,208.67 822.8,208.67 823.3,208.67 823.8,208.67 824.3,208.67 824.8,208.67 825.3,208.67 825.8,208.67 826.3,208.67 826.8,208.67 827.3,208.67 827.8,208.67 828.3,208.67 828.8,208.67 829.3,208.67 829.8,208.67 830.3,208.67 830.8,208.67 831.3,208.67 831.8,208.67 832.3,208.67 832.8,208.67 833.3,208.67 833.8,208.67 834.3,208.67 834.8,208.67 835.3,208.67 835.8,208.67 836.3,208.67 836.8,208.67 837.3,208.67 837.8,208.67 838.3,208.67 838.8,208.67 839.3,208.67 839.8,208.67 840.3,208.67 840.8,208.67 841.3,208.67 841.8,208.67 842.3,208.67 842.8,208.67 843.3,208.67 843.8,208.67 844.3,208.67 844.8,208.67 845.3,208.67 845.8,208.67 846.3,208.67 846.8,209.91 847.3,209.91 847.8,209.91 848.3,209.91 848.8,209.91 849.3,209.91 849.8,209.91 850.3,209.91 850.8,209.91 851.3,209.91 851.8,209.91 852.3,209.91 852.8,209.91 853.3,209.91 853.8,209.91 854.3,209.91 854.8,209.91 855.3,209.91 855.8,209.91 856.3,209.91 856.8,209.91 857.3,209.91 857.8,209.91 858.3,209.91 858.8,209.91 859.3,209.91 859.8,209.91 860.3,209.91 860.8,209.91 861.3,209.91 861.8,209.91 862.3,209.91 862.8,209.91 863.3,209.91 863.8,209.91 864.3,209.91 864.8,208.67 865.3,208.67 865.8,208.67 866.3,208.67 866.8,208.67 867.3,208.67 867.8,208.67 868.3,208.67 868.8,208.67 869.3,208.67 869.8,208.67 870.3,208.67 870.8,208.67 871.3,208.67 871.8,208.67 872.3,208.67 872.8,208.67 873.3,208.67 873.8,208.67 874.3,208.67 874.8,208.67 875.3,208.67 875.8,208.67 876.3,208.67 876.8,208.67 877.3,208.67 877.8,208.67 878.3,208.67 878.8,208.67 879.3,208.67 879.8,208.67 880.3,208.67 880.8,208.67 881.3,208.67 881.8,208.67 882.3,208.67 882.8,208.67 883.3,208.67 883.8,208.67 884.3,208.67 884.8,208.67 885.3,208.67 885.8,208.67 886.3,208.67 886.8,208.67 887.3,208.67 887.8,208.67 888.3,208.67 888.8,208.67 889.3,208.67 889.8,208.67 890.3,208.67 890.8,208.67 891.3,208.67 891.8,208.67 892.3,208.67 892.8,208.67 893.3,208.67 893.8,208.67 894.3,208.67 894.8,208.67 895.3,208.67 895.8,208.67 896.3,208.67 896.8,208.67 897.3,208.67 897.8,208.67 898.3,208.67 898.8,208.67 899.3,208.67 899.8,208.67 900.3,208.67 900.8,208.67 901.3,208.67 901.8,208.67 902.3,208.67 902.8,208.67 903.3,208.67 903.8,208.67 904.3,208.67 904.8,209.25 905.3,209.54 905.8,209.54 906.3,209.54 906.8,209.54 907.3,209.54 907.8,209.54 908.3,209.54 908.8,209.54 909.3,209.54 909.8,209.54 910.3,209.54 910.8,209.54 911.3,209.54 911.8,209.54 912.3,209.54 912.8,209.54 913.3,209.54 913.8,209.54 914.3,209.54 914.8,209.54 915.3,209.54 915.8,209.54 916.3,209.54 916.8,209.54 917.3,209.54 917.8,209.54 918.3,209.54 918.8,209.54 919.3,209.54 919.8,209.54 920.3,209.54 920.8,209.54 921.3,209.54 921.8,209.54 922.3,209.54 922.8,209.54 923.3,209.54 923.8,209.54 924.3,209.54 924.8,209.54 925.3,209.54 925.8,209.54 926.3,209.54 926.8,209.54 927.3,209.54 927.8,209.54 928.3,209.54 928.8,209.54 929.3,209.54 929.8,209.54 930.3,209.54 930.8,209.54 931.3,209.54 931.8,209.54 932.3,209.54 932.8,209.54 933.3,209.54 933.8,209.54 934.3,209.54 934.8,209.54 935.3,209.54 935.8,209.54 936.3,209.54 936.8,209.54 937.3,209.54 937.8,209.54 938.3,209.54 938.8,209.54 939.3,209.54 939.8,209.54 940.3,209.54 940.8,209.54 941.3,209.54 941.8,209.54 942.3,209.54 942.8,209.54 943.3,209.54 943.8,209.54 944.3,209.54 944.8,209.54 945.3,209.54 945.8,209.54 946.3,209.54 946.8,209.54 947.3,209.54 947.8,210.36 948.3,210.78 948.8,210.80 949.3,210.82 949.8,210.84 950.3,210.86 950.8,210.88 951.3,210.90 951.8,210.92 952.3,210.94 952.8,210.96 953.3,210.98 953.8,210.99 954.3,211.01 954.8,211.03 955.3,211.05 955.8,211.07 956.3,211.09 956.8,211.11 957.3,211.13 957.8,211.15 958.3,211.17 958.8,211.19 959.3,211.21 959.8,211.23 960.3,211.25 960.8,211.27 961.3,211.29 961.8,211.31 962.3,211.33 962.8,211.35 963.3,211.37 963.8,211.39 964.3,211.41 964.8,211.43 965.3,211.44 965.8,211.46 966.3,211.48 966.8,211.50 967.3,211.52 967.8,211.54 968.3,211.56 968.8,211.58 969.3,211.60 969.8,211.62 970.3,211.64 970.8,211.66 971.3,211.68 971.8,211.70 972.3,211.72 972.8,211.74 973.3,211.76 973.8,211.82 974.3,211.88 974.8,211.93 975.3,211.99 975.8,212.04 976.3,212.10 976.8,212.15 977.3,212.21 977.8,212.26 978.3,212.32 978.8,212.37 979.3,212.43 979.8,212.48 980.3,212.54 980.8,212.59 981.3,212.65 981.8,212.70 982.3,212.76 982.8,212.81 983.3,212.87 983.8,212.92 984.3,212.98 984.8,213.03 985.3,213.09 985.8,213.14 986.3,213.20 986.8,213.26 987.3,213.31 987.8,213.37 988.3,213.42 988.8,213.48 989.3,213.53 989.8,213.59 990.3,213.64 990.8,213.70 991.3,213.75 991.8,213.81 992.3,213.86 992.8,213.92 993.3,213.97 993.8,214.03 994.3,214.08 994.8,214.15 995.3,214.21 995.8,214.27 996.3,214.34 996.8,214.40 997.3,214.46 997.8,214.53 998.3,214.59 998.8,214.66 999.3,214.72 999.8,214.78 1000.3,214.85 1000.8,214.91 1001.3,214.98 1001.8,215.04 1002.3,215.10 1002.8,215.17 1003.3,215.23 1003.8,215.29 1004.3,215.36 1004.8,215.42 1005.3,215.49 1005.8,215.55 1006.3,215.61 1006.8,215.68 1007.3,215.74 1007.8,215.81 1008.3,215.87 1008.8,215.93 1009.3,216.00 1009.8,216.06 1010.3,216.12 1010.8,216.19 1011.3,216.25 1011.8,216.32 1012.3,216.38 1012.8,216.44 1013.3,216.51 1013.8,216.56 1014.3,216.59 1014.8,216.62 1015.3,216.65 1015.8,216.68 1016.3,216.71 1016.8,216.74 1017.3,216.77 1017.8,216.80 1018.3,216.83 1018.8,216.86 1019.3,216.89 1019.8,216.91 1020.3,216.94 1020.8,216.97 1021.3,217.00 1021.8,217.03 1022.3,217.06 1022.8,217.09 1023.3,217.12 1023.8,217.15 1024.3,217.18 1024.8,217.21 1025.3,217.24 1025.8,217.26 1026.3,217.29 1026.8,217.32 1027.3,217.35 1027.8,217.38 1028.3,217.41 1028.8,217.44 1029.3,217.47 1029.8,217.50 1030.3,217.53 1030.8,217.56 1031.3,217.59 1031.8,217.62 1032.3,217.64 1032.8,217.67 1033.3,217.70 1033.8,217.73 1034.3,217.76 1034.8,217.79 1035.3,217.84 1035.8,217.88 1036.3,217.93 1036.8,217.97 1037.3,218.01 1037.8,218.06 1038.3,218.10 1038.8,218.15 1039.3,218.19 1039.8,218.24 1040.3,218.28 1040.8,218.33 1041.3,218.37 1041.8,218.42 1042.3,218.46 1042.8,218.51 1043.3,218.55 1043.8,218.60 1044.3,218.64 1044.8,218.69 1045.3,218.73 1045.8,218.78 1046.3,218.82 1046.8,218.87 1047.3,218.91 1047.8,218.96 1048.3,219.00 1048.8,219.05 1049.3,219.09 1049.8,219.14 1050.3,219.18 1050.8,219.23 1051.3,219.27 1051.8,219.32 1052.3,219.36 1052.8,219.41 1053.3,219.45 1053.8,219.50 1053.8,258.2" fill="#4343DA" />
<polygon points="228.8,258.2 228.8,233.18 229.3,233.55 229.8,232.33 230.3,232.40 230.8,231.32 231.3,231.28 231.8,232.31 232.3,231.14 232.8,232.32 233.3,234.89 233.8,235.52 234.3,233.46 234.8,232.98 235.3,233.06 235.8,231.04 236.3,231.93 236.8,231.36 237.3,233.04 237.8,232.90 238.3,232.77 238.8,231.62 239.3,233.20 239.8,233.59 240.3,230.96 240.8,231.59 241.3,233.83 241.8,234.02 242.3,233.75 242.8,230.93 243.3,231.58 243.8,230.34 244.3,231.33 244.8,230.96 245.3,231.25 245.8,232.76 246.3,234.14 246.8,233.29 247.3,231.97 247.8,230.66 248.3,232.16 248.8,231.37 249.3,232.41 249.8,231.59 250.3,231.60 250.8,233.82 251.3,231.63 251.8,230.54 252.3,230.33 252.8,230.71 253.3,232.44 253.8,233.39 254.3,232.68 254.8,230.96 255.3,231.50 255.8,232.94 256.3,235.80 256.8,234.97 257.3,232.20 257.8,230.80 258.3,231.40 258.8,232.22 259.3,233.59 259.8,233.05 260.3,231.98 260.8,232.74 261.3,232.65 261.8,234.25 262.3,232.90 262.8,233.40 263.3,235.03 263.8,231.83 264.3,231.82 264.8,234.43 265.3,232.39 265.8,231.19 266.3,232.16 266.8,231.99 267.3,234.45 267.8,235.12 268.3,233.78 268.8,231.87 269.3,232.77 269.8,231.66 270.3,233.77 270.8,232.80 271.3,232.31 271.8,231.48 272.3,232.04 272.8,232.33 273.3,234.23 273.8,237.67 274.3,233.33 274.8,232.44 275.3,232.56 275.8,233.86 276.3,234.22 276.8,235.08 277.3,232.37 277.8,233.10 278.3,231.59 278.8,234.57 279.3,234.48 279.8,234.79 280.3,233.06 280.8,231.58 281.3,235.64 281.8,235.97 282.3,236.88 282.8,238.84 283.3,238.35 283.8,232.52 284.3,234.95 284.8,232.93 285.3,231.92 285.8,232.80 286.3,233.99 286.8,232.54 287.3,231.45 287.8,233.72 288.3,231.71 288.8,231.54 289.3,232.29 289.8,232.42 290.3,230.23 290.8,233.15 291.3,231.17 291.8,236.31 292.3,233.76 292.8,236.20 293.3,234.99 293.8,232.54 294.3,231.61 294.8,233.16 295.3,238.52 295.8,240.47 296.3,240.75 296.8,236.69 297.3,238.11 297.8,230.65 298.3,232.55 298.8,236.12 299.3,235.04 299.8,238.67 300.3,236.04 300.8,238.57 301.3,235.59 301.8,237.23 302.3,234.28 302.8,232.68 303.3,237.01 303.8,238.02 304.3,236.32 304.8,229.15 305.3,226.95 305.8,231.25 306.3,234.28 306.8,231.58 307.3,232.71 307.8,233.10 308.3,228.79 308.8,227.25 309.3,230.24 309.8,230.37 310.3,228.94 310.8,236.86 311.3,229.84 311.8,226.47 312.3,228.03 312.8,230.74 313.3,228.30 313.8,231.85 314.3,233.29 314.8,232.83 315.3,235.87 315.8,235.38 316.3,231.10 316.8,230.32 317.3,232.65 317.8,229.11 318.3,231.95 318.8,231.68 319.3,229.67 319.8,227.74 320.3,228.85 320.8,226.49 321.3,227.31 321.8,228.73 322.3,227.52 322.8,231.21 323.3,230.14 323.8,230.32 324.3,234.85 324.8,232.55 325.3,227.01 325.8,230.12 326.3,227.71 326.8,233.43 327.3,233.37 327.8,233.64 328.3,234.47 328.8,229.39 329.3,231.61 329.8,230.35 330.3,233.17 330.8,229.94 331.3,229.76 331.8,229.56 332.3,227.76 332.8,230.25 333.3,227.80 333.8,227.41 334.3,231.82 334.8,231.49 335.3,229.21 335.8,232.36 336.3,233.42 336.8,228.35 337.3,227.63 337.8,231.17 338.3,228.63 338.8,228.49 339.3,227.74 339.8,226.18 340.3,231.90 340.8,232.65 341.3,232.18 341.8,227.56 342.3,225.74 342.8,228.08 343.3,231.90 343.8,229.41 344.3,232.43 344.8,233.52 345.3,230.21 345.8,225.49 346.3,225.22 346.8,223.78 347.3,228.06 347.8,231.69 348.3,230.92 348.8,232.71 349.3,229.15 349.8,226.15 350.3,224.39 350.8,222.36 351.3,227.54 351.8,230.50 352.3,224.90 352.8,230.68 353.3,231.63 353.8,232.51 354.3,225.46 354.8,223.46 355.3,231.83 355.8,230.64 356.3,235.99 356.8,229.03 357.3,233.62 357.8,231.54 358.3,227.55 358.8,226.71 359.3,225.13 359.8,233.46 360.3,233.61 360.8,233.10 361.3,229.53 361.8,221.73 362.3,218.52 362.8,220.48 363.3,230.54 363.8,231.73 364.3,230.31 364.8,225.68 365.3,222.45 365.8,228.08 366.3,234.12 366.8,226.44 367.3,226.04 367.8,229.32 368.3,228.66 368.8,232.25 369.3,231.52 369.8,227.82 370.3,230.33 370.8,232.17 371.3,232.98 371.8,222.97 372.3,224.41 372.8,221.00 373.3,224.56 373.8,230.37 374.3,230.88 374.8,228.69 375.3,226.43 375.8,227.01 376.3,224.18 376.8,220.56 377.3,229.10 377.8,230.00 378.3,222.96 378.8,222.61 379.3,229.46 379.8,232.19 380.3,228.53 380.8,224.11 381.3,228.12 381.8,226.18 382.3,224.90 382.8,219.33 383.3,222.49 383.8,226.40 384.3,227.64 384.8,229.49 385.3,223.28 385.8,230.42 386.3,232.97 386.8,229.39 387.3,223.98 387.8,226.63 388.3,232.33 388.8,225.42 389.3,220.93 389.8,222.43 390.3,230.95 390.8,233.25 391.3,230.41 391.8,229.47 392.3,218.60 392.8,222.04 393.3,227.29 393.8,220.77 394.3,224.54 394.8,232.05 395.3,231.01 395.8,228.02 396.3,218.45 396.8,222.44 397.3,228.19 397.8,221.14 398.3,224.51 398.8,217.18 399.3,224.72 399.8,231.98 400.3,227.58 400.8,222.75 401.3,224.60 401.8,224.03 402.3,231.59 402.8,233.56 403.3,232.48 403.8,226.22 404.3,228.73 404.8,219.91 405.3,220.54 405.8,230.91 406.3,231.50 406.8,223.61 407.3,220.13 407.8,218.72 408.3,230.25 408.8,235.13 409.3,224.13 409.8,222.39 410.3,218.10 410.8,230.88 411.3,235.89 411.8,233.65 412.3,221.19 412.8,228.16 413.3,232.30 413.8,231.34 414.3,224.85 414.8,226.31 415.3,221.26 415.8,224.16 416.3,230.16 416.8,225.65 417.3,226.70 417.8,223.93 418.3,229.42 418.8,229.91 419.3,231.43 419.8,231.54 420.3,227.66 420.8,223.24 421.3,224.49 421.8,229.83 422.3,227.95 422.8,227.10 423.3,228.61 423.8,223.99 424.3,227.89 424.8,230.25 425.3,224.32 425.8,229.69 426.3,227.63 426.8,222.06 427.3,229.54 427.8,225.06 428.3,223.93 428.8,229.23 429.3,231.50 429.8,229.15 430.3,230.57 430.8,230.06 431.3,232.51 431.8,227.91 432.3,220.20 432.8,232.86 433.3,227.70 433.8,226.75 434.3,218.20 434.8,219.51 435.3,227.74 435.8,229.89 436.3,216.25 436.8,215.21 437.3,218.65 437.8,232.73 438.3,230.36 438.8,228.51 439.3,231.54 439.8,232.96 440.3,232.36 440.8,231.98 441.3,215.89 441.8,214.35 442.3,222.02 442.8,222.33 443.3,214.66 443.8,223.04 444.3,222.89 444.8,232.80 445.3,230.13 445.8,232.24 446.3,231.97 446.8,219.18 447.3,219.76 447.8,228.31 448.3,230.57 448.8,221.41 449.3,225.57 449.8,219.68 450.3,221.05 450.8,220.00 451.3,220.53 451.8,216.41 452.3,227.81 452.8,218.84 453.3,221.45 453.8,219.67 454.3,216.81 454.8,233.09 455.3,230.73 455.8,220.57 456.3,219.22 456.8,228.12 457.3,224.85 457.8,215.16 458.3,210.29 458.8,213.75 459.3,227.71 459.8,227.17 460.3,225.41 460.8,222.75 461.3,216.75 461.8,223.14 462.3,226.37 462.8,220.97 463.3,217.26 463.8,218.97 464.3,212.62 464.8,210.92 465.3,215.64 465.8,217.64 466.3,230.34 466.8,227.18 467.3,232.68 467.8,230.19 468.3,222.58 468.8,219.25 469.3,215.40 469.8,216.92 470.3,225.93 470.8,223.44 471.3,218.85 471.8,224.61 472.3,218.97 472.8,228.68 473.3,228.08 473.8,230.76 474.3,227.19 474.8,215.72 475.3,212.59 475.8,223.20 476.3,226.96 476.8,224.89 477.3,218.44 477.8,225.01 478.3,219.68 478.8,225.05 479.3,226.21 479.8,218.43 480.3,226.29 480.8,217.38 481.3,222.98 481.8,213.51 482.3,216.53 482.8,216.76 483.3,220.60 483.8,213.41 484.3,218.55 484.8,226.60 485.3,232.18 485.8,229.83 486.3,216.43 486.8,215.82 487.3,230.59 487.8,227.85 488.3,226.90 488.8,231.13 489.3,231.26 489.8,217.70 490.3,214.12 490.8,215.92 491.3,225.01 491.8,215.18 492.3,211.01 492.8,217.07 493.3,226.71 493.8,227.48 494.3,223.50 494.8,216.00 495.3,223.30 495.8,227.63 496.3,232.12 496.8,230.63 497.3,231.17 497.8,227.65 498.3,228.10 498.8,233.74 499.3,233.95 499.8,226.10 500.3,229.13 500.8,222.73 501.3,221.19 501.8,217.97 502.3,226.11 502.8,214.25 503.3,215.49 503.8,224.62 504.3,228.94 504.8,230.09 505.3,225.74 505.8,229.79 506.3,229.11 506.8,230.91 507.3,222.51 507.8,221.00 508.3,218.99 508.8,216.44 509.3,222.53 509.8,226.99 510.3,228.16 510.8,224.26 511.3,224.39 511.8,225.15 512.3,227.74 512.8,227.36 513.3,216.79 513.8,211.75 514.3,217.60 514.8,221.89 515.3,228.19 515.8,223.95 516.3,212.96 516.8,214.38 517.3,227.83 517.8,220.15 518.3,225.74 518.8,217.44 519.3,226.00 519.8,217.85 520.3,215.58 520.8,231.33 521.3,232.74 521.8,226.00 522.3,223.98 522.8,216.72 523.3,228.85 523.8,232.54 524.3,219.01 524.8,221.30 525.3,223.77 525.8,220.47 526.3,216.84 526.8,228.90 527.3,228.88 527.8,215.62 528.3,225.01 528.8,232.75 529.3,221.75 529.8,224.76 530.3,232.77 530.8,228.53 531.3,221.77 531.8,215.82 532.3,219.28 532.8,220.31 533.3,219.63 533.8,224.33 534.3,217.71 534.8,220.70 535.3,230.21 535.8,220.15 536.3,213.00 536.8,213.64 537.3,226.34 537.8,232.81 538.3,228.39 538.8,233.98 539.3,225.42 539.8,219.54 540.3,221.40 540.8,219.37 541.3,218.70 541.8,225.39 542.3,228.97 542.8,220.76 543.3,223.98 543.8,222.92 544.3,226.55 544.8,218.48 545.3,226.87 545.8,224.60 546.3,223.34 546.8,224.19 547.3,221.07 547.8,231.47 548.3,235.19 548.8,233.81 549.3,228.47 549.8,224.19 550.3,232.30 550.8,229.18 551.3,225.80 551.8,230.88 552.3,224.08 552.8,223.70 553.3,228.78 553.8,216.29 554.3,211.17 554.8,215.54 555.3,230.28 555.8,230.62 556.3,225.40 556.8,222.20 557.3,234.21 557.8,232.63 558.3,226.60 558.8,232.67 559.3,231.71 559.8,216.45 560.3,221.96 560.8,225.11 561.3,234.24 561.8,233.14 562.3,233.53 562.8,232.30 563.3,232.41 563.8,230.99 564.3,223.40 564.8,227.85 565.3,221.82 565.8,233.48 566.3,232.85 566.8,232.49 567.3,230.92 567.8,227.84 568.3,229.77 568.8,233.43 569.3,232.56 569.8,226.56 570.3,231.21 570.8,225.74 571.3,229.19 571.8,233.08 572.3,225.24 572.8,227.81 573.3,229.95 573.8,238.05 574.3,233.35 574.8,230.39 575.3,231.29 575.8,231.98 576.3,232.67 576.8,229.13 577.3,222.85 577.8,228.61 578.3,236.03 578.8,238.89 579.3,236.62 579.8,236.68 580.3,237.07 580.8,234.38 581.3,233.40 581.8,229.34 582.3,223.45 582.8,231.71 583.3,229.65 583.8,236.18 584.3,236.02 584.8,223.08 585.3,223.12 585.8,224.72 586.3,220.83 586.8,216.26 587.3,215.51 587.8,221.80 588.3,221.04 588.8,235.39 589.3,235.10 589.8,237.62 590.3,237.80 590.8,235.53 591.3,234.46 591.8,230.62 592.3,234.61 592.8,237.14 593.3,234.64 593.8,234.81 594.3,226.40 594.8,224.21 595.3,214.40 595.8,215.18 596.3,230.71 596.8,236.21 597.3,233.50 597.8,235.46 598.3,231.98 598.8,224.95 599.3,226.39 599.8,233.51 600.3,236.78 600.8,237.54 601.3,224.82 601.8,221.08 602.3,226.90 602.8,226.03 603.3,234.59 603.8,230.55 604.3,232.97 604.8,225.65 605.3,231.78 605.8,232.24 606.3,233.31 606.8,230.94 607.3,218.71 607.8,216.93 608.3,230.23 608.8,221.18 609.3,215.62 609.8,225.60 610.3,224.38 610.8,218.90 611.3,221.86 611.8,222.42 612.3,215.87 612.8,219.14 613.3,214.92 613.8,213.39 614.3,220.16 614.8,216.62 615.3,223.33 615.8,220.10 616.3,216.56 616.8,214.71 617.3,220.33 617.8,212.45 618.3,213.08 618.8,213.32 619.3,221.85 619.8,219.48 620.3,217.97 620.8,211.32 621.3,213.55 621.8,220.22 622.3,213.55 622.8,217.84 623.3,218.71 623.8,222.29 624.3,216.52 624.8,211.99 625.3,217.26 625.8,222.22 626.3,214.00 626.8,217.66 627.3,222.58 627.8,216.99 628.3,221.50 628.8,217.69 629.3,219.49 629.8,221.88 630.3,219.83 630.8,220.47 631.3,217.92 631.8,216.33 632.3,218.57 632.8,224.35 633.3,216.94 633.8,210.89 634.3,212.20 634.8,217.22 635.3,215.41 635.8,221.30 636.3,216.89 636.8,223.48 637.3,224.94 637.8,217.20 638.3,219.26 638.8,219.31 639.3,226.41 639.8,226.19 640.3,225.48 640.8,215.21 641.3,223.06 641.8,215.33 642.3,225.70 642.8,224.00 643.3,215.58 643.8,216.56 644.3,225.08 644.8,223.38 645.3,225.45 645.8,222.73 646.3,221.25 646.8,217.61 647.3,216.15 647.8,224.63 648.3,215.93 648.8,212.29 649.3,218.99 649.8,216.78 650.3,219.53 650.8,222.02 651.3,220.41 651.8,225.43 652.3,217.25 652.8,218.23 653.3,224.00 653.8,225.81 654.3,213.26 654.8,216.15 655.3,223.96 655.8,216.53 656.3,223.19 656.8,220.68 657.3,221.65 657.8,212.54 658.3,213.51 658.8,214.32 659.3,218.16 659.8,219.86 660.3,220.86 660.8,213.60 661.3,218.68 661.8,216.23 662.3,220.53 662.8,224.19 663.3,224.83 663.8,221.49 664.3,221.13 664.8,213.14 665.3,214.85 665.8,220.90 666.3,222.86 666.8,216.63 667.3,213.01 667.8,218.30 668.3,216.85 668.8,218.45 669.3,212.55 669.8,220.04 670.3,221.98 670.8,217.45 671.3,219.34 671.8,212.64 672.3,212.38 672.8,212.66 673.3,211.07 673.8,216.97 674.3,222.89 674.8,220.16 675.3,220.35 675.8,220.80 676.3,218.92 676.8,223.50 677.3,224.06 677.8,217.99 678.3,219.68 678.8,214.40 679.3,221.55 679.8,222.39 680.3,215.33 680.8,211.89 681.3,211.45 681.8,211.54 682.3,216.01 682.8,220.25 683.3,221.25 683.8,212.04 684.3,212.99 684.8,210.46 685.3,211.20 685.8,213.24 686.3,214.10 686.8,219.57 687.3,212.12 687.8,211.84 688.3,216.83 688.8,218.42 689.3,217.36 689.8,217.19 690.3,220.03 690.8,212.67 691.3,218.60 691.8,223.44 692.3,217.67 692.8,219.73 693.3,210.77 693.8,209.96 694.3,213.70 694.8,220.97 695.3,214.57 695.8,219.74 696.3,216.95 696.8,220.06 697.3,214.25 697.8,213.79 698.3,218.12 698.8,218.58 699.3,211.83 699.8,211.17 700.3,217.09 700.8,211.15 701.3,214.00 701.8,217.57 702.3,217.70 702.8,222.16 703.3,217.33 703.8,215.51 704.3,217.47 704.8,222.23 705.3,214.72 705.8,216.51 706.3,219.22 706.8,212.81 707.3,214.90 707.8,221.97 708.3,217.11 708.8,212.78 709.3,213.81 709.8,215.99 710.3,212.91 710.8,216.13 711.3,221.04 711.8,219.84 712.3,212.75 712.8,216.90 713.3,215.50 713.8,218.28 714.3,218.49 714.8,219.32 715.3,224.72 715.8,226.52 716.3,222.33 716.8,214.79 717.3,217.75 717.8,216.26 718.3,214.08 718.8,213.81 719.3,210.72 719.8,210.72 720.3,211.01 720.8,214.21 721.3,209.84 721.8,209.52 722.3,211.52 722.8,212.00 723.3,215.83 723.8,211.56 724.3,216.09 724.8,213.59 725.3,218.88 725.8,213.30 726.3,214.16 726.8,216.50 727.3,217.72 727.8,215.99 728.3,217.11 728.8,215.18 729.3,210.74 729.8,213.80 730.3,211.46 730.8,213.20 731.3,210.87 731.8,211.18 732.3,210.57 732.8,211.60 733.3,212.28 733.8,210.72 734.3,211.84 734.8,211.18 735.3,212.72 735.8,215.61 736.3,218.15 736.8,216.50 737.3,212.45 737.8,216.39 738.3,215.47 738.8,210.30 739.3,212.18 739.8,215.41 740.3,213.60 740.8,216.63 741.3,220.34 741.8,213.39 742.3,218.43 742.8,212.04 743.3,214.80 743.8,214.55 744.3,214.98 744.8,214.66 745.3,212.24 745.8,215.04 746.3,210.80 746.8,212.91 747.3,212.83 747.8,219.84 748.3,221.48 748.8,218.47 749.3,212.64 749.8,215.11 750.3,212.22 750.8,213.33 751.3,217.38 751.8,216.28 752.3,218.38 752.8,216.36 753.3,218.04 753.8,214.57 754.3,215.43 754.8,215.08 755.3,216.13 755.8,215.74 756.3,217.55 756.8,217.38 757.3,212.08 757.8,215.12 758.3,219.06 758.8,216.52 759.3,213.10 759.8,214.45 760.3,215.41 760.8,214.52 761.3,212.67 761.8,211.83 762.3,217.82 762.8,212.86 763.3,215.63 763.8,215.66 764.3,217.14 764.8,217.16 765.3,216.72 765.8,213.69 766.3,214.83 766.8,213.97 767.3,220.04 767.8,222.15 768.3,219.26 768.8,218.53 769.3,217.81 769.8,215.53 770.3,212.97 770.8,210.79 771.3,210.35 771.8,212.25 772.3,211.58 772.8,213.67 773.3,212.35 773.8,211.29 774.3,212.98 774.8,214.92 775.3,212.24 775.8,211.60 776.3,210.43 776.8,211.60 777.3,214.18 777.8,218.09 778.3,220.86 778.8,217.60 779.3,214.24 779.8,217.23 780.3,214.35 780.8,217.51 781.3,218.07 781.8,213.29 782.3,216.64 782.8,212.42 783.3,213.42 783.8,216.18 784.3,216.67 784.8,214.67 785.3,216.34 785.8,214.27 786.3,214.75 786.8,219.96 787.3,217.69 787.8,214.20 788.3,217.41 788.8,213.20 789.3,211.91 789.8,211.46 790.3,211.73 790.8,214.72 791.3,212.50 791.8,219.88 792.3,221.19 792.8,216.78 793.3,220.73 793.8,217.56 794.3,217.90 794.8,214.99 795.3,216.97 795.8,217.89 796.3,214.04 796.8,211.88 797.3,218.23 797.8,221.35 798.3,218.26 798.8,211.86 799.3,213.27 799.8,220.25 800.3,219.04 800.8,214.30 801.3,219.25 801.8,217.70 802.3,220.32 802.8,219.67 803.3,217.51 803.8,215.87 804.3,212.42 804.8,214.51 805.3,211.33 805.8,214.92 806.3,216.87 806.8,218.98 807.3,216.96 807.8,211.37 808.3,215.75 808.8,221.76 809.3,221.87 809.8,215.75 810.3,215.56 810.8,215.89 811.3,215.96 811.8,222.66 812.3,224.18 812.8,221.36 813.3,219.74 813.8,214.07 814.3,211.82 814.8,214.22 815.3,212.39 815.8,212.66 816.3,216.49 816.8,215.21 817.3,211.95 817.8,210.16 818.3,212.52 818.8,219.02 819.3,223.63 819.8,220.77 820.3,217.13 820.8,218.22 821.3,214.04 821.8,217.62 822.3,217.35 822.8,216.31 823.3,211.56 823.8,216.16 824.3,214.00 824.8,210.65 825.3,212.63 825.8,213.32 826.3,213.23 826.8,218.76 827.3,221.90 827.8,222.51 828.3,223.84 828.8,221.96 829.3,212.67 829.8,210.33 830.3,212.86 830.8,220.82 831.3,222.91 831.8,215.40 832.3,215.75 832.8,216.23 833.3,217.75 833.8,215.52 834.3,214.18 834.8,217.33 835.3,218.95 835.8,220.46 836.3,225.06 836.8,221.53 837.3,220.47 837.8,220.58 838.3,215.03 838.8,213.48 839.3,216.58 839.8,213.93 840.3,215.30 840.8,217.22 841.3,218.07 841.8,217.09 842.3,211.99 842.8,211.22 843.3,210.64 843.8,213.42 844.3,217.77 844.8,225.01 845.3,223.90 845.8,216.15 846.3,222.08 846.8,221.77 847.3,214.53 847.8,219.17 848.3,223.67 848.8,223.16 849.3,222.02 849.8,220.10 850.3,222.75 850.8,219.50 851.3,220.95 851.8,223.54 852.3,220.55 852.8,219.03 853.3,222.56 853.8,223.55 854.3,221.61 854.8,213.16 855.3,214.18 855.8,220.51 856.3,216.20 856.8,213.85 857.3,215.60 857.8,217.16 858.3,221.62 858.8,216.89 859.3,221.11 859.8,214.88 860.3,221.48 860.8,222.68 861.3,220.69 861.8,221.26 862.3,223.23 862.8,221.61 863.3,214.71 863.8,220.70 864.3,223.49 864.8,222.71 865.3,222.27 865.8,225.48 866.3,220.62 866.8,220.59 867.3,217.52 867.8,224.99 868.3,226.54 868.8,220.62 869.3,214.62 869.8,223.46 870.3,218.16 870.8,218.79 871.3,216.80 871.8,220.05 872.3,216.29 872.8,220.67 873.3,225.66 873.8,226.62 874.3,223.17 874.8,227.37 875.3,226.40 875.8,218.19 876.3,226.63 876.8,223.54 877.3,228.34 877.8,227.81 878.3,222.28 878.8,224.79 879.3,225.32 879.8,225.99 880.3,216.47 880.8,219.63 881.3,226.49 881.8,226.29 882.3,225.62 882.8,219.00 883.3,220.90 883.8,224.28 884.3,222.18 884.8,219.78 885.3,225.71 885.8,225.63 886.3,225.13 886.8,224.94 887.3,228.32 887.8,227.94 888.3,228.66 888.8,229.19 889.3,228.02 889.8,227.58 890.3,224.47 890.8,227.16 891.3,218.97 891.8,213.75 892.3,215.63 892.8,224.81 893.3,224.06 893.8,217.57 894.3,223.67 894.8,224.47 895.3,224.62 895.8,221.52 896.3,220.24 896.8,227.30 897.3,228.20 897.8,227.90 898.3,218.81 898.8,226.17 899.3,229.68 899.8,230.13 900.3,229.72 900.8,228.89 901.3,225.03 901.8,228.55 902.3,226.19 902.8,222.08 903.3,226.42 903.8,227.73 904.3,226.65 904.8,229.24 905.3,228.82 905.8,228.28 906.3,227.29 906.8,226.94 907.3,227.62 907.8,227.43 908.3,223.15 908.8,219.90 909.3,220.73 909.8,223.54 910.3,227.20 910.8,226.07 911.3,224.50 911.8,223.15 912.3,224.62 912.8,223.20 913.3,220.47 913.8,224.71 914.3,226.93 914.8,218.57 915.3,218.43 915.8,224.70 916.3,224.21 916.8,228.32 917.3,226.26 917.8,224.02 918.3,217.31 918.8,224.54 919.3,229.69 919.8,227.60 920.3,221.19 920.8,229.11 921.3,226.94 921.8,228.31 922.3,227.38 922.8,218.48 923.3,220.46 923.8,226.88 924.3,225.21 924.8,226.92 925.3,225.86 925.8,226.31 926.3,223.28 926.8,226.36 927.3,226.65 927.8,226.81 928.3,222.16 928.8,221.82 929.3,222.05 929.8,217.54 930.3,224.05 930.8,228.09 931.3,228.34 931.8,227.64 932.3,226.94 932.8,226.23 933.3,225.44 933.8,224.50 934.3,223.86 934.8,224.09 935.3,222.59 935.8,224.48 936.3,216.66 936.8,223.23 937.3,226.87 937.8,226.67 938.3,226.54 938.8,224.59 939.3,227.21 939.8,222.62 940.3,223.30 940.8,221.80 941.3,227.04 941.8,223.48 942.3,227.98 942.8,226.51 943.3,227.71 943.8,223.48 944.3,227.11 944.8,226.48 945.3,227.37 945.8,226.04 946.3,227.11 946.8,228.54 947.3,229.34 947.8,224.57 948.3,229.27 948.8,230.86 949.3,225.51 949.8,223.59 950.3,220.75 950.8,220.15 951.3,217.48 951.8,219.87 952.3,222.28 952.8,220.27 953.3,220.38 953.8,226.03 954.3,226.25 954.8,226.02 955.3,225.45 955.8,227.40 956.3,227.13 956.8,227.27 957.3,227.15 957.8,226.63 958.3,222.11 958.8,225.82 959.3,226.23 959.8,226.46 960.3,226.84 960.8,226.94 961.3,223.09 961.8,226.75 962.3,226.61 962.8,226.36 963.3,222.70 963.8,223.89 964.3,226.50 964.8,229.33 965.3,230.31 965.8,231.57 966.3,232.50 966.8,230.64 967.3,226.61 967.8,229.38 968.3,228.70 968.8,226.70 969.3,227.17 969.8,226.73 970.3,222.60 970.8,224.50 971.3,217.95 971.8,219.64 972.3,224.69 972.8,223.27 973.3,223.38 973.8,223.16 974.3,222.51 974.8,222.53 975.3,222.22 975.8,222.34 976.3,222.13 976.8,221.62 977.3,221.93 977.8,222.22 978.3,221.88 978.8,221.46 979.3,222.74 979.8,223.66 980.3,225.21 980.8,224.24 981.3,227.19 981.8,227.60 982.3,227.41 982.8,223.85 983.3,224.29 983.8,228.77 984.3,227.98 984.8,226.41 985.3,226.20 985.8,224.85 986.3,224.23 986.8,224.46 987.3,224.22 987.8,224.18 988.3,224.95 988.8,225.22 989.3,222.31 989.8,223.37 990.3,224.31 990.8,224.03 991.3,222.02 991.8,217.74 992.3,221.63 992.8,224.94 993.3,225.42 993.8,225.25 994.3,225.66 994.8,224.08 995.3,225.45 995.8,225.30 996.3,225.25 996.8,225.89 997.3,226.47 997.8,226.83 998.3,225.09 998.8,225.96 999.3,222.44 999.8,225.78 1000.3,224.88 1000.8,223.24 1001.3,223.64 1001.8,224.23 1002.3,221.83 1002.8,220.11 1003.3,221.12 1003.8,225.94 1004.3,225.25 1004.8,224.29 1005.3,222.03 1005.8,224.83 1006.3,224.55 1006.8,221.66 1007.3,219.27 1007.8,220.99 1008.3,224.66 1008.8,223.95 1009.3,223.73 1009.8,221.66 1010.3,223.90 1010.8,225.43 1011.3,225.74 1011.8,219.99 1012.3,219.20 1012.8,222.07 1013.3,221.91 1013.8,222.59 1014.3,223.98 1014.8,224.32 1015.3,223.62 1015.8,224.28 1016.3,223.17 1016.8,223.15 1017.3,223.69 1017.8,224.43 1018.3,220.92 1018.8,219.80 1019.3,220.17 1019.8,223.46 1020.3,222.65 1020.8,221.25 1021.3,220.75 1021.8,222.46 1022.3,222.45 1022.8,219.48 1023.3,222.16 1023.8,219.66 1024.3,223.21 1024.8,225.11 1025.3,224.17 1025.8,221.62 1026.3,222.36 1026.8,220.34 1027.3,220.12 1027.8,220.74 1028.3,219.89 1028.8,221.14 1029.3,221.76 1029.8,220.43 1030.3,223.44 1030.8,224.60 1031.3,224.79 1031.8,223.28 1032.3,223.85 1032.8,222.86 1033.3,220.71 1033.8,222.00 1034.3,221.19 1034.8,220.15 1035.3,219.11 1035.8,221.70 1036.3,222.70 1036.8,220.50 1037.3,222.24 1037.8,220.84 1038.3,223.69 1038.8,224.34 1039.3,220.25 1039.8,221.01 1040.3,224.22 1040.8,223.36 1041.3,221.10 1041.8,223.14 1042.3,220.65 1042.8,223.06 1043.3,221.94 1043.8,222.70 1044.3,221.71 1044.8,223.20 1045.3,223.70 1045.8,222.06 1046.3,220.59 1046.8,220.95 1047.3,221.01 1047.8,221.07 1048.3,221.19 1048.8,222.59 1049.3,222.26 1049.8,224.32 1050.3,225.03 1050.8,224.62 1051.3,226.52 1051.8,224.87 1052.3,223.33 1052.8,223.95 1053.3,220.18 1053.8,221.66 1053.8,258.2" fill="#2DCB4A" />
<polygon points="228.8,258.2 228.8,241.77 229.3,242.67 229.8,240.73 230.3,238.91 230.8,237.93 231.3,236.67 231.8,236.64 232.3,236.99 232.8,239.17 233.3,238.11 233.8,242.96 234.3,239.57 234.8,237.48 235.3,238.94 235.8,236.89 236.3,236.04 236.8,238.70 237.3,237.36 237.8,238.42 238.3,237.61 238.8,237.36 239.3,237.31 239.8,238.08 240.3,237.00 240.8,236.11 241.3,237.26 241.8,237.31 242.3,236.96 242.8,235.95 243.3,236.13 243.8,237.16 244.3,236.42 244.8,237.66 245.3,237.54 245.8,237.64 246.3,237.60 246.8,238.73 247.3,237.97 247.8,236.47 248.3,237.34 248.8,236.11 249.3,235.55 249.8,235.32 250.3,236.35 250.8,236.78 251.3,236.44 251.8,236.37 252.3,237.45 252.8,236.51 253.3,236.06 253.8,247.12 254.3,241.36 254.8,237.28 255.3,236.83 255.8,238.43 256.3,237.80 256.8,237.52 257.3,236.78 257.8,237.15 258.3,236.17 258.8,234.74 259.3,234.29 259.8,234.81 260.3,237.59 260.8,236.93 261.3,247.58 261.8,241.83 262.3,237.52 262.8,237.19 263.3,237.21 263.8,238.79 264.3,238.09 264.8,239.05 265.3,237.76 265.8,244.35 266.3,240.21 266.8,237.58 267.3,236.73 267.8,236.35 268.3,237.30 268.8,237.61 269.3,236.52 269.8,236.40 270.3,244.21 270.8,246.92 271.3,245.54 271.8,241.69 272.3,239.30 272.8,239.92 273.3,241.94 273.8,242.59 274.3,244.87 274.8,242.02 275.3,240.90 275.8,240.39 276.3,238.65 276.8,239.92 277.3,239.78 277.8,249.77 278.3,243.94 278.8,238.82 279.3,238.62 279.8,238.81 280.3,241.12 280.8,240.13 281.3,239.38 281.8,241.30 282.3,240.72 282.8,240.51 283.3,240.76 283.8,242.32 284.3,241.09 284.8,239.70 285.3,245.81 285.8,241.22 286.3,237.73 286.8,238.62 287.3,239.02 287.8,240.62 288.3,241.64 288.8,242.65 289.3,242.14 289.8,240.73 290.3,239.82 290.8,241.79 291.3,239.52 291.8,239.11 292.3,238.42 292.8,238.11 293.3,238.39 293.8,248.89 294.3,243.80 294.8,239.38 295.3,240.73 295.8,241.80 296.3,242.65 296.8,241.85 297.3,241.16 297.8,241.00 298.3,241.22 298.8,241.07 299.3,240.95 299.8,240.78 300.3,244.86 300.8,243.10 301.3,242.42 301.8,241.30 302.3,240.72 302.8,240.23 303.3,239.72 303.8,239.16 304.3,238.26 304.8,243.56 305.3,240.08 305.8,237.91 306.3,236.27 306.8,236.55 307.3,237.08 307.8,236.19 308.3,236.52 308.8,235.34 309.3,236.07 309.8,238.09 310.3,239.45 310.8,242.25 311.3,243.41 311.8,243.22 312.3,241.38 312.8,248.54 313.3,250.62 313.8,244.30 314.3,238.25 314.8,237.88 315.3,238.72 315.8,237.78 316.3,236.49 316.8,237.54 317.3,236.05 317.8,234.75 318.3,243.16 318.8,241.93 319.3,238.29 319.8,236.36 320.3,236.62 320.8,236.31 321.3,249.75 321.8,243.33 322.3,237.63 322.8,246.79 323.3,242.52 323.8,239.70 324.3,238.61 324.8,237.79 325.3,237.62 325.8,237.17 326.3,238.15 326.8,237.42 327.3,237.10 327.8,249.45 328.3,243.27 328.8,237.96 329.3,239.35 329.8,246.26 330.3,241.84 330.8,239.41 331.3,238.50 331.8,238.06 332.3,239.67 332.8,239.89 333.3,251.65 333.8,245.23 334.3,239.09 334.8,238.32 335.3,237.51 335.8,237.10 336.3,238.01 336.8,244.40 337.3,249.68 337.8,242.90 338.3,237.82 338.8,236.93 339.3,240.33 339.8,238.34 340.3,236.96 340.8,239.23 341.3,238.01 341.8,239.59 342.3,238.04 342.8,237.15 343.3,237.14 343.8,239.59 344.3,238.37 344.8,237.58 345.3,238.03 345.8,241.95 346.3,240.21 346.8,238.85 347.3,237.97 347.8,238.31 348.3,238.63 348.8,237.33 349.3,242.93 349.8,238.90 350.3,235.97 350.8,234.91 351.3,235.05 351.8,236.57 352.3,237.01 352.8,237.45 353.3,237.21 353.8,237.52 354.3,238.99 354.8,239.54 355.3,239.98 355.8,241.19 356.3,240.81 356.8,240.18 357.3,240.52 357.8,239.54 358.3,237.41 358.8,236.05 359.3,236.46 359.8,238.68 360.3,238.58 360.8,238.26 361.3,238.00 361.8,237.35 362.3,236.63 362.8,237.89 363.3,236.81 363.8,235.66 364.3,237.95 364.8,237.40 365.3,239.21 365.8,238.46 366.3,238.38 366.8,239.77 367.3,238.72 367.8,238.21 368.3,238.36 368.8,239.77 369.3,240.03 369.8,239.07 370.3,242.82 370.8,240.62 371.3,239.66 371.8,239.11 372.3,236.91 372.8,235.10 373.3,233.94 373.8,243.32 374.3,237.11 374.8,231.66 375.3,230.85 375.8,229.88 376.3,229.77 376.8,230.61 377.3,231.58 377.8,234.82 378.3,234.47 378.8,235.08 379.3,235.07 379.8,234.60 380.3,236.50 380.8,236.54 381.3,235.33 381.8,234.61 382.3,233.77 382.8,233.05 383.3,234.78 383.8,234.78 384.3,234.05 384.8,235.53 385.3,236.11 385.8,235.62 386.3,235.88 386.8,236.20 387.3,236.92 387.8,245.04 388.3,239.78 388.8,235.05 389.3,239.94 389.8,237.40 390.3,235.56 390.8,235.38 391.3,235.57 391.8,235.21 392.3,235.36 392.8,235.69 393.3,236.04 393.8,235.21 394.3,235.75 394.8,236.45 395.3,235.25 395.8,233.92 396.3,233.01 396.8,233.31 397.3,246.24 397.8,240.11 398.3,234.47 398.8,234.58 399.3,234.67 399.8,234.62 400.3,233.72 400.8,242.97 401.3,237.52 401.8,244.48 402.3,239.13 402.8,241.58 403.3,238.13 403.8,236.21 404.3,235.77 404.8,234.99 405.3,235.13 405.8,234.51 406.3,233.89 406.8,236.07 407.3,236.72 407.8,241.75 408.3,239.57 408.8,238.55 409.3,239.39 409.8,249.19 410.3,242.86 410.8,237.10 411.3,236.47 411.8,244.97 412.3,239.45 412.8,234.92 413.3,235.09 413.8,233.32 414.3,233.69 414.8,234.94 415.3,234.75 415.8,236.12 416.3,237.04 416.8,235.85 417.3,235.86 417.8,234.69 418.3,234.88 418.8,234.51 419.3,233.95 419.8,243.05 420.3,238.19 420.8,234.25 421.3,233.84 421.8,233.59 422.3,233.35 422.8,233.56 423.3,234.10 423.8,238.23 424.3,235.38 424.8,242.36 425.3,237.64 425.8,234.37 426.3,234.18 426.8,244.43 427.3,238.67 427.8,234.07 428.3,234.42 428.8,233.57 429.3,234.10 429.8,235.07 430.3,238.19 430.8,236.54 431.3,236.78 431.8,236.64 432.3,237.08 432.8,236.44 433.3,241.01 433.8,239.35 434.3,237.70 434.8,236.40 435.3,236.65 435.8,236.64 436.3,247.80 436.8,241.87 437.3,238.01 437.8,236.85 438.3,236.28 438.8,236.40 439.3,236.24 439.8,236.49 440.3,238.84 440.8,240.85 441.3,239.09 441.8,237.60 442.3,237.40 442.8,237.94 443.3,236.84 443.8,237.51 444.3,242.74 444.8,238.71 445.3,235.49 445.8,235.42 446.3,234.95 446.8,234.42 447.3,234.97 447.8,245.16 448.3,239.26 448.8,234.15 449.3,235.26 449.8,234.93 450.3,234.49 450.8,242.76 451.3,238.57 451.8,235.49 452.3,237.92 452.8,237.85 453.3,237.77 453.8,238.49 454.3,236.99 454.8,237.95 455.3,236.01 455.8,235.55 456.3,236.50 456.8,235.62 457.3,234.84 457.8,233.84 458.3,234.74 458.8,233.74 459.3,232.90 459.8,233.00 460.3,232.45 460.8,232.03 461.3,233.44 461.8,232.55 462.3,232.03 462.8,233.45 463.3,233.86 463.8,233.26 464.3,235.28 464.8,234.30 465.3,235.29 465.8,236.19 466.3,246.42 466.8,240.21 467.3,235.68 467.8,236.60 468.3,235.31 468.8,234.64 469.3,238.17 469.8,234.65 470.3,231.29 470.8,230.56 471.3,230.78 471.8,230.59 472.3,230.68 472.8,231.12 473.3,232.11 473.8,232.21 474.3,233.67 474.8,239.59 475.3,235.00 475.8,232.30 476.3,234.29 476.8,232.12 477.3,230.28 477.8,231.06 478.3,230.51 478.8,230.12 479.3,234.09 479.8,233.64 480.3,233.68 480.8,238.35 481.3,237.49 481.8,236.51 482.3,235.40 482.8,236.23 483.3,234.88 483.8,234.74 484.3,235.61 484.8,234.52 485.3,243.37 485.8,238.36 486.3,233.75 486.8,234.29 487.3,234.18 487.8,234.13 488.3,233.70 488.8,234.07 489.3,233.60 489.8,236.03 490.3,234.59 490.8,233.55 491.3,236.44 491.8,234.91 492.3,234.57 492.8,239.64 493.3,236.69 493.8,234.54 494.3,235.75 494.8,238.23 495.3,235.99 495.8,234.06 496.3,234.47 496.8,242.25 497.3,238.93 497.8,236.22 498.3,237.82 498.8,237.63 499.3,236.80 499.8,236.46 500.3,236.34 500.8,235.23 501.3,235.69 501.8,235.07 502.3,234.75 502.8,235.07 503.3,235.37 503.8,238.70 504.3,236.46 504.8,234.81 505.3,236.82 505.8,234.96 506.3,233.67 506.8,235.41 507.3,234.89 507.8,234.91 508.3,235.01 508.8,234.57 509.3,234.07 509.8,233.34 510.3,233.88 510.8,232.80 511.3,232.88 511.8,233.55 512.3,243.83 512.8,237.53 513.3,233.32 513.8,241.35 514.3,236.50 514.8,235.11 515.3,233.65 515.8,232.91 516.3,233.80 516.8,233.26 517.3,233.29 517.8,234.84 518.3,234.19 518.8,235.83 519.3,234.50 519.8,234.51 520.3,235.18 520.8,234.42 521.3,246.50 521.8,240.35 522.3,234.96 522.8,234.86 523.3,234.90 523.8,236.28 524.3,240.44 524.8,237.71 525.3,237.99 525.8,236.46 526.3,235.07 526.8,236.19 527.3,244.97 527.8,243.55 528.3,239.74 528.8,237.46 529.3,238.24 529.8,236.76 530.3,235.76 530.8,235.18 531.3,236.80 531.8,235.80 532.3,235.04 532.8,235.19 533.3,236.15 533.8,237.16 534.3,237.38 534.8,236.80 535.3,235.70 535.8,237.13 536.3,235.68 536.8,236.42 537.3,236.52 537.8,238.67 538.3,240.69 538.8,239.77 539.3,238.31 539.8,237.02 540.3,237.08 540.8,245.00 541.3,239.25 541.8,236.22 542.3,236.15 542.8,236.67 543.3,237.72 543.8,239.96 544.3,238.71 544.8,238.55 545.3,238.02 545.8,238.70 546.3,238.03 546.8,237.57 547.3,236.99 547.8,237.45 548.3,238.40 548.8,237.00 549.3,236.99 549.8,237.17 550.3,236.69 550.8,236.44 551.3,236.71 551.8,237.63 552.3,237.33 552.8,238.38 553.3,236.32 553.8,235.06 554.3,237.04 554.8,236.02 555.3,237.42 555.8,236.97 556.3,236.62 556.8,237.19 557.3,236.51 557.8,236.93 558.3,238.51 558.8,237.34 559.3,236.68 559.8,247.67 560.3,241.87 560.8,236.54 561.3,244.92 561.8,239.79 562.3,236.22 562.8,242.48 563.3,237.51 563.8,242.84 564.3,238.25 564.8,235.32 565.3,235.85 565.8,246.47 566.3,241.17 566.8,238.06 567.3,249.59 567.8,243.52 568.3,238.45 568.8,248.62 569.3,242.96 569.8,238.71 570.3,237.66 570.8,236.99 571.3,236.96 571.8,237.47 572.3,249.97 572.8,244.45 573.3,240.46 573.8,240.46 574.3,240.01 574.8,238.09 575.3,237.59 575.8,235.75 576.3,234.18 576.8,235.90 577.3,237.40 577.8,238.65 578.3,243.54 578.8,242.68 579.3,240.10 579.8,239.94 580.3,239.38 580.8,239.62 581.3,238.14 581.8,238.37 582.3,252.02 582.8,244.81 583.3,238.69 583.8,241.47 584.3,240.40 584.8,240.54 585.3,241.73 585.8,241.78 586.3,243.14 586.8,241.94 587.3,241.69 587.8,242.10 588.3,240.60 588.8,240.63 589.3,239.58 589.8,239.21 590.3,240.40 590.8,239.03 591.3,249.07 591.8,243.53 592.3,239.79 592.8,239.37 593.3,238.93 593.8,239.31 594.3,238.95 594.8,240.81 595.3,239.75 595.8,240.98 596.3,239.88 596.8,239.00 597.3,239.41 597.8,241.17 598.3,240.05 598.8,239.09 599.3,239.06 599.8,238.69 600.3,239.26 600.8,238.64 601.3,238.89 601.8,239.36 602.3,241.21 602.8,238.96 603.3,237.03 603.8,238.49 604.3,237.38 604.8,237.10 605.3,236.73 605.8,238.01 606.3,237.32 606.8,236.79 607.3,235.70 607.8,236.42 608.3,236.27 608.8,237.46 609.3,245.50 609.8,239.55 610.3,234.91 610.8,234.89 611.3,234.44 611.8,234.15 612.3,241.62 612.8,235.01 613.3,230.08 613.8,227.96 614.3,228.03 614.8,230.24 615.3,229.63 615.8,231.34 616.3,230.72 616.8,230.41 617.3,231.17 617.8,242.62 618.3,236.80 618.8,232.21 619.3,238.93 619.8,234.33 620.3,233.02 620.8,232.48 621.3,230.48 621.8,229.94 622.3,230.18 622.8,228.85 623.3,227.95 623.8,229.19 624.3,228.52 624.8,228.31 625.3,229.04 625.8,230.97 626.3,230.21 626.8,231.52 627.3,233.37 627.8,232.24 628.3,232.05 628.8,232.56 629.3,233.61 629.8,232.03 630.3,232.10 630.8,232.10 631.3,231.19 631.8,239.57 632.3,235.29 632.8,232.25 633.3,233.99 633.8,233.19 634.3,233.52 634.8,232.67 635.3,232.87 635.8,232.12 636.3,231.62 636.8,232.04 637.3,232.95 637.8,232.33 638.3,232.93 638.8,232.72 639.3,234.84 639.8,234.29 640.3,234.65 640.8,236.49 641.3,236.62 641.8,235.81 642.3,235.50 642.8,233.69 643.3,232.38 643.8,231.22 644.3,232.40 644.8,233.29 645.3,233.05 645.8,233.16 646.3,235.89 646.8,234.48 647.3,235.74 647.8,234.29 648.3,233.67 648.8,235.23 649.3,234.19 649.8,235.71 650.3,234.62 650.8,234.56 651.3,234.25 651.8,234.56 652.3,240.93 652.8,237.19 653.3,235.61 653.8,235.27 654.3,244.37 654.8,238.43 655.3,233.85 655.8,245.18 656.3,238.39 656.8,232.27 657.3,230.89 657.8,231.54 658.3,231.30 658.8,230.24 659.3,232.87 659.8,229.94 660.3,229.42 660.8,228.72 661.3,227.78 661.8,227.54 662.3,229.48 662.8,228.93 663.3,228.79 663.8,230.09 664.3,229.04 664.8,228.70 665.3,227.88 665.8,227.74 666.3,226.94 666.8,234.01 667.3,230.98 667.8,230.07 668.3,229.67 668.8,231.32 669.3,230.65 669.8,230.58 670.3,231.11 670.8,232.93 671.3,232.70 671.8,231.36 672.3,233.11 672.8,230.76 673.3,228.89 673.8,228.14 674.3,228.51 674.8,228.21 675.3,233.61 675.8,230.20 676.3,237.16 676.8,232.25 677.3,229.49 677.8,229.31 678.3,230.68 678.8,229.56 679.3,228.26 679.8,229.29 680.3,228.30 680.8,227.63 681.3,227.24 681.8,227.50 682.3,227.97 682.8,227.91 683.3,227.52 683.8,227.32 684.3,232.27 684.8,233.43 685.3,231.33 685.8,231.23 686.3,232.78 686.8,231.57 687.3,231.53 687.8,242.51 688.3,236.87 688.8,231.41 689.3,230.91 689.8,231.91 690.3,231.75 690.8,231.13 691.3,229.95 691.8,231.51 692.3,230.90 692.8,230.15 693.3,229.40 693.8,230.32 694.3,230.25 694.8,229.96 695.3,236.34 695.8,233.08 696.3,230.67 696.8,230.00 697.3,229.49 697.8,228.81 698.3,229.03 698.8,228.01 699.3,227.38 699.8,227.64 700.3,229.84 700.8,227.99 701.3,227.27 701.8,227.64 702.3,228.06 702.8,228.94 703.3,230.68 703.8,231.13 704.3,230.72 704.8,238.89 705.3,233.64 705.8,231.14 706.3,229.34 706.8,228.48 707.3,229.44 707.8,229.27 708.3,228.82 708.8,228.10 709.3,231.63 709.8,229.54 710.3,228.94 710.8,228.91 711.3,229.51 711.8,230.08 712.3,228.53 712.8,232.46 713.3,229.40 713.8,227.13 714.3,228.66 714.8,228.15 715.3,228.54 715.8,228.53 716.3,229.13 716.8,228.95 717.3,228.59 717.8,227.53 718.3,238.30 718.8,231.87 719.3,236.82 719.8,230.54 720.3,227.28 720.8,225.30 721.3,224.34 721.8,224.48 722.3,225.20 722.8,225.24 723.3,225.40 723.8,225.38 724.3,227.00 724.8,226.66 725.3,228.07 725.8,227.67 726.3,228.40 726.8,227.33 727.3,227.56 727.8,226.41 728.3,225.54 728.8,231.74 729.3,227.96 729.8,237.72 730.3,230.66 730.8,223.95 731.3,223.37 731.8,223.90 732.3,224.09 732.8,224.79 733.3,224.75 733.8,225.67 734.3,225.49 734.8,225.54 735.3,227.11 735.8,226.64 736.3,236.88 736.8,237.54 737.3,230.61 737.8,223.85 738.3,224.45 738.8,223.31 739.3,223.79 739.8,224.62 740.3,225.44 740.8,238.06 741.3,233.21 741.8,235.32 742.3,230.37 742.8,226.67 743.3,236.73 743.8,230.14 744.3,235.00 744.8,229.91 745.3,226.37 745.8,226.32 746.3,225.92 746.8,226.04 747.3,227.33 747.8,228.61 748.3,228.07 748.8,227.86 749.3,227.95 749.8,227.85 750.3,225.96 750.8,225.49 751.3,224.95 751.8,225.84 752.3,226.29 752.8,225.44 753.3,225.85 753.8,225.55 754.3,226.92 754.8,226.64 755.3,227.08 755.8,228.41 756.3,228.48 756.8,227.86 757.3,227.82 757.8,226.42 758.3,225.15 758.8,225.83 759.3,225.91 759.8,225.62 760.3,228.79 760.8,227.19 761.3,225.78 761.8,226.60 762.3,228.21 762.8,228.00 763.3,228.93 763.8,228.77 764.3,229.06 764.8,229.21 765.3,227.75 765.8,226.71 766.3,232.84 766.8,228.86 767.3,226.57 767.8,225.33 768.3,226.54 768.8,227.10 769.3,225.24 769.8,225.59 770.3,224.32 770.8,223.85 771.3,223.30 771.8,223.96 772.3,224.69 772.8,224.14 773.3,224.78 773.8,226.21 774.3,224.96 774.8,226.48 775.3,225.62 775.8,225.13 776.3,226.50 776.8,227.39 777.3,225.31 777.8,224.38 778.3,225.47 778.8,225.10 779.3,224.22 779.8,224.43 780.3,225.63 780.8,224.83 781.3,225.32 781.8,227.53 782.3,232.06 782.8,226.98 783.3,224.55 783.8,222.68 784.3,223.48 784.8,223.09 785.3,224.19 785.8,225.33 786.3,226.98 786.8,229.29 787.3,226.48 787.8,225.58 788.3,224.64 788.8,225.16 789.3,225.06 789.8,224.35 790.3,225.32 790.8,224.96 791.3,225.25 791.8,225.21 792.3,225.56 792.8,228.75 793.3,227.83 793.8,227.85 794.3,227.92 794.8,228.70 795.3,227.69 795.8,227.06 796.3,229.02 796.8,232.78 797.3,228.57 797.8,225.22 798.3,224.04 798.8,224.42 799.3,226.54 799.8,225.41 800.3,224.50 800.8,226.31 801.3,226.02 801.8,226.61 802.3,226.41 802.8,233.82 803.3,230.20 803.8,227.92 804.3,228.25 804.8,227.12 805.3,228.63 805.8,227.12 806.3,226.35 806.8,226.32 807.3,226.98 807.8,228.17 808.3,227.74 808.8,227.41 809.3,228.03 809.8,227.39 810.3,228.02 810.8,227.06 811.3,228.08 811.8,228.99 812.3,228.12 812.8,228.65 813.3,229.42 813.8,228.91 814.3,227.88 814.8,228.67 815.3,228.10 815.8,228.83 816.3,227.70 816.8,228.84 817.3,229.24 817.8,228.88 818.3,230.28 818.8,230.19 819.3,228.53 819.8,228.34 820.3,226.84 820.8,225.33 821.3,225.53 821.8,234.24 822.3,229.82 822.8,226.76 823.3,226.59 823.8,227.31 824.3,228.42 824.8,228.64 825.3,231.43 825.8,229.90 826.3,230.13 826.8,240.83 827.3,233.77 827.8,228.07 828.3,227.97 828.8,232.67 829.3,229.21 829.8,232.83 830.3,229.36 830.8,227.20 831.3,237.30 831.8,231.45 832.3,226.38 832.8,225.96 833.3,225.58 833.8,228.67 834.3,227.37 834.8,228.84 835.3,227.95 835.8,227.49 836.3,229.69 836.8,229.58 837.3,227.74 837.8,227.99 838.3,226.40 838.8,225.76 839.3,227.13 839.8,231.84 840.3,225.96 840.8,221.04 841.3,219.56 841.8,221.07 842.3,223.62 842.8,226.72 843.3,227.39 843.8,229.13 844.3,235.83 844.8,231.00 845.3,226.98 845.8,226.16 846.3,225.63 846.8,225.62 847.3,225.57 847.8,229.70 848.3,227.82 848.8,227.25 849.3,226.37 849.8,236.32 850.3,230.69 850.8,236.14 851.3,230.38 851.8,226.79 852.3,233.80 852.8,230.73 853.3,228.75 853.8,230.34 854.3,229.07 854.8,229.50 855.3,229.43 855.8,228.20 856.3,228.15 856.8,226.93 857.3,226.67 857.8,226.63 858.3,225.38 858.8,227.20 859.3,225.84 859.8,225.93 860.3,225.97 860.8,226.99 861.3,227.47 861.8,225.97 862.3,234.60 862.8,230.33 863.3,226.69 863.8,223.76 864.3,224.74 864.8,227.07 865.3,227.06 865.8,229.10 866.3,229.08 866.8,228.69 867.3,230.59 867.8,228.96 868.3,228.41 868.8,228.24 869.3,227.96 869.8,237.58 870.3,230.61 870.8,224.73 871.3,223.31 871.8,224.83 872.3,227.10 872.8,230.13 873.3,231.22 873.8,231.48 874.3,230.83 874.8,232.08 875.3,243.72 875.8,237.06 876.3,232.72 876.8,230.27 877.3,229.85 877.8,233.19 878.3,230.94 878.8,229.21 879.3,228.93 879.8,230.20 880.3,229.41 880.8,229.36 881.3,231.32 881.8,229.86 882.3,228.81 882.8,231.98 883.3,229.41 883.8,232.28 884.3,229.80 884.8,228.33 885.3,229.20 885.8,229.41 886.3,229.44 886.8,229.05 887.3,230.18 887.8,229.73 888.3,232.17 888.8,231.03 889.3,229.36 889.8,231.48 890.3,229.86 890.8,231.86 891.3,236.23 891.8,231.19 892.3,227.07 892.8,227.27 893.3,225.39 893.8,233.89 894.3,229.23 894.8,225.88 895.3,226.12 895.8,227.81 896.3,227.24 896.8,229.35 897.3,238.42 897.8,235.32 898.3,238.33 898.8,236.80 899.3,233.91 899.8,233.57 900.3,233.00 900.8,231.97 901.3,229.98 901.8,231.57 902.3,230.68 902.8,230.67 903.3,232.41 903.8,231.52 904.3,232.30 904.8,230.57 905.3,239.82 905.8,233.83 906.3,230.14 906.8,230.45 907.3,229.68 907.8,229.44 908.3,230.48 908.8,235.64 909.3,231.86 909.8,228.50 910.3,230.10 910.8,228.38 911.3,234.15 911.8,230.44 912.3,228.05 912.8,228.84 913.3,229.62 913.8,229.01 914.3,228.29 914.8,229.29 915.3,228.76 915.8,228.71 916.3,228.63 916.8,229.05 917.3,229.13 917.8,229.92 918.3,231.67 918.8,230.91 919.3,231.77 919.8,230.78 920.3,230.84 920.8,230.62 921.3,231.68 921.8,231.33 922.3,230.40 922.8,229.60 923.3,231.00 923.8,229.76 924.3,228.81 924.8,228.00 925.3,227.82 925.8,227.37 926.3,227.09 926.8,226.87 927.3,227.48 927.8,229.20 928.3,228.25 928.8,227.82 929.3,229.12 929.8,228.51 930.3,229.97 930.8,237.69 931.3,233.13 931.8,228.90 932.3,227.57 932.8,228.09 933.3,226.46 933.8,225.96 934.3,226.89 934.8,226.87 935.3,226.61 935.8,228.90 936.3,228.45 936.8,227.92 937.3,227.97 937.8,229.54 938.3,228.33 938.8,232.02 939.3,229.81 939.8,230.42 940.3,229.26 940.8,228.38 941.3,228.66 941.8,228.65 942.3,230.14 942.8,229.33 943.3,231.50 943.8,230.24 944.3,229.75 944.8,229.68 945.3,234.61 945.8,231.22 946.3,229.51 946.8,229.45 947.3,230.66 947.8,230.80 948.3,232.21 948.8,232.35 949.3,230.51 949.8,229.25 950.3,227.84 950.8,226.91 951.3,226.63 951.8,226.06 952.3,226.06 952.8,227.14 953.3,227.40 953.8,226.91 954.3,228.78 954.8,228.02 955.3,229.41 955.8,228.69 956.3,228.67 956.8,239.16 957.3,232.96 957.8,227.25 958.3,226.97 958.8,227.22 959.3,226.92 959.8,226.88 960.3,227.90 960.8,244.08 961.3,235.89 961.8,229.65 962.3,238.53 962.8,233.15 963.3,229.64 963.8,229.42 964.3,230.31 964.8,230.48 965.3,231.67 965.8,232.09 966.3,232.79 966.8,232.91 967.3,231.28 967.8,230.16 968.3,230.74 968.8,229.93 969.3,228.44 969.8,229.65 970.3,237.51 970.8,231.63 971.3,226.58 971.8,226.22 972.3,225.32 972.8,226.62 973.3,224.89 973.8,223.65 974.3,223.93 974.8,224.31 975.3,226.80 975.8,224.47 976.3,222.42 976.8,222.57 977.3,223.85 977.8,227.50 978.3,225.05 978.8,223.69 979.3,223.84 979.8,227.68 980.3,226.95 980.8,227.43 981.3,227.80 981.8,228.70 982.3,229.11 982.8,228.97 983.3,229.33 983.8,230.14 984.3,229.93 984.8,228.08 985.3,230.99 985.8,227.61 986.3,224.85 986.8,225.14 987.3,225.74 987.8,226.05 988.3,226.14 988.8,226.13 989.3,225.42 989.8,225.89 990.3,226.72 990.8,225.23 991.3,225.32 991.8,233.90 992.3,229.46 992.8,225.97 993.3,236.25 993.8,231.28 994.3,228.07 994.8,227.44 995.3,227.24 995.8,226.53 996.3,236.59 996.8,231.56 997.3,228.48 997.8,228.14 998.3,228.09 998.8,230.46 999.3,234.67 999.8,230.49 1000.3,227.46 1000.8,226.16 1001.3,226.80 1001.8,233.34 1002.3,229.60 1002.8,228.10 1003.3,227.32 1003.8,228.42 1004.3,227.19 1004.8,227.85 1005.3,226.62 1005.8,226.71 1006.3,226.94 1006.8,229.49 1007.3,227.24 1007.8,225.87 1008.3,225.73 1008.8,226.19 1009.3,227.60 1009.8,236.54 1010.3,231.16 1010.8,228.10 1011.3,227.16 1011.8,228.46 1012.3,227.00 1012.8,226.97 1013.3,229.26 1013.8,230.66 1014.3,228.07 1014.8,226.21 1015.3,226.27 1015.8,226.56 1016.3,227.50 1016.8,233.22 1017.3,229.12 1017.8,226.29 1018.3,226.20 1018.8,234.12 1019.3,229.39 1019.8,236.54 1020.3,230.70 1020.8,225.25 1021.3,227.42 1021.8,227.06 1022.3,227.33 1022.8,227.09 1023.3,227.01 1023.8,228.80 1024.3,227.85 1024.8,227.34 1025.3,228.62 1025.8,227.73 1026.3,229.91 1026.8,227.47 1027.3,227.20 1027.8,225.92 1028.3,224.13 1028.8,223.66 1029.3,230.55 1029.8,227.41 1030.3,224.96 1030.8,226.51 1031.3,227.18 1031.8,225.93 1032.3,227.57 1032.8,225.69 1033.3,224.21 1033.8,224.10 1034.3,223.92 1034.8,224.49 1035.3,235.70 1035.8,229.99 1036.3,231.58 1036.8,228.25 1037.3,226.14 1037.8,227.25 1038.3,231.90 1038.8,237.43 1039.3,231.84 1039.8,228.59 1040.3,231.09 1040.8,230.89 1041.3,228.93 1041.8,226.76 1042.3,226.91 1042.8,227.77 1043.3,226.77 1043.8,226.57 1044.3,228.41 1044.8,227.19 1045.3,228.55 1045.8,229.68 1046.3,227.92 1046.8,229.19 1047.3,227.62 1047.8,227.10 1048.3,235.66 1048.8,230.83 1049.3,233.62 1049.8,231.03 1050.3,228.89 1050.8,229.48 1051.3,231.05 1051.8,230.82 1052.3,231.83 1052.8,231.44 1053.3,231.28 1053.8,230.28 1053.8,258.2" fill="#BE1F79" />
</svg>
<div class="leg" style="left:442.2px;width:34.2px"><i style="background:#BE1F79"></i><span>CPU</span></div>
<div class="leg" style="left:481.4px;width:26.1px"><i style="background:#2DCB4A"></i><span>IO</span></div>
<div class="leg" style="left:512.5px;width:31.9px"><i style="background:#2A2A2A"></i><span>IPC</span></div>
<div class="leg" style="left:549.4px;width:47.3px"><i style="background:#4343DA"></i><span>LWLock</span></div>
<div class="leg" style="left:601.7px;width:36.1px"><i style="background:#F2B324"></i><span>Lock</span></div>
<div class="t" style="left:13.9px;top:336.5px;font-size:8.25px;color:#222;-webkit-text-stroke:0.18px #222">Wait Event Details</div>
<div class="abs" style="left:9.6px;top:348.2px;width:1061px;height:1px;background:#E6E9EE"></div>
<div class="abs" style="left:140.7px;top:350.8px;width:930px;height:19.5px;background:#F0F3F7"></div>
<div class="abs" style="left:9.6px;top:369.6px;width:131px;height:1px;background:#E6E9EE"></div>
<div class="abs" style="left:9.6px;top:368.9px;width:51.5px;height:1.8px;background:#EC8035"></div>
<div class="t" style="left:18.5px;top:358px;font-size:7.8px;color:#444">Summary</div>
<div class="t" style="left:70.9px;top:358px;font-size:7.75px;color:#444">Sample Selection</div>
<div class="sel" style="left:10.3px;top:380.5px;width:121.7px;height:18px"></div>
<div class="t" style="left:18px;top:386.3px;font-size:8.3px;color:#555">Top queries by wait events</div>
<div class="caret" style="left:123px;top:388.5px"></div>
<div class="abs" style="left:184px;top:375px;width:891px;height:43.5px;background:#E1E2E4;border-radius:2.5px"></div>
<div class="t" style="left:189px;top:383.5px;font-size:8.4px;color:#222;-webkit-text-stroke:0.15px #222">Top queries by wait events</div>
<div class="t" style="left:188.5px;top:400px;font-size:8.45px;color:#666">Lists the queries across all the sessions for the selected time interval that have spent the longest time in wait states.</div>
<div class="tbl">
<div class="abs" style="left:165.4px;top:0;width:1px;height:54px;background:#E6E9EE"></div>
<div class="abs" style="left:443px;top:0;width:1px;height:54px;background:#E6E9EE"></div>
<div class="abs" style="left:563.3px;top:0;width:1px;height:54px;background:#E6E9EE"></div>
<div class="abs" style="left:763.8px;top:0;width:1px;height:54px;background:#E6E9EE"></div>
<div class="abs" style="left:871.5px;top:0;width:1px;height:54px;background:#E6E9EE"></div>
<div class="abs" style="left:0;top:53.5px;width:1058px;height:1px;background:#E6E9EE"></div>
<div class="t" style="left:7.5px;top:36px;font-size:8px;color:#222">QueryID</div>
<div class="t" style="left:173.5px;top:36px;font-size:8.2px;color:#222">Query</div>
<div class="t" style="left:451px;top:23px;font-size:8.2px;color:#222">Total</div>
<div class="t" style="left:451px;top:36px;font-size:8.2px;color:#222">wait events</div>
<div class="caret" style="left:496px;top:38px;border-top-color:#222"></div>
<div class="t" style="left:569.7px;top:35.5px;font-size:8.45px;color:#222">Waiting time (%)</div>
<div class="t" style="left:770.5px;top:36px;font-size:8.2px;color:#222">Wait events</div>
<div class="t" style="left:878.7px;top:9.3px;font-size:8.3px;color:#222">Execution count</div>
<div class="t" style="left:878.7px;top:22.3px;font-size:8.3px;color:#222">Users</div>
<div class="t" style="left:878.7px;top:35.5px;font-size:8.3px;color:#222">Databases</div>
<div class="abs" style="left:945.5px;top:11.5px;transform:scale(0.72);transform-origin:0 0"><svg class="abs" style="left:0px;top:0px" width="9" height="8" viewBox="0 0 9 8"><path d="M0.8,1 L3.6,3.6 L0.8,6.2" stroke="#666" stroke-width="1.1" fill="none"/><rect x="4.4" y="6.3" width="3.6" height="1" fill="#666"/></svg></div>
<div class="abs" style="left:907.3px;top:24.3px;transform:scale(0.7);transform-origin:0 0"><svg class="abs" style="left:0px;top:0px" width="7" height="8" viewBox="0 0 7 8"><circle cx="3.5" cy="2.2" r="1.8" fill="#555"/><path d="M0.3,7.6 C0.3,5 1.6,4.5 3.5,4.5 C5.4,4.5 6.7,5 6.7,7.6 Z" fill="#555"/></svg></div>
<div class="abs" style="left:926.2px;top:37.6px;transform:scale(0.62);transform-origin:0 0"><svg class="abs" style="left:0px;top:0px" width="7" height="8" viewBox="0 0 7 8"><path d="M0.3,1.5 C0.3,0 6.7,0 6.7,1.5 V6.5 C6.7,8 0.3,8 0.3,6.5 Z" fill="#555"/><path d="M0.3,2.6 C1.5,3.6 5.5,3.6 6.7,2.6 M0.3,4.8 C1.5,5.8 5.5,5.8 6.7,4.8" stroke="#fff" stroke-width="0.7" fill="none"/></svg></div>
<div class="row" style="top:54.50px">
<div class="num" style="right:894.5px;top:5.2px">2806948967135331840</div>
<div class="q" style="top:6.6px"><b>select</b> <b>sum</b>(l_extendedprice) / $1 <b>as</b> avg_yearly <b>from</b> li</div>
<div class="fade" style="top:3px"></div>
<div class="num" style="right:496.29999999999995px;top:5.9px;font-size:8.25px">2048 / 6222</div>
<div class="wt"><i style="width:50.04px"></i></div>
<div class="num" style="left:728px;top:5px">(32.92%)</div>
<div class="we"><i style="width:20.50px;background:#27C840;box-shadow:inset 0 0 0 0.6px #1DB536"></i><i style="width:19.70px;background:#8CDB9B;box-shadow:inset 0 0 0 0.6px #7fd08f"></i><i style="width:29.60px;background:#27C840;box-shadow:inset 0 0 0 0.6px #1DB536"></i><i style="width:33.80px;background:#4040DC;box-shadow:inset 0 0 0 0.6px #2A2AD0"></i></div>
<svg class="abs" style="left:876.5px;top:1.8px" width="9" height="8" viewBox="0 0 9 8"><path d="M0.8,1 L3.6,3.6 L0.8,6.2" stroke="#333" stroke-width="1.1" fill="none"/><rect x="4.4" y="6.3" width="3.6" height="1" fill="#333"/></svg>
<div class="num" style="left:891.3px;top:1.6px;color:#555">41</div>
<div class="num" style="left:905.6px;top:2.6px;color:#555;font-size:6px">•</div>
<svg class="abs" style="left:915.5px;top:2.0px" width="7" height="8" viewBox="0 0 7 8"><circle cx="3.5" cy="2.2" r="1.8" fill="#333"/><path d="M0.3,7.6 C0.3,5 1.6,4.5 3.5,4.5 C5.4,4.5 6.7,5 6.7,7.6 Z" fill="#333"/></svg>
<div class="num" style="left:926.3px;top:1.6px;color:#555">16</div>
<div class="num" style="left:940.6px;top:2.6px;color:#555;font-size:6px">•</div>
<svg class="abs" style="left:950.5px;top:2.0px" width="7" height="8" viewBox="0 0 7 8"><path d="M0.3,1.5 C0.3,0 6.7,0 6.7,1.5 V6.5 C6.7,8 0.3,8 0.3,6.5 Z" fill="#333"/><path d="M0.3,2.6 C1.5,3.6 5.5,3.6 6.7,2.6 M0.3,4.8 C1.5,5.8 5.5,5.8 6.7,4.8" stroke="#fff" stroke-width="0.7" fill="none"/></svg>
<div class="num" style="left:962.3px;top:1.6px;color:#555">1</div>
</div>
<div class="rb" style="left:0;top:73.37px;width:1023px"></div>
<div class="row" style="top:74.37px">
<div class="num" style="right:894.5px;top:5.2px">285248859856638176</div>
<div class="q" style="top:6.6px"><b>select</b> o_year, <b>sum</b>(<b>case</b> <b>when</b> nation = $1 <b>then</b> volume e</div>
<div class="fade" style="top:3px"></div>
<div class="num" style="right:496.29999999999995px;top:5.9px;font-size:8.25px">1744 / 2320</div>
<div class="wt"><i style="width:114.26px"></i></div>
<div class="num" style="left:728px;top:5px">(75.17%)</div>
<div class="we"><i style="width:36.30px;background:#8CDB9B;box-shadow:inset 0 0 0 0.6px #7fd08f"></i><i style="width:3.40px;background:#333333;box-shadow:inset 0 0 0 0.6px #222"></i><i style="width:63.90px;background:#4040DC;box-shadow:inset 0 0 0 0.6px #2A2AD0"></i></div>
<svg class="abs" style="left:876.5px;top:1.8px" width="9" height="8" viewBox="0 0 9 8"><path d="M0.8,1 L3.6,3.6 L0.8,6.2" stroke="#333" stroke-width="1.1" fill="none"/><rect x="4.4" y="6.3" width="3.6" height="1" fill="#333"/></svg>
<div class="num" style="left:891.3px;top:1.6px;color:#555">40</div>
<div class="num" style="left:905.6px;top:2.6px;color:#555;font-size:6px">•</div>
<svg class="abs" style="left:915.5px;top:2.0px" width="7" height="8" viewBox="0 0 7 8"><circle cx="3.5" cy="2.2" r="1.8" fill="#333"/><path d="M0.3,7.6 C0.3,5 1.6,4.5 3.5,4.5 C5.4,4.5 6.7,5 6.7,7.6 Z" fill="#333"/></svg>
<div class="num" style="left:926.3px;top:1.6px;color:#555">16</div>
<div class="num" style="left:940.6px;top:2.6px;color:#555;font-size:6px">•</div>
<svg class="abs" style="left:950.5px;top:2.0px" width="7" height="8" viewBox="0 0 7 8"><path d="M0.3,1.5 C0.3,0 6.7,0 6.7,1.5 V6.5 C6.7,8 0.3,8 0.3,6.5 Z" fill="#333"/><path d="M0.3,2.6 C1.5,3.6 5.5,3.6 6.7,2.6 M0.3,4.8 C1.5,5.8 5.5,5.8 6.7,4.8" stroke="#fff" stroke-width="0.7" fill="none"/></svg>
<div class="num" style="left:962.3px;top:1.6px;color:#555">1</div>
</div>
<div class="rb" style="left:0;top:93.24px;width:1023px"></div>
<div class="row" style="top:94.24px">
<div class="num" style="right:894.5px;top:5.2px">6334849674718646272</div>
<div class="q" style="top:6.6px"><b>select</b> n_name, <b>sum</b>(l_extendedprice * ($1 - l_discount)</div>
<div class="fade" style="top:3px"></div>
<div class="num" style="right:496.29999999999995px;top:5.9px;font-size:8.25px">1268 / 1684</div>
<div class="wt"><i style="width:114.46px"></i></div>
<div class="num" style="left:728px;top:5px">(75.30%)</div>
<div class="we"><i style="width:37.90px;background:#27C840;box-shadow:inset 0 0 0 0.6px #1DB536"></i><i style="width:5.30px;background:#333333;box-shadow:inset 0 0 0 0.6px #222"></i><i style="width:60.40px;background:#4040DC;box-shadow:inset 0 0 0 0.6px #2A2AD0"></i></div>
<svg class="abs" style="left:876.5px;top:1.8px" width="9" height="8" viewBox="0 0 9 8"><path d="M0.8,1 L3.6,3.6 L0.8,6.2" stroke="#333" stroke-width="1.1" fill="none"/><rect x="4.4" y="6.3" width="3.6" height="1" fill="#333"/></svg>
<div class="num" style="left:891.3px;top:1.6px;color:#555">56</div>
<div class="num" style="left:905.6px;top:2.6px;color:#555;font-size:6px">•</div>
<svg class="abs" style="left:915.5px;top:2.0px" width="7" height="8" viewBox="0 0 7 8"><circle cx="3.5" cy="2.2" r="1.8" fill="#333"/><path d="M0.3,7.6 C0.3,5 1.6,4.5 3.5,4.5 C5.4,4.5 6.7,5 6.7,7.6 Z" fill="#333"/></svg>
<div class="num" style="left:926.3px;top:1.6px;color:#555">16</div>
<div class="num" style="left:940.6px;top:2.6px;color:#555;font-size:6px">•</div>
<svg class="abs" style="left:950.5px;top:2.0px" width="7" height="8" viewBox="0 0 7 8"><path d="M0.3,1.5 C0.3,0 6.7,0 6.7,1.5 V6.5 C6.7,8 0.3,8 0.3,6.5 Z" fill="#333"/><path d="M0.3,2.6 C1.5,3.6 5.5,3.6 6.7,2.6 M0.3,4.8 C1.5,5.8 5.5,5.8 6.7,4.8" stroke="#fff" stroke-width="0.7" fill="none"/></svg>
<div class="num" style="left:962.3px;top:1.6px;color:#555">1</div>
</div>
<div class="rb" style="left:0;top:113.11px;width:1023px"></div>
<div class="row" style="top:114.11px">
<div class="num" style="right:894.5px;top:5.2px">3704712327590220288</div>
<div class="q" style="top:6.6px"><b>select</b> c_name, c_custkey, o_orderkey, o_orderdate, o_t</div>
<div class="fade" style="top:3px"></div>
<div class="num" style="right:496.29999999999995px;top:5.9px;font-size:8.25px">1265 / 3177</div>
<div class="wt"><i style="width:60.53px"></i></div>
<div class="num" style="left:728px;top:5px">(39.82%)</div>
<div class="we"><i style="width:3.70px;background:#27C840;box-shadow:inset 0 0 0 0.6px #1DB536"></i><i style="width:4.80px;background:#8CDB9B;box-shadow:inset 0 0 0 0.6px #7fd08f"></i><i style="width:41.70px;background:#27C840;box-shadow:inset 0 0 0 0.6px #1DB536"></i><i style="width:0.80px;background:#777777;box-shadow:inset 0 0 0 0.6px #666"></i><i style="width:52.60px;background:#4040DC;box-shadow:inset 0 0 0 0.6px #2A2AD0"></i></div>
<svg class="abs" style="left:876.5px;top:1.8px" width="9" height="8" viewBox="0 0 9 8"><path d="M0.8,1 L3.6,3.6 L0.8,6.2" stroke="#333" stroke-width="1.1" fill="none"/><rect x="4.4" y="6.3" width="3.6" height="1" fill="#333"/></svg>
<div class="num" style="left:891.3px;top:1.6px;color:#555">40</div>
<div class="num" style="left:905.6px;top:2.6px;color:#555;font-size:6px">•</div>
<svg class="abs" style="left:915.5px;top:2.0px" width="7" height="8" viewBox="0 0 7 8"><circle cx="3.5" cy="2.2" r="1.8" fill="#333"/><path d="M0.3,7.6 C0.3,5 1.6,4.5 3.5,4.5 C5.4,4.5 6.7,5 6.7,7.6 Z" fill="#333"/></svg>
<div class="num" style="left:926.3px;top:1.6px;color:#555">16</div>
<div class="num" style="left:940.6px;top:2.6px;color:#555;font-size:6px">•</div>
<svg class="abs" style="left:950.5px;top:2.0px" width="7" height="8" viewBox="0 0 7 8"><path d="M0.3,1.5 C0.3,0 6.7,0 6.7,1.5 V6.5 C6.7,8 0.3,8 0.3,6.5 Z" fill="#333"/><path d="M0.3,2.6 C1.5,3.6 5.5,3.6 6.7,2.6 M0.3,4.8 C1.5,5.8 5.5,5.8 6.7,4.8" stroke="#fff" stroke-width="0.7" fill="none"/></svg>
<div class="num" style="left:962.3px;top:1.6px;color:#555">1</div>
</div>
<div class="rb" style="left:0;top:132.98px;width:1023px"></div>
<div class="row" style="top:133.98px">
<div class="num" style="right:894.5px;top:5.2px">2266267921872736768</div>
<div class="q" style="top:6.6px"><b>select</b> l_returnflag, l_linestatus, <b>sum</b>(l_quantity) <b>as</b></div>
<div class="fade" style="top:3px"></div>
<div class="num" style="right:496.29999999999995px;top:5.9px;font-size:8.25px">1078 / 5526</div>
<div class="wt"><i style="width:29.66px"></i></div>
<div class="num" style="left:728px;top:5px">(19.51%)</div>
<div class="we"><i style="width:40.20px;background:#27C840;box-shadow:inset 0 0 0 0.6px #1DB536"></i><i style="width:63.40px;background:#4040DC;box-shadow:inset 0 0 0 0.6px #2A2AD0"></i></div>
<svg class="abs" style="left:876.5px;top:1.8px" width="9" height="8" viewBox="0 0 9 8"><path d="M0.8,1 L3.6,3.6 L0.8,6.2" stroke="#333" stroke-width="1.1" fill="none"/><rect x="4.4" y="6.3" width="3.6" height="1" fill="#333"/></svg>
<div class="num" style="left:891.3px;top:1.6px;color:#555">53</div>
<div class="num" style="left:905.6px;top:2.6px;color:#555;font-size:6px">•</div>
<svg class="abs" style="left:915.5px;top:2.0px" width="7" height="8" viewBox="0 0 7 8"><circle cx="3.5" cy="2.2" r="1.8" fill="#333"/><path d="M0.3,7.6 C0.3,5 1.6,4.5 3.5,4.5 C5.4,4.5 6.7,5 6.7,7.6 Z" fill="#333"/></svg>
<div class="num" style="left:926.3px;top:1.6px;color:#555">16</div>
<div class="num" style="left:940.6px;top:2.6px;color:#555;font-size:6px">•</div>
<svg class="abs" style="left:950.5px;top:2.0px" width="7" height="8" viewBox="0 0 7 8"><path d="M0.3,1.5 C0.3,0 6.7,0 6.7,1.5 V6.5 C6.7,8 0.3,8 0.3,6.5 Z" fill="#333"/><path d="M0.3,2.6 C1.5,3.6 5.5,3.6 6.7,2.6 M0.3,4.8 C1.5,5.8 5.5,5.8 6.7,4.8" stroke="#fff" stroke-width="0.7" fill="none"/></svg>
<div class="num" style="left:962.3px;top:1.6px;color:#555">1</div>
</div>
<div class="rb" style="left:0;top:152.85px;width:1023px"></div>
<div class="row" style="top:153.85px">
<div class="num" style="right:894.5px;top:5.2px">3277185455355147776</div>
<div class="q" style="top:6.6px"><b>select</b> supp_nation, cust_nation, l_year, <b>sum</b>(volume) a</div>
<div class="fade" style="top:3px"></div>
<div class="num" style="right:496.29999999999995px;top:5.9px;font-size:8.25px">1016 / 1369</div>
<div class="wt"><i style="width:112.80px"></i></div>
<div class="num" style="left:728px;top:5px">(74.21%)</div>
<div class="we"><i style="width:41.50px;background:#8CDB9B;box-shadow:inset 0 0 0 0.6px #7fd08f"></i><i style="width:1.00px;background:#333333;box-shadow:inset 0 0 0 0.6px #222"></i><i style="width:61.10px;background:#4040DC;box-shadow:inset 0 0 0 0.6px #2A2AD0"></i></div>
<svg class="abs" style="left:876.5px;top:1.8px" width="9" height="8" viewBox="0 0 9 8"><path d="M0.8,1 L3.6,3.6 L0.8,6.2" stroke="#333" stroke-width="1.1" fill="none"/><rect x="4.4" y="6.3" width="3.6" height="1" fill="#333"/></svg>
<div class="num" style="left:891.3px;top:1.6px;color:#555">57</div>
<div class="num" style="left:905.6px;top:2.6px;color:#555;font-size:6px">•</div>
<svg class="abs" style="left:915.5px;top:2.0px" width="7" height="8" viewBox="0 0 7 8"><circle cx="3.5" cy="2.2" r="1.8" fill="#333"/><path d="M0.3,7.6 C0.3,5 1.6,4.5 3.5,4.5 C5.4,4.5 6.7,5 6.7,7.6 Z" fill="#333"/></svg>
<div class="num" style="left:926.3px;top:1.6px;color:#555">16</div>
<div class="num" style="left:940.6px;top:2.6px;color:#555;font-size:6px">•</div>
<svg class="abs" style="left:950.5px;top:2.0px" width="7" height="8" viewBox="0 0 7 8"><path d="M0.3,1.5 C0.3,0 6.7,0 6.7,1.5 V6.5 C6.7,8 0.3,8 0.3,6.5 Z" fill="#333"/><path d="M0.3,2.6 C1.5,3.6 5.5,3.6 6.7,2.6 M0.3,4.8 C1.5,5.8 5.5,5.8 6.7,4.8" stroke="#fff" stroke-width="0.7" fill="none"/></svg>
<div class="num" style="left:962.3px;top:1.6px;color:#555">1</div>
</div>
<div class="rb" style="left:0;top:172.72px;width:1023px"></div>
<div class="row" style="top:173.72px">
<div class="num" style="right:894.5px;top:5.2px">2506911889211157504</div>
<div class="q" style="top:6.6px"><b>select</b> l_shipmode, <b>sum</b>(<b>case</b> <b>when</b> o_orderpriority = $1</div>
<div class="fade" style="top:3px"></div>
<div class="num" style="right:496.29999999999995px;top:5.9px;font-size:8.25px">964 / 2083</div>
<div class="wt"><i style="width:70.35px"></i></div>
<div class="num" style="left:728px;top:5px">(46.28%)</div>
<div class="we"><i style="width:49.00px;background:#8CDB9B;box-shadow:inset 0 0 0 0.6px #7fd08f"></i><i style="width:2.50px;background:#777777;box-shadow:inset 0 0 0 0.6px #666"></i><i style="width:52.10px;background:#4040DC;box-shadow:inset 0 0 0 0.6px #2A2AD0"></i></div>
<svg class="abs" style="left:876.5px;top:1.8px" width="9" height="8" viewBox="0 0 9 8"><path d="M0.8,1 L3.6,3.6 L0.8,6.2" stroke="#333" stroke-width="1.1" fill="none"/><rect x="4.4" y="6.3" width="3.6" height="1" fill="#333"/></svg>
<div class="num" style="left:891.3px;top:1.6px;color:#555">60</div>
<div class="num" style="left:905.6px;top:2.6px;color:#555;font-size:6px">•</div>
<svg class="abs" style="left:915.5px;top:2.0px" width="7" height="8" viewBox="0 0 7 8"><circle cx="3.5" cy="2.2" r="1.8" fill="#333"/><path d="M0.3,7.6 C0.3,5 1.6,4.5 3.5,4.5 C5.4,4.5 6.7,5 6.7,7.6 Z" fill="#333"/></svg>
<div class="num" style="left:926.3px;top:1.6px;color:#555">16</div>
<div class="num" style="left:940.6px;top:2.6px;color:#555;font-size:6px">•</div>
<svg class="abs" style="left:950.5px;top:2.0px" width="7" height="8" viewBox="0 0 7 8"><path d="M0.3,1.5 C0.3,0 6.7,0 6.7,1.5 V6.5 C6.7,8 0.3,8 0.3,6.5 Z" fill="#333"/><path d="M0.3,2.6 C1.5,3.6 5.5,3.6 6.7,2.6 M0.3,4.8 C1.5,5.8 5.5,5.8 6.7,4.8" stroke="#fff" stroke-width="0.7" fill="none"/></svg>
<div class="num" style="left:962.3px;top:1.6px;color:#555">1</div>
</div>
<div class="rb" style="left:0;top:192.59px;width:1023px"></div>
<div class="row" style="top:193.59px">
<div class="num" style="right:894.5px;top:5.2px">-5050080733870841856</div>
<div class="q" style="top:6.6px"><b>select</b> s_name, s_address <b>from</b> supplier, nation <b>where</b> s</div>
<div class="fade" style="top:3px"></div>
<div class="num" style="right:496.29999999999995px;top:5.9px;font-size:8.25px">821 / 1974</div>
<div class="wt"><i style="width:63.22px"></i></div>
<div class="num" style="left:728px;top:5px">(41.59%)</div>
<div class="we"><i style="width:5.90px;background:#27C840;box-shadow:inset 0 0 0 0.6px #1DB536"></i><i style="width:4.20px;background:#8CDB9B;box-shadow:inset 0 0 0 0.6px #7fd08f"></i><i style="width:34.60px;background:#27C840;box-shadow:inset 0 0 0 0.6px #1DB536"></i><i style="width:1.20px;background:#333333;box-shadow:inset 0 0 0 0.6px #222"></i><i style="width:57.70px;background:#4040DC;box-shadow:inset 0 0 0 0.6px #2A2AD0"></i></div>
<svg class="abs" style="left:876.5px;top:1.8px" width="9" height="8" viewBox="0 0 9 8"><path d="M0.8,1 L3.6,3.6 L0.8,6.2" stroke="#333" stroke-width="1.1" fill="none"/><rect x="4.4" y="6.3" width="3.6" height="1" fill="#333"/></svg>
<div class="num" style="left:891.3px;top:1.6px;color:#555">32</div>
<div class="num" style="left:905.6px;top:2.6px;color:#555;font-size:6px">•</div>
<svg class="abs" style="left:915.5px;top:2.0px" width="7" height="8" viewBox="0 0 7 8"><circle cx="3.5" cy="2.2" r="1.8" fill="#333"/><path d="M0.3,7.6 C0.3,5 1.6,4.5 3.5,4.5 C5.4,4.5 6.7,5 6.7,7.6 Z" fill="#333"/></svg>
<div class="num" style="left:926.3px;top:1.6px;color:#555">16</div>
<div class="num" style="left:940.6px;top:2.6px;color:#555;font-size:6px">•</div>
<svg class="abs" style="left:950.5px;top:2.0px" width="7" height="8" viewBox="0 0 7 8"><path d="M0.3,1.5 C0.3,0 6.7,0 6.7,1.5 V6.5 C6.7,8 0.3,8 0.3,6.5 Z" fill="#333"/><path d="M0.3,2.6 C1.5,3.6 5.5,3.6 6.7,2.6 M0.3,4.8 C1.5,5.8 5.5,5.8 6.7,4.8" stroke="#fff" stroke-width="0.7" fill="none"/></svg>
<div class="num" style="left:962.3px;top:1.6px;color:#555">1</div>
</div>
<div class="rb" style="left:0;top:212.46px;width:1023px"></div>
<div class="row" style="top:213.46px">
<div class="num" style="right:894.5px;top:5.2px">7016288111619404800</div>
<div class="q" style="top:6.6px"><b>select</b> <b>sum</b>(l_extendedprice * l_discount) <b>as</b> revenue fr</div>
<div class="fade" style="top:3px"></div>
<div class="num" style="right:496.29999999999995px;top:5.9px;font-size:8.25px">572 / 1008</div>
<div class="wt"><i style="width:86.26px"></i></div>
<div class="num" style="left:728px;top:5px">(56.75%)</div>
<div class="we"><i style="width:46.80px;background:#27C840;box-shadow:inset 0 0 0 0.6px #1DB536"></i><i style="width:1.60px;background:#333333;box-shadow:inset 0 0 0 0.6px #222"></i><i style="width:55.20px;background:#4040DC;box-shadow:inset 0 0 0 0.6px #2A2AD0"></i></div>
<svg class="abs" style="left:876.5px;top:1.8px" width="9" height="8" viewBox="0 0 9 8"><path d="M0.8,1 L3.6,3.6 L0.8,6.2" stroke="#333" stroke-width="1.1" fill="none"/><rect x="4.4" y="6.3" width="3.6" height="1" fill="#333"/></svg>
<div class="num" style="left:891.3px;top:1.6px;color:#555">39</div>
<div class="num" style="left:905.6px;top:2.6px;color:#555;font-size:6px">•</div>
<svg class="abs" style="left:915.5px;top:2.0px" width="7" height="8" viewBox="0 0 7 8"><circle cx="3.5" cy="2.2" r="1.8" fill="#333"/><path d="M0.3,7.6 C0.3,5 1.6,4.5 3.5,4.5 C5.4,4.5 6.7,5 6.7,7.6 Z" fill="#333"/></svg>
<div class="num" style="left:926.3px;top:1.6px;color:#555">16</div>
<div class="num" style="left:940.6px;top:2.6px;color:#555;font-size:6px">•</div>
<svg class="abs" style="left:950.5px;top:2.0px" width="7" height="8" viewBox="0 0 7 8"><path d="M0.3,1.5 C0.3,0 6.7,0 6.7,1.5 V6.5 C6.7,8 0.3,8 0.3,6.5 Z" fill="#333"/><path d="M0.3,2.6 C1.5,3.6 5.5,3.6 6.7,2.6 M0.3,4.8 C1.5,5.8 5.5,5.8 6.7,4.8" stroke="#fff" stroke-width="0.7" fill="none"/></svg>
<div class="num" style="left:962.3px;top:1.6px;color:#555">1</div>
</div>
<div class="rb" style="left:0;top:232.33px;width:1023px"></div>
<div class="row" style="top:233.33px">
<div class="num" style="right:894.5px;top:5.2px">8668133989974769664</div>
<div class="q" style="top:6.6px"><b>select</b> $1 * <b>sum</b>(<b>case</b> <b>when</b> p_type <b>like</b> $2 <b>then</b> l_extenc</div>
<div class="fade" style="top:3px"></div>
<div class="num" style="right:496.29999999999995px;top:5.9px;font-size:8.25px">566 / 999</div>
<div class="wt"><i style="width:86.12px"></i></div>
<div class="num" style="left:728px;top:5px">(56.66%)</div>
<div class="we"><i style="width:33.70px;background:#27C840;box-shadow:inset 0 0 0 0.6px #1DB536"></i><i style="width:2.20px;background:#333333;box-shadow:inset 0 0 0 0.6px #222"></i><i style="width:67.70px;background:#4040DC;box-shadow:inset 0 0 0 0.6px #2A2AD0"></i></div>
<svg class="abs" style="left:876.5px;top:1.8px" width="9" height="8" viewBox="0 0 9 8"><path d="M0.8,1 L3.6,3.6 L0.8,6.2" stroke="#333" stroke-width="1.1" fill="none"/><rect x="4.4" y="6.3" width="3.6" height="1" fill="#333"/></svg>
<div class="num" style="left:891.3px;top:1.6px;color:#555">40</div>
<div class="num" style="left:905.6px;top:2.6px;color:#555;font-size:6px">•</div>
<svg class="abs" style="left:915.5px;top:2.0px" width="7" height="8" viewBox="0 0 7 8"><circle cx="3.5" cy="2.2" r="1.8" fill="#333"/><path d="M0.3,7.6 C0.3,5 1.6,4.5 3.5,4.5 C5.4,4.5 6.7,5 6.7,7.6 Z" fill="#333"/></svg>
<div class="num" style="left:926.3px;top:1.6px;color:#555">16</div>
<div class="num" style="left:940.6px;top:2.6px;color:#555;font-size:6px">•</div>
<svg class="abs" style="left:950.5px;top:2.0px" width="7" height="8" viewBox="0 0 7 8"><path d="M0.3,1.5 C0.3,0 6.7,0 6.7,1.5 V6.5 C6.7,8 0.3,8 0.3,6.5 Z" fill="#333"/><path d="M0.3,2.6 C1.5,3.6 5.5,3.6 6.7,2.6 M0.3,4.8 C1.5,5.8 5.5,5.8 6.7,4.8" stroke="#fff" stroke-width="0.7" fill="none"/></svg>
<div class="num" style="left:962.3px;top:1.6px;color:#555">1</div>
</div>
<div class="rb" style="left:0;top:252.20px;width:1023px"></div>
<div class="row" style="top:253.20px">
<div class="num" style="right:894.5px;top:5.2px">-2550571972276905472</div>
<div class="q" style="top:6.6px"><b>select</b> c_custkey, c_name, <b>sum</b>(l_extendedprice * ($1 - </div>
<div class="fade" style="top:3px"></div>
<div class="num" style="right:496.29999999999995px;top:5.9px;font-size:8.25px">527 / 1053</div>
<div class="wt"><i style="width:76.08px"></i></div>
<div class="num" style="left:728px;top:5px">(50.05%)</div>
<div class="we"><i style="width:1.40px;background:#27C840;box-shadow:inset 0 0 0 0.6px #1DB536"></i><i style="width:9.70px;background:#8CDB9B;box-shadow:inset 0 0 0 0.6px #7fd08f"></i><i style="width:30.60px;background:#27C840;box-shadow:inset 0 0 0 0.6px #1DB536"></i><i style="width:5.50px;background:#333333;box-shadow:inset 0 0 0 0.6px #222"></i><i style="width:56.40px;background:#4040DC;box-shadow:inset 0 0 0 0.6px #2A2AD0"></i></div>
<svg class="abs" style="left:876.5px;top:1.8px" width="9" height="8" viewBox="0 0 9 8"><path d="M0.8,1 L3.6,3.6 L0.8,6.2" stroke="#333" stroke-width="1.1" fill="none"/><rect x="4.4" y="6.3" width="3.6" height="1" fill="#333"/></svg>
<div class="num" style="left:891.3px;top:1.6px;color:#555">55</div>
<div class="num" style="left:905.6px;top:2.6px;color:#555;font-size:6px">•</div>
<svg class="abs" style="left:915.5px;top:2.0px" width="7" height="8" viewBox="0 0 7 8"><circle cx="3.5" cy="2.2" r="1.8" fill="#333"/><path d="M0.3,7.6 C0.3,5 1.6,4.5 3.5,4.5 C5.4,4.5 6.7,5 6.7,7.6 Z" fill="#333"/></svg>
<div class="num" style="left:926.3px;top:1.6px;color:#555">16</div>
<div class="num" style="left:940.6px;top:2.6px;color:#555;font-size:6px">•</div>
<svg class="abs" style="left:950.5px;top:2.0px" width="7" height="8" viewBox="0 0 7 8"><path d="M0.3,1.5 C0.3,0 6.7,0 6.7,1.5 V6.5 C6.7,8 0.3,8 0.3,6.5 Z" fill="#333"/><path d="M0.3,2.6 C1.5,3.6 5.5,3.6 6.7,2.6 M0.3,4.8 C1.5,5.8 5.5,5.8 6.7,4.8" stroke="#fff" stroke-width="0.7" fill="none"/></svg>
<div class="num" style="left:962.3px;top:1.6px;color:#555">1</div>
</div>
<div class="rb" style="left:0;top:272.07px;width:1023px"></div>
<div class="row" style="top:273.07px">
<div class="num" style="right:894.5px;top:5.2px">2396163775572143616</div>
<div class="q" style="top:6.6px"><b>select</b> s_name, <b>count</b>(*) <b>as</b> numwait <b>from</b> supplier, line</div>
<div class="fade" style="top:3px"></div>
<div class="num" style="right:496.29999999999995px;top:5.9px;font-size:8.25px">524 / 1011</div>
<div class="wt"><i style="width:78.78px"></i></div>
<div class="num" style="left:728px;top:5px">(51.83%)</div>
<div class="we"><i style="width:40.30px;background:#27C840;box-shadow:inset 0 0 0 0.6px #1DB536"></i><i style="width:63.30px;background:#4040DC;box-shadow:inset 0 0 0 0.6px #2A2AD0"></i></div>
<svg class="abs" style="left:876.5px;top:1.8px" width="9" height="8" viewBox="0 0 9 8"><path d="M0.8,1 L3.6,3.6 L0.8,6.2" stroke="#333" stroke-width="1.1" fill="none"/><rect x="4.4" y="6.3" width="3.6" height="1" fill="#333"/></svg>
<div class="num" style="left:891.3px;top:1.6px;color:#555">27</div>
<div class="num" style="left:905.6px;top:2.6px;color:#555;font-size:6px">•</div>
<svg class="abs" style="left:915.5px;top:2.0px" width="7" height="8" viewBox="0 0 7 8"><circle cx="3.5" cy="2.2" r="1.8" fill="#333"/><path d="M0.3,7.6 C0.3,5 1.6,4.5 3.5,4.5 C5.4,4.5 6.7,5 6.7,7.6 Z" fill="#333"/></svg>
<div class="num" style="left:926.3px;top:1.6px;color:#555">16</div>
<div class="num" style="left:940.6px;top:2.6px;color:#555;font-size:6px">•</div>
<svg class="abs" style="left:950.5px;top:2.0px" width="7" height="8" viewBox="0 0 7 8"><path d="M0.3,1.5 C0.3,0 6.7,0 6.7,1.5 V6.5 C6.7,8 0.3,8 0.3,6.5 Z" fill="#333"/><path d="M0.3,2.6 C1.5,3.6 5.5,3.6 6.7,2.6 M0.3,4.8 C1.5,5.8 5.5,5.8 6.7,4.8" stroke="#fff" stroke-width="0.7" fill="none"/></svg>
<div class="num" style="left:962.3px;top:1.6px;color:#555">1</div>
</div>
<div class="rb" style="left:0;top:291.94px;width:1023px"></div>
<div class="row" style="top:292.94px">
<div class="num" style="right:894.5px;top:5.2px">1536512659179185664</div>
<div class="q" style="top:6.6px"><b>select</b> s_acctbal, s_name, n_name, p_partkey, p_mfgr, s</div>
<div class="fade" style="top:3px"></div>
<div class="num" style="right:496.29999999999995px;top:5.9px;font-size:8.25px">463 / 590</div>
<div class="wt"><i style="width:119.27px"></i></div>
<div class="num" style="left:728px;top:5px">(78.47%)</div>
<div class="we"><i style="width:1.40px;background:#27C840;box-shadow:inset 0 0 0 0.6px #1DB536"></i><i style="width:5.70px;background:#8CDB9B;box-shadow:inset 0 0 0 0.6px #7fd08f"></i><i style="width:33.60px;background:#27C840;box-shadow:inset 0 0 0 0.6px #1DB536"></i><i style="width:12.50px;background:#333333;box-shadow:inset 0 0 0 0.6px #222"></i><i style="width:50.40px;background:#4040DC;box-shadow:inset 0 0 0 0.6px #2A2AD0"></i></div>
<svg class="abs" style="left:876.5px;top:1.8px" width="9" height="8" viewBox="0 0 9 8"><path d="M0.8,1 L3.6,3.6 L0.8,6.2" stroke="#333" stroke-width="1.1" fill="none"/><rect x="4.4" y="6.3" width="3.6" height="1" fill="#333"/></svg>
<div class="num" style="left:891.3px;top:1.6px;color:#555">42</div>
<div class="num" style="left:905.6px;top:2.6px;color:#555;font-size:6px">•</div>
<svg class="abs" style="left:915.5px;top:2.0px" width="7" height="8" viewBox="0 0 7 8"><circle cx="3.5" cy="2.2" r="1.8" fill="#333"/><path d="M0.3,7.6 C0.3,5 1.6,4.5 3.5,4.5 C5.4,4.5 6.7,5 6.7,7.6 Z" fill="#333"/></svg>
<div class="num" style="left:926.3px;top:1.6px;color:#555">16</div>
<div class="num" style="left:940.6px;top:2.6px;color:#555;font-size:6px">•</div>
<svg class="abs" style="left:950.5px;top:2.0px" width="7" height="8" viewBox="0 0 7 8"><path d="M0.3,1.5 C0.3,0 6.7,0 6.7,1.5 V6.5 C6.7,8 0.3,8 0.3,6.5 Z" fill="#333"/><path d="M0.3,2.6 C1.5,3.6 5.5,3.6 6.7,2.6 M0.3,4.8 C1.5,5.8 5.5,5.8 6.7,4.8" stroke="#fff" stroke-width="0.7" fill="none"/></svg>
<div class="num" style="left:962.3px;top:1.6px;color:#555">1</div>
</div>
<div class="rb" style="left:0;top:311.81px;width:1023px"></div>
<div class="row" style="top:312.81px">
<div class="num" style="right:894.5px;top:5.2px">-4513637949438357504</div>
<div class="q" style="top:6.6px"><b>select</b> c_count, <b>count</b>(*) <b>as</b> custdist <b>from</b> ( <b>select</b> c_c</div>
<div class="fade" style="top:3px"></div>
<div class="num" style="right:496.29999999999995px;top:5.9px;font-size:8.25px">369 / 1430</div>
<div class="wt"><i style="width:39.22px"></i></div>
<div class="num" style="left:728px;top:5px">(25.80%)</div>
<div class="we"><i style="width:17.20px;background:#27C840;box-shadow:inset 0 0 0 0.6px #1DB536"></i><i style="width:30.20px;background:#8CDB9B;box-shadow:inset 0 0 0 0.6px #7fd08f"></i><i style="width:26.10px;background:#27C840;box-shadow:inset 0 0 0 0.6px #1DB536"></i><i style="width:30.10px;background:#4040DC;box-shadow:inset 0 0 0 0.6px #2A2AD0"></i></div>
<svg class="abs" style="left:876.5px;top:1.8px" width="9" height="8" viewBox="0 0 9 8"><path d="M0.8,1 L3.6,3.6 L0.8,6.2" stroke="#333" stroke-width="1.1" fill="none"/><rect x="4.4" y="6.3" width="3.6" height="1" fill="#333"/></svg>
<div class="num" style="left:891.3px;top:1.6px;color:#555">41</div>
<div class="num" style="left:905.6px;top:2.6px;color:#555;font-size:6px">•</div>
<svg class="abs" style="left:915.5px;top:2.0px" width="7" height="8" viewBox="0 0 7 8"><circle cx="3.5" cy="2.2" r="1.8" fill="#333"/><path d="M0.3,7.6 C0.3,5 1.6,4.5 3.5,4.5 C5.4,4.5 6.7,5 6.7,7.6 Z" fill="#333"/></svg>
<div class="num" style="left:926.3px;top:1.6px;color:#555">16</div>
<div class="num" style="left:940.6px;top:2.6px;color:#555;font-size:6px">•</div>
<svg class="abs" style="left:950.5px;top:2.0px" width="7" height="8" viewBox="0 0 7 8"><path d="M0.3,1.5 C0.3,0 6.7,0 6.7,1.5 V6.5 C6.7,8 0.3,8 0.3,6.5 Z" fill="#333"/><path d="M0.3,2.6 C1.5,3.6 5.5,3.6 6.7,2.6 M0.3,4.8 C1.5,5.8 5.5,5.8 6.7,4.8" stroke="#fff" stroke-width="0.7" fill="none"/></svg>
<div class="num" style="left:962.3px;top:1.6px;color:#555">1</div>
</div>
<div class="rb" style="left:0;top:331.68px;width:1023px"></div>
<div class="row" style="top:332.68px">
<div class="num" style="right:894.5px;top:5.2px">-6633648885927191552</div>
<div class="q" style="top:6.6px"><b>select</b> l_orderkey, <b>sum</b>(l_extendedprice * ($1 - l_disco</div>
<div class="fade" style="top:3px"></div>
<div class="num" style="right:496.29999999999995px;top:5.9px;font-size:8.25px">349 / 595</div>
<div class="wt"><i style="width:89.16px"></i></div>
<div class="num" style="left:728px;top:5px">(58.66%)</div>
<div class="we"><i style="width:35.10px;background:#27C840;box-shadow:inset 0 0 0 0.6px #1DB536"></i><i style="width:4.20px;background:#777777;box-shadow:inset 0 0 0 0.6px #666"></i><i style="width:64.30px;background:#4040DC;box-shadow:inset 0 0 0 0.6px #2A2AD0"></i></div>
<svg class="abs" style="left:876.5px;top:1.8px" width="9" height="8" viewBox="0 0 9 8"><path d="M0.8,1 L3.6,3.6 L0.8,6.2" stroke="#333" stroke-width="1.1" fill="none"/><rect x="4.4" y="6.3" width="3.6" height="1" fill="#333"/></svg>
<div class="num" style="left:891.3px;top:1.6px;color:#555">28</div>
<div class="num" style="left:905.6px;top:2.6px;color:#555;font-size:6px">•</div>
<svg class="abs" style="left:915.5px;top:2.0px" width="7" height="8" viewBox="0 0 7 8"><circle cx="3.5" cy="2.2" r="1.8" fill="#333"/><path d="M0.3,7.6 C0.3,5 1.6,4.5 3.5,4.5 C5.4,4.5 6.7,5 6.7,7.6 Z" fill="#333"/></svg>
<div class="num" style="left:926.3px;top:1.6px;color:#555">16</div>
<div class="num" style="left:940.6px;top:2.6px;color:#555;font-size:6px">•</div>
<svg class="abs" style="left:950.5px;top:2.0px" width="7" height="8" viewBox="0 0 7 8"><path d="M0.3,1.5 C0.3,0 6.7,0 6.7,1.5 V6.5 C6.7,8 0.3,8 0.3,6.5 Z" fill="#333"/><path d="M0.3,2.6 C1.5,3.6 5.5,3.6 6.7,2.6 M0.3,4.8 C1.5,5.8 5.5,5.8 6.7,4.8" stroke="#fff" stroke-width="0.7" fill="none"/></svg>
<div class="num" style="left:962.3px;top:1.6px;color:#555">1</div>
</div>
</div>
</body></html>
